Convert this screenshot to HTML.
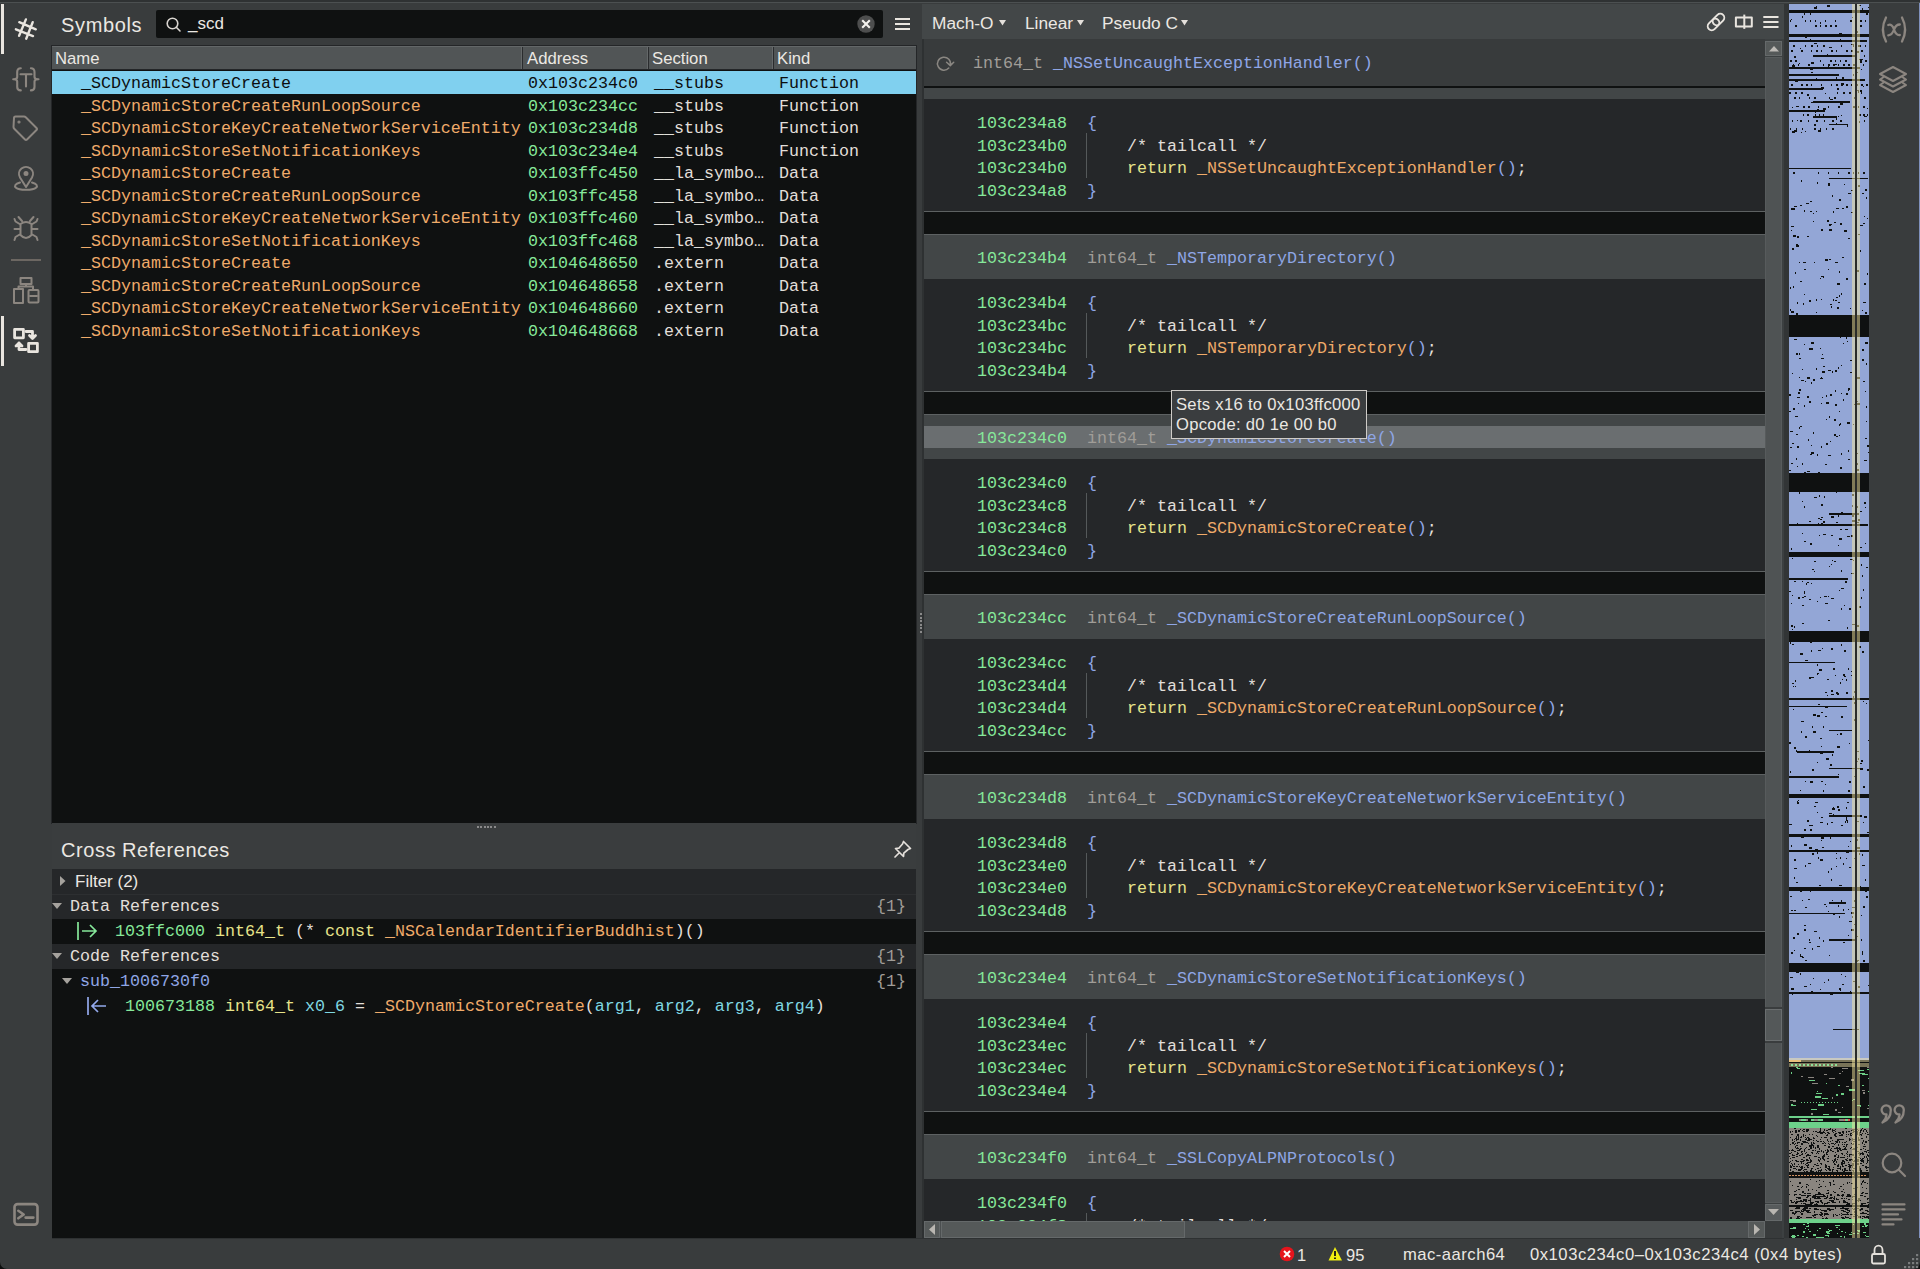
<!DOCTYPE html><html><head><meta charset="utf-8"><style>
*{margin:0;padding:0;box-sizing:border-box}
html,body{width:1920px;height:1269px;overflow:hidden;background:#393c3d;font-family:"Liberation Sans",sans-serif;color:#e4e1dc}
.a{position:absolute}
.m{font-family:"Liberation Mono",monospace;font-size:16.67px;white-space:pre;line-height:22.5px}
.s{font-family:"Liberation Sans",sans-serif;white-space:pre}
.ic{position:absolute;fill:none;stroke:#8c8680;stroke-width:2;stroke-linecap:round;stroke-linejoin:round}
.or{color:#f0ab6a}.gr{color:#86e89a}.wh{color:#e2dfda}.bl{color:#8fa6e6}.gy{color:#a09d98}.ye{color:#e7e38a}.cy{color:#7fd7e2}
</style></head><body>
<div class="a" style="left:0;top:0;width:1920px;height:2px;background:#2f3233"></div>
<div class="a" style="left:0;top:2px;width:1920px;height:1px;background:#4c5051"></div>
<div class="a" style="left:1px;top:4px;width:3px;height:50px;background:#e9e5df"></div>
<div class="a" style="left:1px;top:316px;width:3px;height:50px;background:#e9e5df"></div>
<div class="a" style="left:11px;top:259px;width:30px;height:2px;background:#6c6762"></div>
<svg class="ic" style="left:8px;top:10px;stroke:#e9e5df;stroke-width:2.4" width="36" height="36" viewBox="0 0 36 36"><path d="M11.3 12.2 L27.8 19.3 M7.9 19.3 L25 26.1 M17.9 9.4 L11.1 25.8 M24.7 12.2 L18.2 28.7"/></svg>
<svg class="ic" style="left:12px;top:66px;stroke-width:2.1" width="28" height="28" viewBox="0 0 28 28"><path d="M8.8 2.2 C6 2.2 5.2 3.5 5.2 6 L5.2 11 C5.2 12.5 4 13.3 1.2 13.3 C4 13.3 5.2 14.2 5.2 15.5 L5.2 21 C5.2 23.5 6 24.4 8.8 24.4 M18.9 2.2 C21.7 2.2 22.5 3.5 22.5 6 L22.5 11 C22.5 12.5 23.7 13.3 26.5 13.3 C23.7 13.3 22.5 14.2 22.5 15.5 L22.5 21 C22.5 23.5 21.7 24.4 18.9 24.4 M8.5 8.3 L19.5 8.3 M14 8.3 L14 20.5"/></svg>
<svg class="ic" style="left:12px;top:115px" width="28" height="28" viewBox="0 0 28 28"><path d="M2 3 Q2 1.5 3.5 1.5 L12 1.5 Q13 1.5 14 2.5 L24.5 13 Q25.5 14 24.5 15 L15 24.5 Q14 25.5 13 24.5 L2.5 14 Q1.5 13 1.5 12 Z"/><circle cx="7" cy="7" r="0.6" fill="#8c8680"/></svg>
<svg class="ic" style="left:12px;top:165px" width="28" height="28" viewBox="0 0 28 28"><path d="M14 22 L8 12.5 A7 7 0 1 1 20 12.5 Z"/><circle cx="14" cy="8.5" r="1.5" fill="#8c8680"/><path d="M8 17.5 C3 19 2 21 4 22.8 C7 25.5 21 25.5 24 22.8 C26 21 25 19 20 17.5"/></svg>
<svg class="ic" style="left:12px;top:215px" width="28" height="28" viewBox="0 0 28 28"><path d="M8.5 9 Q14 5 19.5 9 L19.5 20 Q14 26 8.5 20 Z M10 6 L6.5 2 M18 6 L21.5 2 M8.5 14 L2.5 14 M19.5 14 L25.5 14 M8.5 9.5 L3.5 6.5 L2.5 4 M19.5 9.5 L24.5 6.5 L25.5 4 M8.5 19 L3.5 22 L2.5 25 M19.5 19 L24.5 22 L25.5 25"/></svg>
<svg class="ic" style="left:12px;top:276px" width="28" height="29" viewBox="0 0 28 29"><rect x="8.5" y="2" width="11" height="6"/><path d="M14 8 L14 10.5 L6.5 10.5 L6.5 13 M14 10.5 L21 10.5 L21 13"/><rect x="2" y="13" width="9" height="14"/><rect x="16.5" y="14" width="10" height="12.5" rx="1"/><path d="M18 20 L25 20"/></svg>
<svg class="ic" style="left:12px;top:327px;stroke:#e9e5df;stroke-width:2.8" width="28" height="28" viewBox="0 0 28 28"><rect x="2.6" y="2.4" width="8.8" height="8.4"/><rect x="16.6" y="16.3" width="8.8" height="8.4"/><path d="M14 4.5 L20.5 4.5 L20.5 11 M17.5 8.5 L20.5 11.5 L23.5 8.5 M14 22.5 L7 22.5 L7 16 M4 19 L7 16 L10 19"/></svg>
<svg class="ic" style="left:12px;top:1202px;stroke-width:2.6" width="28" height="25" viewBox="0 0 28 25"><rect x="2.5" y="2.1" width="23" height="20.5" rx="3"/><path d="M6.3 8.8 L11.7 12.5 L6.3 16.3 M13.6 15.6 L21.4 15.6"/></svg>
<div class="a s" style="left:61px;top:12px;font-size:20px;line-height:26px;letter-spacing:0.65px;color:#ebe8e3">Symbols</div>
<div class="a" style="left:156px;top:10px;width:727px;height:27.5px;background:#0f1111;border-radius:2px"></div>
<svg class="ic" style="left:165px;top:16px;stroke:#d9d5d0;stroke-width:1.6" width="18" height="18" viewBox="0 0 18 18"><circle cx="7.5" cy="7.5" r="5.3"/><path d="M11.3 11.3 L15 15"/></svg>
<div class="a s" style="left:188px;top:13px;font-size:17px;line-height:22px;color:#ebe8e3">_scd</div>
<svg class="a" style="left:857px;top:15px" width="18" height="18" viewBox="0 0 18 18"><circle cx="9" cy="9" r="8.7" fill="#4d4e4e"/><path d="M5.2 5.2 L12.8 12.8 M12.8 5.2 L5.2 12.8" stroke="#f4f2ee" stroke-width="2.1"/></svg>
<svg class="ic" style="left:894px;top:14px;stroke:#e9e5df;stroke-width:2;stroke-linecap:butt" width="18" height="20" viewBox="0 0 18 20"><path d="M1 5 L16 5 M1 10 L16 10 M1 15 L16 15"/></svg>
<div class="a" style="left:51px;top:45px;width:866px;height:779px;background:#242628"></div>
<div class="a" style="left:52px;top:70px;width:864px;height:753px;background:#0f1111"></div>
<div class="a" style="left:52px;top:46px;width:864px;height:23px;background:#515556;border-top:1px solid #636768"></div>
<div class="a" style="left:521px;top:47px;width:1px;height:22px;background:#646869"></div>
<div class="a" style="left:522px;top:47px;width:1px;height:22px;background:#2a2c2e"></div>
<div class="a" style="left:647px;top:47px;width:1px;height:22px;background:#646869"></div>
<div class="a" style="left:648px;top:47px;width:1px;height:22px;background:#2a2c2e"></div>
<div class="a" style="left:772px;top:47px;width:1px;height:22px;background:#646869"></div>
<div class="a" style="left:773px;top:47px;width:1px;height:22px;background:#2a2c2e"></div>
<div class="a s" style="left:55px;top:48px;font-size:16.7px;line-height:22px;color:#ebe8e3">Name</div>
<div class="a s" style="left:527px;top:48px;font-size:16.7px;line-height:22px;color:#ebe8e3">Address</div>
<div class="a s" style="left:652px;top:48px;font-size:16.7px;line-height:22px;color:#ebe8e3">Section</div>
<div class="a s" style="left:777px;top:48px;font-size:16.7px;line-height:22px;color:#ebe8e3">Kind</div>
<div class="a" style="left:52px;top:71.0px;width:864px;height:22.5px;background:#80d0ef"></div>
<div class="a m" style="left:81px;top:73.0px;color:#0c0d0d">_SCDynamicStoreCreate</div>
<div class="a m" style="left:528px;top:73.0px;color:#0c0d0d">0x103c234c0</div>
<div class="a m" style="left:654px;top:73.0px;color:#0c0d0d">__stubs</div>
<div class="a m" style="left:779px;top:73.0px;color:#0c0d0d">Function</div>
<div class="a m" style="left:81px;top:95.5px;color:#f0ab6a">_SCDynamicStoreCreateRunLoopSource</div>
<div class="a m" style="left:528px;top:95.5px;color:#86e89a">0x103c234cc</div>
<div class="a m" style="left:654px;top:95.5px;color:#e2dfda">__stubs</div>
<div class="a m" style="left:779px;top:95.5px;color:#e2dfda">Function</div>
<div class="a m" style="left:81px;top:118.0px;color:#f0ab6a">_SCDynamicStoreKeyCreateNetworkServiceEntity</div>
<div class="a m" style="left:528px;top:118.0px;color:#86e89a">0x103c234d8</div>
<div class="a m" style="left:654px;top:118.0px;color:#e2dfda">__stubs</div>
<div class="a m" style="left:779px;top:118.0px;color:#e2dfda">Function</div>
<div class="a m" style="left:81px;top:140.5px;color:#f0ab6a">_SCDynamicStoreSetNotificationKeys</div>
<div class="a m" style="left:528px;top:140.5px;color:#86e89a">0x103c234e4</div>
<div class="a m" style="left:654px;top:140.5px;color:#e2dfda">__stubs</div>
<div class="a m" style="left:779px;top:140.5px;color:#e2dfda">Function</div>
<div class="a m" style="left:81px;top:163.0px;color:#f0ab6a">_SCDynamicStoreCreate</div>
<div class="a m" style="left:528px;top:163.0px;color:#86e89a">0x103ffc450</div>
<div class="a m" style="left:654px;top:163.0px;color:#e2dfda">__la_symbo…</div>
<div class="a m" style="left:779px;top:163.0px;color:#e2dfda">Data</div>
<div class="a m" style="left:81px;top:185.5px;color:#f0ab6a">_SCDynamicStoreCreateRunLoopSource</div>
<div class="a m" style="left:528px;top:185.5px;color:#86e89a">0x103ffc458</div>
<div class="a m" style="left:654px;top:185.5px;color:#e2dfda">__la_symbo…</div>
<div class="a m" style="left:779px;top:185.5px;color:#e2dfda">Data</div>
<div class="a m" style="left:81px;top:208.0px;color:#f0ab6a">_SCDynamicStoreKeyCreateNetworkServiceEntity</div>
<div class="a m" style="left:528px;top:208.0px;color:#86e89a">0x103ffc460</div>
<div class="a m" style="left:654px;top:208.0px;color:#e2dfda">__la_symbo…</div>
<div class="a m" style="left:779px;top:208.0px;color:#e2dfda">Data</div>
<div class="a m" style="left:81px;top:230.5px;color:#f0ab6a">_SCDynamicStoreSetNotificationKeys</div>
<div class="a m" style="left:528px;top:230.5px;color:#86e89a">0x103ffc468</div>
<div class="a m" style="left:654px;top:230.5px;color:#e2dfda">__la_symbo…</div>
<div class="a m" style="left:779px;top:230.5px;color:#e2dfda">Data</div>
<div class="a m" style="left:81px;top:253.0px;color:#f0ab6a">_SCDynamicStoreCreate</div>
<div class="a m" style="left:528px;top:253.0px;color:#86e89a">0x104648650</div>
<div class="a m" style="left:654px;top:253.0px;color:#e2dfda">.extern</div>
<div class="a m" style="left:779px;top:253.0px;color:#e2dfda">Data</div>
<div class="a m" style="left:81px;top:275.5px;color:#f0ab6a">_SCDynamicStoreCreateRunLoopSource</div>
<div class="a m" style="left:528px;top:275.5px;color:#86e89a">0x104648658</div>
<div class="a m" style="left:654px;top:275.5px;color:#e2dfda">.extern</div>
<div class="a m" style="left:779px;top:275.5px;color:#e2dfda">Data</div>
<div class="a m" style="left:81px;top:298.0px;color:#f0ab6a">_SCDynamicStoreKeyCreateNetworkServiceEntity</div>
<div class="a m" style="left:528px;top:298.0px;color:#86e89a">0x104648660</div>
<div class="a m" style="left:654px;top:298.0px;color:#e2dfda">.extern</div>
<div class="a m" style="left:779px;top:298.0px;color:#e2dfda">Data</div>
<div class="a m" style="left:81px;top:320.5px;color:#f0ab6a">_SCDynamicStoreSetNotificationKeys</div>
<div class="a m" style="left:528px;top:320.5px;color:#86e89a">0x104648668</div>
<div class="a m" style="left:654px;top:320.5px;color:#e2dfda">.extern</div>
<div class="a m" style="left:779px;top:320.5px;color:#e2dfda">Data</div>
<div class="a" style="left:52px;top:823px;width:864px;height:46px;background:#3a3d3e"></div>
<div class="a" style="left:477px;top:826px;width:20px;height:2px;background:repeating-linear-gradient(90deg,#8a8a8a 0 2px,transparent 2px 3.3px)"></div>
<div class="a s" style="left:61px;top:837px;font-size:20px;line-height:26px;letter-spacing:0.55px;color:#ebe8e3">Cross References</div>
<svg class="ic" style="left:891px;top:839px;stroke:#e4e0db;stroke-width:1.7" width="22" height="22" viewBox="0 0 22 22"><path d="M12.5 2.5 L19.5 9.5 L17 10.5 L12.8 14.2 L12.5 17.5 L4.5 9.5 L7.8 9.2 L11.5 5 Z M8.5 13.5 L4 18"/></svg>
<div class="a" style="left:52px;top:869px;width:864px;height:369px;background:#0f1111"></div>
<div class="a" style="left:52px;top:869px;width:864px;height:25px;background:#252729"></div>
<div class="a" style="left:52px;top:894px;width:864px;height:1px;background:#2d2f31"></div>
<div class="a" style="left:52px;top:895px;width:864px;height:24px;background:#252729"></div>
<div class="a" style="left:52px;top:944px;width:864px;height:25px;background:#252729"></div>
<svg class="a" style="left:59px;top:875px" width="8" height="12"><path d="M1 1 L6.5 6 L1 11 Z" fill="#a5a29d"/></svg>
<div class="a s" style="left:75px;top:871px;font-size:17px;line-height:22px;color:#ebe8e3">Filter (2)</div>
<svg class="a" style="left:51px;top:902px" width="12" height="8"><path d="M1 1 L11 1 L6 7 Z" fill="#a5a29d"/></svg>
<div class="a m" style="left:70px;top:896.2px;color:#e2dfda">Data References</div>
<div class="a m" style="left:876px;top:896.2px;color:#a09d98">{1}</div>
<svg class="a" style="left:76px;top:920px" width="24" height="22" viewBox="0 0 24 22"><path d="M2 2 L2 20 M6 11 L20 11 M14 5 L20 11 L14 17" stroke="#86e89a" stroke-width="1.7" fill="none"/></svg>
<div class="a m" style="left:115px;top:921.2px"><span class="gr">103ffc000</span> <span class="ye">int64_t</span> <span class="wh">(*</span> <span class="ye">const</span> <span class="or">_NSCalendarIdentifierBuddhist</span><span class="wh">)()</span></div>
<svg class="a" style="left:51px;top:952px" width="12" height="8"><path d="M1 1 L11 1 L6 7 Z" fill="#a5a29d"/></svg>
<div class="a m" style="left:70px;top:946.2px;color:#e2dfda">Code References</div>
<div class="a m" style="left:876px;top:946.2px;color:#a09d98">{1}</div>
<svg class="a" style="left:61px;top:977px" width="12" height="8"><path d="M1 1 L11 1 L6 7 Z" fill="#a5a29d"/></svg>
<div class="a m" style="left:80px;top:971.2px;color:#8fa6e6">sub_1006730f0</div>
<div class="a m" style="left:876px;top:971.2px;color:#a09d98">{1}</div>
<svg class="a" style="left:86px;top:995px" width="24" height="22" viewBox="0 0 24 22"><path d="M2 2 L2 20 M6 11 L20 11 M12 5 L6 11 L12 17" stroke="#93a9ec" stroke-width="1.7" fill="none"/></svg>
<div class="a m" style="left:125px;top:996.2px"><span class="gr">100673188</span> <span class="ye">int64_t</span> <span class="cy">x0_6</span> <span class="wh">=</span> <span class="or">_SCDynamicStoreCreate</span><span class="wh">(</span><span class="cy">arg1</span><span class="wh">, </span><span class="cy">arg2</span><span class="wh">, </span><span class="cy">arg3</span><span class="wh">, </span><span class="cy">arg4</span><span class="wh">)</span></div>
<div class="a" style="left:922px;top:39px;width:2px;height:1199px;background:#2e3132"></div>
<div class="a" style="left:920px;top:613px;width:2px;height:21px;background:repeating-linear-gradient(180deg,#8a8a8a 0 2px,transparent 2px 3.5px)"></div>
<div class="a" style="left:922px;top:4px;width:862px;height:35px;background:#434748"></div>
<div class="a" style="left:922px;top:38.5px;width:862px;height:1px;background:#2f3233"></div>
<div class="a s" style="left:932px;top:12px;font-size:17.3px;line-height:22px;color:#ebe8e3">Mach-O</div><svg class="a" style="left:999px;top:20px" width="8" height="6"><path d="M0 0 L7 0 L3.5 5.5 Z" fill="#e4e0db"/></svg>
<div class="a s" style="left:1025px;top:12px;font-size:17.3px;line-height:22px;color:#ebe8e3">Linear</div><svg class="a" style="left:1077px;top:20px" width="8" height="6"><path d="M0 0 L7 0 L3.5 5.5 Z" fill="#e4e0db"/></svg>
<div class="a s" style="left:1102px;top:12px;font-size:17.3px;line-height:22px;color:#ebe8e3">Pseudo C</div><svg class="a" style="left:1181px;top:20px" width="8" height="6"><path d="M0 0 L7 0 L3.5 5.5 Z" fill="#e4e0db"/></svg>
<svg class="ic" style="left:1704px;top:9px;stroke:#e9e5df;stroke-width:1.9" width="24" height="24" viewBox="0 0 24 24"><rect x="3" y="11.5" width="13" height="8" rx="4" transform="rotate(-45 9.5 15.5)"/><rect x="8" y="6.5" width="13" height="8" rx="4" transform="rotate(-45 14.5 10.5)"/></svg>
<svg class="ic" style="left:1734px;top:13px;stroke:#e9e5df;stroke-width:2;stroke-linecap:butt" width="20" height="18" viewBox="0 0 20 18"><rect x="1.9" y="4.4" width="15.9" height="9.2"/><path d="M10.3 1.6 L10.3 15.9"/></svg>
<svg class="ic" style="left:1762px;top:14px;stroke:#e9e5df;stroke-width:2;stroke-linecap:butt" width="18" height="16" viewBox="0 0 18 16"><path d="M1.3 3 L16.5 3 M1.3 8 L16.5 8 M1.3 13 L16.5 13"/></svg>
<div class="a" style="left:924px;top:39px;width:841px;height:1182px;background:#252729;overflow:hidden">
<div class="a" style="left:0px;top:16px;width:841px;height:44px;background:#424647;"></div>
<div class="a" style="left:0px;top:172px;width:841px;height:1px;background:#5d6162;"></div>
<div class="a" style="left:0px;top:173px;width:841px;height:22px;background:#0f1111;"></div>
<div class="a" style="left:0px;top:195px;width:841px;height:1px;background:#5d6162;"></div>
<div class="a m" style="left:53px;top:28.75px"><span class="gr">103c234a8</span>  <span class="gy">int64_t</span> <span class="bl">_NSSetUncaughtExceptionHandler()</span></div>
<div class="a m" style="left:53px;top:73.75px"><span class="gr">103c234a8</span>  <span class="bl">{</span></div>
<div class="a m" style="left:53px;top:96.75px"><span class="gr">103c234b0</span>      <span class="wh">/* tailcall */</span></div>
<div class="a m" style="left:53px;top:118.75px"><span class="gr">103c234b0</span>      <span class="ye">return</span> <span class="or">_NSSetUncaughtExceptionHandler</span><span class="bl">()</span><span class="wh">;</span></div>
<div class="a m" style="left:53px;top:141.75px"><span class="gr">103c234a8</span>  <span class="bl">}</span></div>
<div class="a" style="left:162px;top:94px;width:1px;height:45px;background:#55595a;"></div>
<div class="a" style="left:0px;top:196px;width:841px;height:44px;background:#424647;"></div>
<div class="a" style="left:0px;top:352px;width:841px;height:1px;background:#5d6162;"></div>
<div class="a" style="left:0px;top:353px;width:841px;height:22px;background:#0f1111;"></div>
<div class="a" style="left:0px;top:375px;width:841px;height:1px;background:#5d6162;"></div>
<div class="a m" style="left:53px;top:208.75px"><span class="gr">103c234b4</span>  <span class="gy">int64_t</span> <span class="bl">_NSTemporaryDirectory()</span></div>
<div class="a m" style="left:53px;top:253.75px"><span class="gr">103c234b4</span>  <span class="bl">{</span></div>
<div class="a m" style="left:53px;top:276.75px"><span class="gr">103c234bc</span>      <span class="wh">/* tailcall */</span></div>
<div class="a m" style="left:53px;top:298.75px"><span class="gr">103c234bc</span>      <span class="ye">return</span> <span class="or">_NSTemporaryDirectory</span><span class="bl">()</span><span class="wh">;</span></div>
<div class="a m" style="left:53px;top:321.75px"><span class="gr">103c234b4</span>  <span class="bl">}</span></div>
<div class="a" style="left:162px;top:274px;width:1px;height:45px;background:#55595a;"></div>
<div class="a" style="left:0px;top:376px;width:841px;height:44px;background:#424647;"></div>
<div class="a" style="left:0px;top:386.5px;width:841px;height:22px;background:#6a6e70;"></div>
<div class="a" style="left:0px;top:532px;width:841px;height:1px;background:#5d6162;"></div>
<div class="a" style="left:0px;top:533px;width:841px;height:22px;background:#0f1111;"></div>
<div class="a" style="left:0px;top:555px;width:841px;height:1px;background:#5d6162;"></div>
<div class="a m" style="left:53px;top:388.75px"><span class="gr">103c234c0</span>  <span class="gy">int64_t</span> <span class="bl">_SCDynamicStoreCreate()</span></div>
<div class="a m" style="left:53px;top:433.75px"><span class="gr">103c234c0</span>  <span class="bl">{</span></div>
<div class="a m" style="left:53px;top:456.75px"><span class="gr">103c234c8</span>      <span class="wh">/* tailcall */</span></div>
<div class="a m" style="left:53px;top:478.75px"><span class="gr">103c234c8</span>      <span class="ye">return</span> <span class="or">_SCDynamicStoreCreate</span><span class="bl">()</span><span class="wh">;</span></div>
<div class="a m" style="left:53px;top:501.75px"><span class="gr">103c234c0</span>  <span class="bl">}</span></div>
<div class="a" style="left:162px;top:454px;width:1px;height:45px;background:#55595a;"></div>
<div class="a" style="left:0px;top:556px;width:841px;height:44px;background:#424647;"></div>
<div class="a" style="left:0px;top:712px;width:841px;height:1px;background:#5d6162;"></div>
<div class="a" style="left:0px;top:713px;width:841px;height:22px;background:#0f1111;"></div>
<div class="a" style="left:0px;top:735px;width:841px;height:1px;background:#5d6162;"></div>
<div class="a m" style="left:53px;top:568.75px"><span class="gr">103c234cc</span>  <span class="gy">int64_t</span> <span class="bl">_SCDynamicStoreCreateRunLoopSource()</span></div>
<div class="a m" style="left:53px;top:613.75px"><span class="gr">103c234cc</span>  <span class="bl">{</span></div>
<div class="a m" style="left:53px;top:636.75px"><span class="gr">103c234d4</span>      <span class="wh">/* tailcall */</span></div>
<div class="a m" style="left:53px;top:658.75px"><span class="gr">103c234d4</span>      <span class="ye">return</span> <span class="or">_SCDynamicStoreCreateRunLoopSource</span><span class="bl">()</span><span class="wh">;</span></div>
<div class="a m" style="left:53px;top:681.75px"><span class="gr">103c234cc</span>  <span class="bl">}</span></div>
<div class="a" style="left:162px;top:634px;width:1px;height:45px;background:#55595a;"></div>
<div class="a" style="left:0px;top:736px;width:841px;height:44px;background:#424647;"></div>
<div class="a" style="left:0px;top:892px;width:841px;height:1px;background:#5d6162;"></div>
<div class="a" style="left:0px;top:893px;width:841px;height:22px;background:#0f1111;"></div>
<div class="a" style="left:0px;top:915px;width:841px;height:1px;background:#5d6162;"></div>
<div class="a m" style="left:53px;top:748.75px"><span class="gr">103c234d8</span>  <span class="gy">int64_t</span> <span class="bl">_SCDynamicStoreKeyCreateNetworkServiceEntity()</span></div>
<div class="a m" style="left:53px;top:793.75px"><span class="gr">103c234d8</span>  <span class="bl">{</span></div>
<div class="a m" style="left:53px;top:816.75px"><span class="gr">103c234e0</span>      <span class="wh">/* tailcall */</span></div>
<div class="a m" style="left:53px;top:838.75px"><span class="gr">103c234e0</span>      <span class="ye">return</span> <span class="or">_SCDynamicStoreKeyCreateNetworkServiceEntity</span><span class="bl">()</span><span class="wh">;</span></div>
<div class="a m" style="left:53px;top:861.75px"><span class="gr">103c234d8</span>  <span class="bl">}</span></div>
<div class="a" style="left:162px;top:814px;width:1px;height:45px;background:#55595a;"></div>
<div class="a" style="left:0px;top:916px;width:841px;height:44px;background:#424647;"></div>
<div class="a" style="left:0px;top:1072px;width:841px;height:1px;background:#5d6162;"></div>
<div class="a" style="left:0px;top:1073px;width:841px;height:22px;background:#0f1111;"></div>
<div class="a" style="left:0px;top:1095px;width:841px;height:1px;background:#5d6162;"></div>
<div class="a m" style="left:53px;top:928.75px"><span class="gr">103c234e4</span>  <span class="gy">int64_t</span> <span class="bl">_SCDynamicStoreSetNotificationKeys()</span></div>
<div class="a m" style="left:53px;top:973.75px"><span class="gr">103c234e4</span>  <span class="bl">{</span></div>
<div class="a m" style="left:53px;top:996.75px"><span class="gr">103c234ec</span>      <span class="wh">/* tailcall */</span></div>
<div class="a m" style="left:53px;top:1018.75px"><span class="gr">103c234ec</span>      <span class="ye">return</span> <span class="or">_SCDynamicStoreSetNotificationKeys</span><span class="bl">()</span><span class="wh">;</span></div>
<div class="a m" style="left:53px;top:1041.75px"><span class="gr">103c234e4</span>  <span class="bl">}</span></div>
<div class="a" style="left:162px;top:994px;width:1px;height:45px;background:#55595a;"></div>
<div class="a" style="left:0px;top:1096px;width:841px;height:44px;background:#424647;"></div>
<div class="a" style="left:0px;top:1252px;width:841px;height:1px;background:#5d6162;"></div>
<div class="a" style="left:0px;top:1253px;width:841px;height:22px;background:#0f1111;"></div>
<div class="a" style="left:0px;top:1275px;width:841px;height:1px;background:#5d6162;"></div>
<div class="a m" style="left:53px;top:1108.75px"><span class="gr">103c234f0</span>  <span class="gy">int64_t</span> <span class="bl">_SSLCopyALPNProtocols()</span></div>
<div class="a m" style="left:53px;top:1153.75px"><span class="gr">103c234f0</span>  <span class="bl">{</span></div>
<div class="a m" style="left:53px;top:1176.75px"><span class="gr">103c234f8</span>      <span class="wh">/* tailcall */</span></div>
<div class="a m" style="left:53px;top:1198.75px"><span class="gr">103c234f8</span>      <span class="ye">return</span> <span class="or">_SSLCopyALPNProtocols</span><span class="bl">()</span><span class="wh">;</span></div>
<div class="a m" style="left:53px;top:1221.75px"><span class="gr">103c234f0</span>  <span class="bl">}</span></div>
<div class="a" style="left:162px;top:1174px;width:1px;height:45px;background:#55595a;"></div>
<div class="a" style="left:0px;top:0px;width:841px;height:47px;background:#383b3c;"></div>
<div class="a" style="left:0px;top:47px;width:841px;height:1.5px;background:#0f1111;"></div>
<div class="a m" style="left:49px;top:13.75px"><span class="gy">int64_t</span> <span class="bl">_NSSetUncaughtExceptionHandler()</span></div>
<svg class="ic" style="left:11px;top:16px;stroke:#8a8782;stroke-width:1.5" width="22" height="18" viewBox="0 0 22 18"><path d="M13.78 13.08 A6.5 6.5 0 1 1 15.3 10.2 M11.6 7.3 L15.3 10.6 L18.7 7.3"/></svg>
</div>
<div class="a" style="left:924px;top:1221px;width:841px;height:17px;background:#4b4f50"></div>
<div class="a" style="left:924px;top:1221px;width:16px;height:17px;background:#555959;border:1px solid #65696a"></div>
<div class="a" style="left:941px;top:1221px;width:244px;height:17px;background:#555959;border:1px solid #65696a"></div>
<div class="a" style="left:1748px;top:1221px;width:17px;height:17px;background:#555959;border:1px solid #65696a"></div>
<div class="a" style="left:1765px;top:39px;width:17px;height:1182px;background:#3c4041"></div>
<div class="a" style="left:1765px;top:57px;width:17px;height:1146px;background:#4f5354;border:1px solid #575b5c"></div>
<div class="a" style="left:1765px;top:41px;width:17px;height:15px;background:#555959;border:1px solid #65696a"></div>
<svg class="a" style="left:1768.5px;top:46px" width="10" height="5.5"><path d="M0 5.5 L5 0 L10 5.5 Z" fill="#bdbab5"/></svg>
<div class="a" style="left:1765px;top:1204px;width:17px;height:17px;background:#575b5c;border:1px solid #65696a"></div>
<svg class="a" style="left:1768px;top:1209px" width="11" height="6"><path d="M0 0 L5.5 6 L11 0 Z" fill="#b9b6b1"/></svg>
<div class="a" style="left:1765px;top:1007px;width:17px;height:36px;background:#3a3d3e"></div>
<div class="a" style="left:1765px;top:1009px;width:17px;height:32px;background:#545859;border:1px solid #6a6e6f"></div>
<svg class="a" style="left:929px;top:1224px" width="6" height="11"><path d="M6 0 L0 5.5 L6 11 Z" fill="#b9b6b1"/></svg>
<svg class="a" style="left:1754px;top:1224px" width="6" height="11"><path d="M0 0 L6 5.5 L0 11 Z" fill="#b9b6b1"/></svg>
<div class="a" style="left:1765px;top:1221px;width:17px;height:17px;background:#383b3c"></div>
<div class="a" style="left:922px;top:1238px;width:862px;height:1px;background:#2e3132"></div>
<div class="a" style="left:1171px;top:389.5px;width:196px;height:49px;background:#3a3d3f;border:1px solid #cfccc8"></div>
<div class="a s" style="left:1176px;top:394.5px;font-size:16.6px;line-height:20px;letter-spacing:0.3px;color:#ebe8e3">Sets x16 to 0x103ffc000<br>Opcode: d0 1e 00 b0</div>
<div class="a" style="left:1782px;top:39px;width:2px;height:1199px;background:#3c4041"></div>
<div class="a" style="left:1784px;top:4px;width:5px;height:1234px;background:#323536"></div>
<svg class="a" style="left:1789px;top:4px" width="80" height="1234" viewBox="0 0 80 1234" shape-rendering="crispEdges"><rect x="0" y="0" width="80" height="1234" fill="#93a6d6"/><rect x="0.0" y="6.0" width="80.0" height="3.0" fill="#0f1111"/><rect x="0.0" y="30.0" width="80.0" height="2.6" fill="#0f1111"/><rect x="0.0" y="311.0" width="80.0" height="21.5" fill="#0f1111"/><rect x="0.0" y="468.6" width="80.0" height="18.9" fill="#0f1111"/><rect x="0.0" y="548.0" width="80.0" height="4.6" fill="#0f1111"/><rect x="0.0" y="627.3" width="80.0" height="10.9" fill="#0f1111"/><rect x="0.0" y="883.0" width="80.0" height="4.0" fill="#0f1111"/><rect x="0.0" y="958.8" width="80.0" height="8.8" fill="#0f1111"/><rect x="0.0" y="987.8" width="80.0" height="2.5" fill="#0f1111"/><rect x="0.0" y="790.0" width="80.0" height="3.8" fill="#0f1111"/><rect x="0.0" y="830.0" width="80.0" height="3.0" fill="#0f1111"/><rect x="0.0" y="694.0" width="80.0" height="2.0" fill="#0f1111"/><rect x="0.0" y="845.5" width="80.0" height="2.0" fill="#0f1111"/><rect x="0.0" y="36.0" width="77.5" height="1.5" fill="#0f1111"/><rect x="24.0" y="51.0" width="44.3" height="1.5" fill="#0f1111"/><rect x="0.0" y="63.0" width="71.4" height="1.5" fill="#0f1111"/><rect x="0.0" y="70.4" width="49.6" height="1.5" fill="#0f1111"/><rect x="0.0" y="75.4" width="75.7" height="1.5" fill="#0f1111"/><rect x="0.0" y="84.0" width="33.8" height="1.5" fill="#0f1111"/><rect x="24.0" y="97.0" width="36.5" height="1.5" fill="#0f1111"/><rect x="0.0" y="106.0" width="36.4" height="1.5" fill="#0f1111"/><rect x="24.0" y="112.0" width="24.4" height="1.5" fill="#0f1111"/><rect x="40.0" y="119.5" width="19.0" height="1.5" fill="#0f1111"/><rect x="0.0" y="163.7" width="62.3" height="1.5" fill="#0f1111"/><rect x="40.0" y="173.8" width="38.7" height="1.5" fill="#0f1111"/><rect x="40.0" y="509.0" width="30.1" height="1.5" fill="#0f1111"/><rect x="0.0" y="520.0" width="78.9" height="1.5" fill="#0f1111"/><rect x="0.0" y="574.0" width="58.7" height="1.5" fill="#0f1111"/><rect x="0.0" y="657.6" width="45.9" height="1.5" fill="#0f1111"/><rect x="0.0" y="701.7" width="58.0" height="1.5" fill="#0f1111"/><rect x="40.0" y="725.7" width="23.4" height="1.5" fill="#0f1111"/><rect x="8.0" y="747.0" width="36.6" height="1.5" fill="#0f1111"/><rect x="40.0" y="763.5" width="29.7" height="1.5" fill="#0f1111"/><rect x="0.0" y="772.0" width="49.9" height="1.5" fill="#0f1111"/><rect x="40.0" y="811.0" width="33.1" height="1.5" fill="#0f1111"/><rect x="40.0" y="898.0" width="17.4" height="1.5" fill="#0f1111"/><rect x="0.0" y="908.5" width="55.8" height="1.5" fill="#0f1111"/><rect x="40.0" y="935.0" width="26.3" height="1.5" fill="#0f1111"/><rect x="46.8" y="431.7" width="2.0" height="1.5" fill="#0f1111"/><rect x="63.6" y="420.0" width="1.0" height="1.0" fill="#0f1111"/><rect x="42.0" y="643.6" width="2.0" height="2.0" fill="#0f1111"/><rect x="48.7" y="541.4" width="1.0" height="1.0" fill="#0f1111"/><rect x="13.2" y="592.7" width="2.0" height="1.0" fill="#0f1111"/><rect x="33.7" y="935.7" width="1.0" height="2.0" fill="#0f1111"/><rect x="70.0" y="642.4" width="2.0" height="1.5" fill="#0f1111"/><rect x="47.5" y="742.0" width="3.0" height="1.5" fill="#0f1111"/><rect x="7.5" y="232.0" width="2.0" height="1.5" fill="#0f1111"/><rect x="5.2" y="743.4" width="2.0" height="2.0" fill="#0f1111"/><rect x="54.5" y="646.4" width="2.0" height="1.5" fill="#0f1111"/><rect x="71.0" y="759.3" width="2.0" height="1.0" fill="#0f1111"/><rect x="28.4" y="941.7" width="3.0" height="1.0" fill="#0f1111"/><rect x="17.5" y="577.9" width="2.0" height="1.0" fill="#0f1111"/><rect x="31.8" y="777.0" width="2.0" height="1.0" fill="#0f1111"/><rect x="32.1" y="311.4" width="2.0" height="1.0" fill="#0f1111"/><rect x="69.1" y="842.9" width="2.0" height="2.0" fill="#0f1111"/><rect x="28.7" y="514.1" width="2.0" height="1.0" fill="#0f1111"/><rect x="14.1" y="298.8" width="1.0" height="2.0" fill="#0f1111"/><rect x="38.8" y="365.9" width="3.0" height="1.0" fill="#0f1111"/><rect x="0.3" y="389.9" width="2.0" height="2.0" fill="#0f1111"/><rect x="45.3" y="476.6" width="1.0" height="2.0" fill="#0f1111"/><rect x="76.0" y="875.4" width="1.0" height="1.5" fill="#0f1111"/><rect x="62.4" y="908.2" width="3.0" height="1.5" fill="#0f1111"/><rect x="31.5" y="500.0" width="2.0" height="2.0" fill="#0f1111"/><rect x="15.2" y="502.0" width="1.0" height="1.5" fill="#0f1111"/><rect x="27.2" y="308.1" width="1.0" height="1.0" fill="#0f1111"/><rect x="12.1" y="176.2" width="1.0" height="1.5" fill="#0f1111"/><rect x="5.6" y="675.6" width="1.0" height="2.0" fill="#0f1111"/><rect x="50.8" y="482.3" width="2.0" height="2.0" fill="#0f1111"/><rect x="9.8" y="472.4" width="2.0" height="1.5" fill="#0f1111"/><rect x="24.9" y="567.0" width="1.0" height="1.0" fill="#0f1111"/><rect x="59.2" y="786.2" width="2.0" height="2.0" fill="#0f1111"/><rect x="1.8" y="307.4" width="3.0" height="1.5" fill="#0f1111"/><rect x="43.5" y="295.3" width="1.0" height="2.0" fill="#0f1111"/><rect x="51.4" y="418.6" width="1.0" height="2.0" fill="#0f1111"/><rect x="41.5" y="864.2" width="1.0" height="1.5" fill="#0f1111"/><rect x="42.6" y="804.4" width="3.0" height="1.5" fill="#0f1111"/><rect x="49.1" y="694.1" width="1.0" height="1.0" fill="#0f1111"/><rect x="59.2" y="842.1" width="1.0" height="1.0" fill="#0f1111"/><rect x="28.4" y="597.4" width="1.0" height="1.0" fill="#0f1111"/><rect x="37.8" y="819.2" width="1.0" height="2.0" fill="#0f1111"/><rect x="27.5" y="668.6" width="2.0" height="1.5" fill="#0f1111"/><rect x="8.2" y="241.6" width="2.0" height="1.0" fill="#0f1111"/><rect x="38.6" y="450.9" width="3.0" height="1.0" fill="#0f1111"/><rect x="52.2" y="566.3" width="1.0" height="2.0" fill="#0f1111"/><rect x="31.1" y="273.6" width="1.0" height="1.5" fill="#0f1111"/><rect x="34.7" y="899.7" width="2.0" height="1.0" fill="#0f1111"/><rect x="77.7" y="827.9" width="2.0" height="1.5" fill="#0f1111"/><rect x="75.7" y="502.7" width="1.0" height="1.0" fill="#0f1111"/><rect x="2.2" y="984.4" width="3.0" height="1.5" fill="#0f1111"/><rect x="11.7" y="832.5" width="3.0" height="1.5" fill="#0f1111"/><rect x="28.0" y="711.0" width="3.0" height="2.0" fill="#0f1111"/><rect x="1.1" y="282.6" width="1.0" height="2.0" fill="#0f1111"/><rect x="11.1" y="786.1" width="1.0" height="1.0" fill="#0f1111"/><rect x="17.0" y="198.8" width="3.0" height="1.0" fill="#0f1111"/><rect x="26.1" y="797.6" width="3.0" height="1.5" fill="#0f1111"/><rect x="4.9" y="855.0" width="2.0" height="1.5" fill="#0f1111"/><rect x="65.2" y="715.3" width="3.0" height="1.5" fill="#0f1111"/><rect x="70.3" y="849.3" width="1.0" height="2.0" fill="#0f1111"/><rect x="40.8" y="299.6" width="2.0" height="1.0" fill="#0f1111"/><rect x="62.1" y="671.4" width="1.0" height="1.0" fill="#0f1111"/><rect x="49.5" y="291.2" width="1.0" height="2.0" fill="#0f1111"/><rect x="54.6" y="226.3" width="3.0" height="2.0" fill="#0f1111"/><rect x="62.1" y="568.7" width="3.0" height="1.0" fill="#0f1111"/><rect x="22.2" y="378.3" width="1.0" height="2.0" fill="#0f1111"/><rect x="2.2" y="544.1" width="1.0" height="1.5" fill="#0f1111"/><rect x="77.9" y="441.0" width="3.0" height="2.0" fill="#0f1111"/><rect x="22.2" y="338.3" width="3.0" height="2.0" fill="#0f1111"/><rect x="40.6" y="833.2" width="1.0" height="2.0" fill="#0f1111"/><rect x="70.1" y="601.9" width="2.0" height="2.0" fill="#0f1111"/><rect x="16.2" y="902.7" width="2.0" height="1.0" fill="#0f1111"/><rect x="31.4" y="515.1" width="2.0" height="1.0" fill="#0f1111"/><rect x="34.3" y="722.3" width="1.0" height="2.0" fill="#0f1111"/><rect x="9.8" y="422.5" width="1.0" height="2.0" fill="#0f1111"/><rect x="29.3" y="699.8" width="2.0" height="1.0" fill="#0f1111"/><rect x="17.6" y="963.6" width="1.0" height="1.5" fill="#0f1111"/><rect x="13.0" y="896.3" width="1.0" height="1.0" fill="#0f1111"/><rect x="79.5" y="750.9" width="2.0" height="1.5" fill="#0f1111"/><rect x="28.5" y="518.9" width="1.0" height="2.0" fill="#0f1111"/><rect x="27.0" y="473.9" width="2.0" height="1.5" fill="#0f1111"/><rect x="30.7" y="748.4" width="3.0" height="2.0" fill="#0f1111"/><rect x="76.9" y="416.5" width="1.0" height="1.0" fill="#0f1111"/><rect x="8.4" y="967.0" width="2.0" height="1.5" fill="#0f1111"/><rect x="62.3" y="208.2" width="2.0" height="1.0" fill="#0f1111"/><rect x="68.0" y="843.3" width="2.0" height="1.5" fill="#0f1111"/><rect x="73.5" y="297.6" width="3.0" height="1.5" fill="#0f1111"/><rect x="7.2" y="746.1" width="1.0" height="2.0" fill="#0f1111"/><rect x="71.6" y="325.2" width="2.0" height="1.0" fill="#0f1111"/><rect x="64.1" y="692.4" width="1.0" height="2.0" fill="#0f1111"/><rect x="5.3" y="873.0" width="1.0" height="1.5" fill="#0f1111"/><rect x="79.5" y="185.4" width="2.0" height="1.5" fill="#0f1111"/><rect x="3.5" y="682.1" width="1.0" height="1.0" fill="#0f1111"/><rect x="21.0" y="964.9" width="1.0" height="1.0" fill="#0f1111"/><rect x="50.3" y="934.8" width="3.0" height="1.0" fill="#0f1111"/><rect x="40.0" y="412.0" width="1.0" height="1.5" fill="#0f1111"/><rect x="1.5" y="458.5" width="2.0" height="1.0" fill="#0f1111"/><rect x="58.6" y="188.5" width="3.0" height="1.0" fill="#0f1111"/><rect x="19.7" y="594.6" width="2.0" height="1.0" fill="#0f1111"/><rect x="52.0" y="711.9" width="2.0" height="2.0" fill="#0f1111"/><rect x="31.4" y="855.4" width="3.0" height="1.5" fill="#0f1111"/><rect x="78.6" y="735.8" width="2.0" height="1.0" fill="#0f1111"/><rect x="56.5" y="853.5" width="1.0" height="1.5" fill="#0f1111"/><rect x="78.6" y="981.4" width="1.0" height="1.0" fill="#0f1111"/><rect x="59.3" y="233.6" width="2.0" height="1.5" fill="#0f1111"/><rect x="6.8" y="308.9" width="2.0" height="2.0" fill="#0f1111"/><rect x="22.6" y="721.8" width="1.0" height="2.0" fill="#0f1111"/><rect x="36.8" y="414.5" width="1.0" height="1.5" fill="#0f1111"/><rect x="21.1" y="538.9" width="2.0" height="2.0" fill="#0f1111"/><rect x="2.8" y="439.4" width="2.0" height="1.0" fill="#0f1111"/><rect x="0.1" y="466.3" width="2.0" height="1.0" fill="#0f1111"/><rect x="40.2" y="562.4" width="1.0" height="1.0" fill="#0f1111"/><rect x="0.4" y="586.9" width="2.0" height="1.0" fill="#0f1111"/><rect x="46.9" y="293.1" width="2.0" height="1.0" fill="#0f1111"/><rect x="50.4" y="419.9" width="1.0" height="2.0" fill="#0f1111"/><rect x="68.3" y="955.5" width="1.0" height="2.0" fill="#0f1111"/><rect x="62.7" y="902.7" width="3.0" height="1.5" fill="#0f1111"/><rect x="57.7" y="798.1" width="2.0" height="1.0" fill="#0f1111"/><rect x="49.5" y="407.3" width="1.0" height="1.0" fill="#0f1111"/><rect x="57.2" y="847.4" width="3.0" height="2.0" fill="#0f1111"/><rect x="56.1" y="525.4" width="3.0" height="1.0" fill="#0f1111"/><rect x="60.2" y="916.6" width="3.0" height="1.0" fill="#0f1111"/><rect x="46.7" y="848.7" width="1.0" height="1.0" fill="#0f1111"/><rect x="10.6" y="201.4" width="2.0" height="1.0" fill="#0f1111"/><rect x="36.1" y="482.6" width="1.0" height="2.0" fill="#0f1111"/><rect x="42.5" y="191.3" width="1.0" height="1.5" fill="#0f1111"/><rect x="36.6" y="390.7" width="1.0" height="2.0" fill="#0f1111"/><rect x="71.8" y="935.1" width="1.0" height="2.0" fill="#0f1111"/><rect x="59.7" y="604.2" width="2.0" height="1.5" fill="#0f1111"/><rect x="67.7" y="834.7" width="1.0" height="2.0" fill="#0f1111"/><rect x="18.5" y="791.7" width="2.0" height="1.5" fill="#0f1111"/><rect x="6.1" y="864.3" width="2.0" height="1.0" fill="#0f1111"/><rect x="51.4" y="678.2" width="1.0" height="2.0" fill="#0f1111"/><rect x="20.3" y="296.0" width="2.0" height="2.0" fill="#0f1111"/><rect x="1.0" y="638.2" width="1.0" height="1.5" fill="#0f1111"/><rect x="53.8" y="394.8" width="1.0" height="2.0" fill="#0f1111"/><rect x="56.7" y="574.5" width="2.0" height="1.5" fill="#0f1111"/><rect x="61.4" y="555.2" width="3.0" height="1.0" fill="#0f1111"/><rect x="6.9" y="429.7" width="2.0" height="1.0" fill="#0f1111"/><rect x="6.1" y="411.7" width="3.0" height="1.5" fill="#0f1111"/><rect x="30.9" y="985.1" width="1.0" height="1.0" fill="#0f1111"/><rect x="11.3" y="649.3" width="3.0" height="1.5" fill="#0f1111"/><rect x="10.6" y="951.5" width="3.0" height="1.5" fill="#0f1111"/><rect x="56.3" y="897.9" width="1.0" height="1.5" fill="#0f1111"/><rect x="38.9" y="906.7" width="1.0" height="1.0" fill="#0f1111"/><rect x="39.3" y="178.9" width="2.0" height="1.5" fill="#0f1111"/><rect x="11.3" y="421.8" width="2.0" height="1.5" fill="#0f1111"/><rect x="67.2" y="433.3" width="1.0" height="1.5" fill="#0f1111"/><rect x="67.1" y="787.1" width="1.0" height="1.0" fill="#0f1111"/><rect x="72.1" y="756.4" width="2.0" height="1.5" fill="#0f1111"/><rect x="31.4" y="479.0" width="3.0" height="1.0" fill="#0f1111"/><rect x="34.2" y="469.6" width="2.0" height="1.0" fill="#0f1111"/><rect x="4.1" y="404.4" width="2.0" height="2.0" fill="#0f1111"/><rect x="19.9" y="937.6" width="2.0" height="1.5" fill="#0f1111"/><rect x="15.2" y="591.9" width="2.0" height="1.5" fill="#0f1111"/><rect x="65.0" y="895.8" width="2.0" height="2.0" fill="#0f1111"/><rect x="57.6" y="623.1" width="1.0" height="2.0" fill="#0f1111"/><rect x="49.2" y="510.5" width="1.0" height="2.0" fill="#0f1111"/><rect x="38.8" y="883.8" width="3.0" height="1.0" fill="#0f1111"/><rect x="33.2" y="315.0" width="2.0" height="1.5" fill="#0f1111"/><rect x="59.1" y="384.2" width="2.0" height="1.5" fill="#0f1111"/><rect x="24.1" y="710.0" width="3.0" height="2.0" fill="#0f1111"/><rect x="13.4" y="497.0" width="1.0" height="1.0" fill="#0f1111"/><rect x="72.5" y="345.2" width="2.0" height="2.0" fill="#0f1111"/><rect x="72.5" y="355.1" width="2.0" height="1.5" fill="#0f1111"/><rect x="15.4" y="289.6" width="1.0" height="1.0" fill="#0f1111"/><rect x="7.3" y="454.4" width="1.0" height="1.5" fill="#0f1111"/><rect x="45.6" y="386.3" width="1.0" height="2.0" fill="#0f1111"/><rect x="30.6" y="884.7" width="3.0" height="1.0" fill="#0f1111"/><rect x="27.1" y="482.8" width="1.0" height="1.5" fill="#0f1111"/><rect x="77.4" y="401.9" width="1.0" height="2.0" fill="#0f1111"/><rect x="50.4" y="585.8" width="1.0" height="1.0" fill="#0f1111"/><rect x="19.9" y="396.6" width="2.0" height="2.0" fill="#0f1111"/><rect x="76.3" y="538.9" width="1.0" height="1.0" fill="#0f1111"/><rect x="56.8" y="202.2" width="2.0" height="2.0" fill="#0f1111"/><rect x="5.9" y="574.7" width="3.0" height="1.5" fill="#0f1111"/><rect x="19.9" y="967.4" width="1.0" height="1.0" fill="#0f1111"/><rect x="41.8" y="301.7" width="1.0" height="2.0" fill="#0f1111"/><rect x="67.7" y="746.6" width="2.0" height="1.0" fill="#0f1111"/><rect x="3.2" y="624.9" width="1.0" height="1.0" fill="#0f1111"/><rect x="3.0" y="639.5" width="2.0" height="1.0" fill="#0f1111"/><rect x="42.3" y="685.9" width="2.0" height="2.0" fill="#0f1111"/><rect x="8.0" y="797.8" width="2.0" height="2.0" fill="#0f1111"/><rect x="15.3" y="944.0" width="2.0" height="1.0" fill="#0f1111"/><rect x="0.1" y="819.5" width="3.0" height="1.5" fill="#0f1111"/><rect x="22.3" y="987.0" width="2.0" height="2.0" fill="#0f1111"/><rect x="19.4" y="859.3" width="3.0" height="1.0" fill="#0f1111"/><rect x="2.3" y="621.3" width="2.0" height="2.0" fill="#0f1111"/><rect x="4.4" y="704.8" width="1.0" height="1.5" fill="#0f1111"/><rect x="51.8" y="896.3" width="1.0" height="1.5" fill="#0f1111"/><rect x="33.9" y="361.5" width="2.0" height="1.0" fill="#0f1111"/><rect x="55.7" y="577.3" width="2.0" height="1.5" fill="#0f1111"/><rect x="15.8" y="731.6" width="2.0" height="2.0" fill="#0f1111"/><rect x="5.4" y="864.0" width="2.0" height="1.0" fill="#0f1111"/><rect x="65.6" y="429.7" width="1.0" height="1.5" fill="#0f1111"/><rect x="60.8" y="356.3" width="2.0" height="1.0" fill="#0f1111"/><rect x="39.7" y="950.9" width="1.0" height="1.0" fill="#0f1111"/><rect x="72.8" y="570.8" width="1.0" height="2.0" fill="#0f1111"/><rect x="31.5" y="295.2" width="1.0" height="1.0" fill="#0f1111"/><rect x="11.4" y="968.9" width="1.0" height="2.0" fill="#0f1111"/><rect x="31.5" y="225.0" width="2.0" height="2.0" fill="#0f1111"/><rect x="6.3" y="268.1" width="1.0" height="1.5" fill="#0f1111"/><rect x="52.2" y="331.2" width="3.0" height="2.0" fill="#0f1111"/><rect x="24.9" y="556.6" width="2.0" height="1.5" fill="#0f1111"/><rect x="35.4" y="977.8" width="1.0" height="1.0" fill="#0f1111"/><rect x="6.5" y="239.7" width="2.0" height="1.0" fill="#0f1111"/><rect x="60.7" y="632.8" width="2.0" height="1.5" fill="#0f1111"/><rect x="24.7" y="801.7" width="2.0" height="1.0" fill="#0f1111"/><rect x="37.9" y="216.1" width="2.0" height="2.0" fill="#0f1111"/><rect x="15.4" y="924.5" width="2.0" height="2.0" fill="#0f1111"/><rect x="2.4" y="906.2" width="2.0" height="1.0" fill="#0f1111"/><rect x="61.3" y="836.8" width="1.0" height="1.5" fill="#0f1111"/><rect x="5.0" y="204.4" width="1.0" height="1.5" fill="#0f1111"/><rect x="5.0" y="334.7" width="3.0" height="1.5" fill="#0f1111"/><rect x="26.8" y="471.5" width="3.0" height="1.0" fill="#0f1111"/><rect x="57.3" y="389.4" width="2.0" height="1.5" fill="#0f1111"/><rect x="57.7" y="418.1" width="3.0" height="2.0" fill="#0f1111"/><rect x="5.2" y="946.4" width="1.0" height="1.0" fill="#0f1111"/><rect x="76.5" y="562.8" width="2.0" height="1.5" fill="#0f1111"/><rect x="65.2" y="919.6" width="1.0" height="1.5" fill="#0f1111"/><rect x="64.2" y="324.9" width="2.0" height="2.0" fill="#0f1111"/><rect x="48.6" y="805.1" width="2.0" height="1.5" fill="#0f1111"/><rect x="62.7" y="551.1" width="3.0" height="1.0" fill="#0f1111"/><rect x="31.3" y="592.7" width="1.0" height="1.0" fill="#0f1111"/><rect x="52.0" y="507.9" width="2.0" height="2.0" fill="#0f1111"/><rect x="12.9" y="619.3" width="2.0" height="1.0" fill="#0f1111"/><rect x="21.2" y="980.1" width="1.0" height="1.0" fill="#0f1111"/><rect x="39.9" y="254.5" width="2.0" height="1.0" fill="#0f1111"/><rect x="33.3" y="366.6" width="3.0" height="2.0" fill="#0f1111"/><rect x="43.1" y="367.2" width="1.0" height="1.5" fill="#0f1111"/><rect x="45.4" y="415.1" width="2.0" height="1.5" fill="#0f1111"/><rect x="15.9" y="776.8" width="1.0" height="1.0" fill="#0f1111"/><rect x="12.3" y="375.7" width="3.0" height="1.0" fill="#0f1111"/><rect x="31.7" y="441.6" width="1.0" height="2.0" fill="#0f1111"/><rect x="52.0" y="604.4" width="1.0" height="2.0" fill="#0f1111"/><rect x="3.0" y="553.6" width="1.0" height="1.5" fill="#0f1111"/><rect x="18.5" y="894.6" width="2.0" height="1.5" fill="#0f1111"/><rect x="23.5" y="208.9" width="1.0" height="1.0" fill="#0f1111"/><rect x="77.8" y="330.3" width="3.0" height="1.0" fill="#0f1111"/><rect x="29.8" y="933.2" width="1.0" height="1.5" fill="#0f1111"/><rect x="62.0" y="666.9" width="1.0" height="1.0" fill="#0f1111"/><rect x="56.8" y="694.9" width="2.0" height="1.0" fill="#0f1111"/><rect x="27.2" y="206.5" width="1.0" height="1.0" fill="#0f1111"/><rect x="3.1" y="989.9" width="1.0" height="1.0" fill="#0f1111"/><rect x="32.7" y="842.5" width="2.0" height="1.0" fill="#0f1111"/><rect x="6.2" y="681.5" width="1.0" height="1.5" fill="#0f1111"/><rect x="5.1" y="622.1" width="1.0" height="1.5" fill="#0f1111"/><rect x="12.4" y="716.5" width="3.0" height="1.0" fill="#0f1111"/><rect x="31.8" y="707.6" width="2.0" height="1.5" fill="#0f1111"/><rect x="53.4" y="980.4" width="2.0" height="1.0" fill="#0f1111"/><rect x="45.3" y="430.3" width="2.0" height="1.5" fill="#0f1111"/><rect x="69.1" y="515.0" width="2.0" height="2.0" fill="#0f1111"/><rect x="58.2" y="336.5" width="1.0" height="1.0" fill="#0f1111"/><rect x="12.5" y="529.4" width="1.0" height="1.0" fill="#0f1111"/><rect x="70.6" y="506.7" width="2.0" height="1.0" fill="#0f1111"/><rect x="4.1" y="281.8" width="1.0" height="2.0" fill="#0f1111"/><rect x="31.7" y="832.5" width="3.0" height="2.0" fill="#0f1111"/><rect x="59.0" y="930.8" width="1.0" height="1.0" fill="#0f1111"/><rect x="12.9" y="459.2" width="1.0" height="1.0" fill="#0f1111"/><rect x="39.2" y="264.6" width="1.0" height="1.5" fill="#0f1111"/><rect x="75.4" y="279.1" width="2.0" height="1.5" fill="#0f1111"/><rect x="74.1" y="219.4" width="2.0" height="1.0" fill="#0f1111"/><rect x="49.6" y="912.0" width="1.0" height="2.0" fill="#0f1111"/><rect x="17.8" y="815.7" width="2.0" height="2.0" fill="#0f1111"/><rect x="66.3" y="864.9" width="1.0" height="2.0" fill="#0f1111"/><rect x="32.0" y="353.6" width="3.0" height="1.0" fill="#0f1111"/><rect x="9.8" y="488.2" width="1.0" height="2.0" fill="#0f1111"/><rect x="15.4" y="839.9" width="3.0" height="2.0" fill="#0f1111"/><rect x="67.1" y="207.0" width="1.0" height="1.5" fill="#0f1111"/><rect x="44.0" y="664.0" width="2.0" height="2.0" fill="#0f1111"/><rect x="46.6" y="517.9" width="2.0" height="1.5" fill="#0f1111"/><rect x="35.7" y="712.3" width="2.0" height="1.0" fill="#0f1111"/><rect x="49.5" y="195.0" width="2.0" height="1.5" fill="#0f1111"/><rect x="61.1" y="367.5" width="2.0" height="1.0" fill="#0f1111"/><rect x="32.0" y="835.8" width="1.0" height="1.0" fill="#0f1111"/><rect x="29.2" y="467.9" width="2.0" height="2.0" fill="#0f1111"/><rect x="3.3" y="591.3" width="1.0" height="1.0" fill="#0f1111"/><rect x="25.1" y="926.6" width="3.0" height="1.0" fill="#0f1111"/><rect x="40.3" y="220.2" width="2.0" height="2.0" fill="#0f1111"/><rect x="10.9" y="950.0" width="1.0" height="2.0" fill="#0f1111"/><rect x="65.2" y="771.9" width="1.0" height="1.0" fill="#0f1111"/><rect x="39.3" y="975.1" width="1.0" height="2.0" fill="#0f1111"/><rect x="74.4" y="817.7" width="1.0" height="1.5" fill="#0f1111"/><rect x="20.2" y="672.9" width="2.0" height="2.0" fill="#0f1111"/><rect x="65.3" y="399.8" width="1.0" height="1.5" fill="#0f1111"/><rect x="73.6" y="584.8" width="1.0" height="2.0" fill="#0f1111"/><rect x="40.5" y="390.0" width="2.0" height="1.5" fill="#0f1111"/><rect x="14.6" y="206.0" width="1.0" height="2.0" fill="#0f1111"/><rect x="54.4" y="938.2" width="2.0" height="1.0" fill="#0f1111"/><rect x="21.1" y="820.8" width="3.0" height="1.0" fill="#0f1111"/><rect x="28.8" y="694.0" width="2.0" height="2.0" fill="#0f1111"/><rect x="55.1" y="600.5" width="1.0" height="1.5" fill="#0f1111"/><rect x="50.4" y="984.3" width="2.0" height="2.0" fill="#0f1111"/><rect x="21.2" y="825.3" width="2.0" height="2.0" fill="#0f1111"/><rect x="26.5" y="295.0" width="1.0" height="1.5" fill="#0f1111"/><rect x="49.2" y="363.3" width="1.0" height="1.5" fill="#0f1111"/><rect x="20.3" y="843.3" width="3.0" height="2.0" fill="#0f1111"/><rect x="58.6" y="905.1" width="1.0" height="1.0" fill="#0f1111"/><rect x="49.3" y="297.6" width="2.0" height="1.5" fill="#0f1111"/><rect x="71.6" y="593.3" width="1.0" height="1.5" fill="#0f1111"/><rect x="52.2" y="361.0" width="1.0" height="1.0" fill="#0f1111"/><rect x="28.4" y="178.1" width="1.0" height="2.0" fill="#0f1111"/><rect x="17.9" y="466.7" width="3.0" height="1.5" fill="#0f1111"/><rect x="16.3" y="655.5" width="3.0" height="1.5" fill="#0f1111"/><rect x="1.1" y="305.1" width="1.0" height="2.0" fill="#0f1111"/><rect x="7.7" y="297.5" width="1.0" height="2.0" fill="#0f1111"/><rect x="32.2" y="812.7" width="2.0" height="1.0" fill="#0f1111"/><rect x="65.7" y="221.7" width="2.0" height="2.0" fill="#0f1111"/><rect x="35.5" y="701.5" width="3.0" height="2.0" fill="#0f1111"/><rect x="13.2" y="577.2" width="1.0" height="1.0" fill="#0f1111"/><rect x="2.0" y="226.1" width="1.0" height="1.0" fill="#0f1111"/><rect x="72.9" y="305.6" width="1.0" height="1.0" fill="#0f1111"/><rect x="52.5" y="674.7" width="1.0" height="1.0" fill="#0f1111"/><rect x="41.5" y="512.3" width="3.0" height="2.0" fill="#0f1111"/><rect x="65.1" y="698.2" width="1.0" height="2.0" fill="#0f1111"/><rect x="24.0" y="427.8" width="1.0" height="2.0" fill="#0f1111"/><rect x="57.2" y="813.3" width="1.0" height="1.5" fill="#0f1111"/><rect x="59.6" y="863.4" width="2.0" height="1.0" fill="#0f1111"/><rect x="36.2" y="779.8" width="1.0" height="1.0" fill="#0f1111"/><rect x="51.5" y="388.8" width="1.0" height="1.5" fill="#0f1111"/><rect x="74.0" y="901.5" width="2.0" height="2.0" fill="#0f1111"/><rect x="50.9" y="218.8" width="2.0" height="2.0" fill="#0f1111"/><rect x="41.9" y="817.8" width="2.0" height="1.5" fill="#0f1111"/><rect x="77.2" y="698.6" width="1.0" height="1.0" fill="#0f1111"/><rect x="1.2" y="892.4" width="2.0" height="1.0" fill="#0f1111"/><rect x="16.2" y="861.2" width="1.0" height="2.0" fill="#0f1111"/><rect x="15.4" y="920.8" width="2.0" height="1.5" fill="#0f1111"/><rect x="30.4" y="665.4" width="3.0" height="1.5" fill="#0f1111"/><rect x="42.4" y="560.3" width="1.0" height="1.0" fill="#0f1111"/><rect x="58.0" y="531.9" width="3.0" height="1.5" fill="#0f1111"/><rect x="31.3" y="818.4" width="3.0" height="1.0" fill="#0f1111"/><rect x="13.7" y="636.1" width="1.0" height="1.0" fill="#0f1111"/><rect x="49.8" y="267.1" width="1.0" height="1.5" fill="#0f1111"/><rect x="56.1" y="971.6" width="1.0" height="1.0" fill="#0f1111"/><rect x="51.5" y="288.7" width="1.0" height="2.0" fill="#0f1111"/><rect x="3.7" y="231.2" width="3.0" height="1.5" fill="#0f1111"/><rect x="76.4" y="338.2" width="3.0" height="2.0" fill="#0f1111"/><rect x="69.4" y="229.7" width="2.0" height="1.0" fill="#0f1111"/><rect x="16.3" y="376.7" width="1.0" height="1.0" fill="#0f1111"/><rect x="72.9" y="948.7" width="1.0" height="2.0" fill="#0f1111"/><rect x="38.2" y="690.7" width="1.0" height="1.0" fill="#0f1111"/><rect x="51.7" y="820.7" width="2.0" height="1.5" fill="#0f1111"/><rect x="20.9" y="449.9" width="2.0" height="1.5" fill="#0f1111"/><rect x="3.9" y="933.1" width="2.0" height="1.5" fill="#0f1111"/><rect x="48.2" y="802.2" width="2.0" height="1.5" fill="#0f1111"/><rect x="2.5" y="679.3" width="2.0" height="1.0" fill="#0f1111"/><rect x="61.8" y="531.3" width="2.0" height="1.5" fill="#0f1111"/><rect x="43.0" y="749.6" width="1.0" height="2.0" fill="#0f1111"/><rect x="7.3" y="877.9" width="2.0" height="1.0" fill="#0f1111"/><rect x="41.9" y="531.0" width="2.0" height="1.0" fill="#0f1111"/><rect x="39.3" y="179.6" width="2.0" height="2.0" fill="#0f1111"/><rect x="14.8" y="824.6" width="2.0" height="2.0" fill="#0f1111"/><rect x="66.5" y="458.6" width="2.0" height="2.0" fill="#0f1111"/><rect x="22.7" y="944.3" width="1.0" height="2.0" fill="#0f1111"/><rect x="13.3" y="364.5" width="1.0" height="1.5" fill="#0f1111"/><rect x="55.8" y="817.4" width="1.0" height="2.0" fill="#0f1111"/><rect x="7.6" y="441.9" width="2.0" height="2.0" fill="#0f1111"/><rect x="71.1" y="246.1" width="1.0" height="1.5" fill="#0f1111"/><rect x="21.1" y="343.8" width="3.0" height="2.0" fill="#0f1111"/><rect x="78.6" y="315.3" width="1.0" height="1.5" fill="#0f1111"/><rect x="47.5" y="279.3" width="3.0" height="2.0" fill="#0f1111"/><rect x="46.5" y="203.6" width="3.0" height="1.0" fill="#0f1111"/><rect x="36.0" y="882.6" width="3.0" height="2.0" fill="#0f1111"/><rect x="37.1" y="439.2" width="2.0" height="2.0" fill="#0f1111"/><rect x="26.7" y="364.1" width="1.0" height="2.0" fill="#0f1111"/><rect x="24.1" y="331.9" width="3.0" height="1.0" fill="#0f1111"/><rect x="78.0" y="764.8" width="2.0" height="2.0" fill="#0f1111"/><rect x="12.9" y="601.1" width="2.0" height="1.0" fill="#0f1111"/><rect x="76.4" y="386.6" width="1.0" height="1.0" fill="#0f1111"/><rect x="8.1" y="959.4" width="2.0" height="1.0" fill="#0f1111"/><rect x="63.6" y="976.8" width="2.0" height="1.5" fill="#0f1111"/><rect x="8.7" y="398.9" width="1.0" height="1.5" fill="#0f1111"/><rect x="31.1" y="344.0" width="1.0" height="1.0" fill="#0f1111"/><rect x="63.3" y="500.8" width="1.0" height="2.0" fill="#0f1111"/><rect x="23.7" y="974.4" width="1.0" height="1.0" fill="#0f1111"/><rect x="59.1" y="385.4" width="1.0" height="2.0" fill="#0f1111"/><rect x="68.2" y="373.2" width="3.0" height="2.0" fill="#0f1111"/><rect x="33.7" y="785.8" width="1.0" height="2.0" fill="#0f1111"/><rect x="70.4" y="763.9" width="3.0" height="1.0" fill="#0f1111"/><rect x="51.3" y="729.2" width="2.0" height="1.5" fill="#0f1111"/><rect x="50.3" y="430.8" width="1.0" height="1.5" fill="#0f1111"/><rect x="32.0" y="373.3" width="1.0" height="1.5" fill="#0f1111"/><rect x="38.6" y="867.4" width="1.0" height="2.0" fill="#0f1111"/><rect x="41.5" y="874.8" width="1.0" height="2.0" fill="#0f1111"/><rect x="0.9" y="443.0" width="2.0" height="1.0" fill="#0f1111"/><rect x="43.5" y="207.1" width="1.0" height="2.0" fill="#0f1111"/><rect x="75.2" y="812.4" width="3.0" height="1.5" fill="#0f1111"/><rect x="46.0" y="258.3" width="3.0" height="1.0" fill="#0f1111"/><rect x="41.0" y="759.9" width="2.0" height="2.0" fill="#0f1111"/><rect x="59.4" y="455.1" width="2.0" height="1.0" fill="#0f1111"/><rect x="14.7" y="982.1" width="3.0" height="1.0" fill="#0f1111"/><rect x="49.1" y="769.5" width="1.0" height="1.5" fill="#0f1111"/><rect x="32.0" y="399.3" width="1.0" height="1.0" fill="#0f1111"/><rect x="33.6" y="516.7" width="2.0" height="2.0" fill="#0f1111"/><rect x="18.0" y="391.8" width="2.0" height="2.0" fill="#0f1111"/><rect x="79.5" y="966.8" width="2.0" height="1.5" fill="#0f1111"/><rect x="10.3" y="348.6" width="1.0" height="2.0" fill="#0f1111"/><rect x="51.4" y="333.2" width="1.0" height="1.0" fill="#0f1111"/><rect x="51.1" y="463.4" width="2.0" height="1.5" fill="#0f1111"/><rect x="60.8" y="986.9" width="1.0" height="1.5" fill="#0f1111"/><rect x="68.1" y="464.8" width="2.0" height="2.0" fill="#0f1111"/><rect x="20.3" y="482.2" width="2.0" height="2.0" fill="#0f1111"/><rect x="0.2" y="327.3" width="2.0" height="1.5" fill="#0f1111"/><rect x="24.1" y="375.4" width="2.0" height="1.5" fill="#0f1111"/><rect x="51.0" y="524.8" width="2.0" height="1.0" fill="#0f1111"/><rect x="68.4" y="932.0" width="1.0" height="1.0" fill="#0f1111"/><rect x="72.5" y="849.9" width="1.0" height="2.0" fill="#0f1111"/><rect x="50.7" y="852.7" width="1.0" height="2.0" fill="#0f1111"/><rect x="76.1" y="185.3" width="2.0" height="1.5" fill="#0f1111"/><rect x="46.3" y="671.1" width="1.0" height="1.0" fill="#0f1111"/><rect x="27.7" y="807.9" width="1.0" height="1.0" fill="#0f1111"/><rect x="63.3" y="911.9" width="1.0" height="2.0" fill="#0f1111"/><rect x="48.7" y="901.4" width="1.0" height="2.0" fill="#0f1111"/><rect x="43.9" y="909.9" width="2.0" height="1.0" fill="#0f1111"/><rect x="17.0" y="578.5" width="1.0" height="2.0" fill="#0f1111"/><rect x="53.7" y="859.2" width="1.0" height="2.0" fill="#0f1111"/><rect x="33.5" y="272.4" width="1.0" height="1.5" fill="#0f1111"/><rect x="4.7" y="577.4" width="2.0" height="1.0" fill="#0f1111"/><rect x="19.7" y="746.1" width="1.0" height="2.0" fill="#0f1111"/><rect x="58.8" y="664.1" width="1.0" height="1.5" fill="#0f1111"/><rect x="45.0" y="556.9" width="2.0" height="1.5" fill="#0f1111"/><rect x="33.5" y="481.2" width="1.0" height="1.0" fill="#0f1111"/><rect x="50.9" y="694.6" width="1.0" height="1.0" fill="#0f1111"/><rect x="54.6" y="672.3" width="2.0" height="1.0" fill="#0f1111"/><rect x="38.8" y="591.6" width="1.0" height="1.0" fill="#0f1111"/><rect x="33.2" y="349.7" width="1.0" height="1.5" fill="#0f1111"/><rect x="52.7" y="252.9" width="2.0" height="1.5" fill="#0f1111"/><rect x="44.3" y="809.7" width="1.0" height="1.5" fill="#0f1111"/><rect x="33.8" y="530.2" width="3.0" height="1.0" fill="#0f1111"/><rect x="23.4" y="849.0" width="2.0" height="1.5" fill="#0f1111"/><rect x="78.7" y="447.6" width="3.0" height="1.5" fill="#0f1111"/><rect x="52.4" y="969.6" width="1.0" height="1.5" fill="#0f1111"/><rect x="57.1" y="332.5" width="1.0" height="2.0" fill="#0f1111"/><rect x="7.0" y="967.8" width="1.0" height="1.5" fill="#0f1111"/><rect x="70.8" y="764.3" width="3.0" height="2.0" fill="#0f1111"/><rect x="24.0" y="216.5" width="1.0" height="1.0" fill="#0f1111"/><rect x="73.7" y="330.6" width="3.0" height="2.0" fill="#0f1111"/><rect x="40.1" y="225.0" width="3.0" height="2.0" fill="#0f1111"/><rect x="11.8" y="482.1" width="3.0" height="2.0" fill="#0f1111"/><rect x="3.2" y="243.6" width="2.0" height="2.0" fill="#0f1111"/><rect x="8.1" y="796.8" width="1.0" height="1.0" fill="#0f1111"/><rect x="8.0" y="519.2" width="1.0" height="1.5" fill="#0f1111"/><rect x="11.1" y="885.7" width="2.0" height="2.0" fill="#0f1111"/><rect x="69.0" y="754.0" width="1.0" height="1.5" fill="#0f1111"/><rect x="1.6" y="203.9" width="3.0" height="2.0" fill="#0f1111"/><rect x="73.1" y="646.7" width="2.0" height="2.0" fill="#0f1111"/><rect x="66.0" y="601.0" width="2.0" height="2.0" fill="#0f1111"/><rect x="32.4" y="742.3" width="1.0" height="1.0" fill="#0f1111"/><rect x="47.5" y="729.5" width="1.0" height="1.5" fill="#0f1111"/><rect x="43.9" y="802.7" width="1.0" height="2.0" fill="#0f1111"/><rect x="71.7" y="560.4" width="1.0" height="1.5" fill="#0f1111"/><rect x="54.7" y="179.9" width="1.0" height="1.0" fill="#0f1111"/><rect x="9.7" y="353.7" width="2.0" height="1.0" fill="#0f1111"/><rect x="45.5" y="400.2" width="2.0" height="2.0" fill="#0f1111"/><rect x="73.8" y="781.8" width="2.0" height="2.0" fill="#0f1111"/><rect x="68.4" y="756.8" width="1.0" height="1.5" fill="#0f1111"/><rect x="56.7" y="687.7" width="2.0" height="2.0" fill="#0f1111"/><rect x="20.3" y="934.9" width="1.0" height="2.0" fill="#0f1111"/><rect x="4.8" y="202.0" width="3.0" height="1.0" fill="#0f1111"/><rect x="25.0" y="492.6" width="3.0" height="1.0" fill="#0f1111"/><rect x="66.8" y="955.6" width="3.0" height="1.0" fill="#0f1111"/><rect x="75.9" y="433.5" width="2.0" height="1.5" fill="#0f1111"/><rect x="11.6" y="727.0" width="1.0" height="1.5" fill="#0f1111"/><rect x="13.1" y="952.5" width="2.0" height="1.5" fill="#0f1111"/><rect x="62.9" y="490.0" width="2.0" height="2.0" fill="#0f1111"/><rect x="22.4" y="447.8" width="3.0" height="2.0" fill="#0f1111"/><rect x="66.2" y="748.5" width="2.0" height="2.0" fill="#0f1111"/><rect x="1.2" y="766.7" width="1.0" height="2.0" fill="#0f1111"/><rect x="46.8" y="853.8" width="1.0" height="1.5" fill="#0f1111"/><rect x="30.1" y="491.3" width="1.0" height="1.5" fill="#0f1111"/><rect x="0.1" y="406.6" width="2.0" height="1.5" fill="#0f1111"/><rect x="46.9" y="519.9" width="1.0" height="1.5" fill="#0f1111"/><rect x="64.9" y="854.3" width="3.0" height="1.0" fill="#0f1111"/><rect x="68.1" y="398.9" width="3.0" height="2.0" fill="#0f1111"/><rect x="40.0" y="808.5" width="3.0" height="1.0" fill="#0f1111"/><rect x="38.8" y="615.5" width="2.0" height="1.0" fill="#0f1111"/><rect x="57.8" y="817.2" width="1.0" height="1.5" fill="#0f1111"/><rect x="54.2" y="670.0" width="2.0" height="2.0" fill="#0f1111"/><rect x="20.4" y="344.2" width="1.0" height="1.5" fill="#0f1111"/><rect x="7.0" y="550.2" width="2.0" height="1.0" fill="#0f1111"/><rect x="46.4" y="365.6" width="2.0" height="2.0" fill="#0f1111"/><rect x="40.5" y="437.3" width="1.0" height="1.0" fill="#0f1111"/><rect x="7.4" y="349.1" width="2.0" height="1.5" fill="#0f1111"/><rect x="28.7" y="646.4" width="3.0" height="1.0" fill="#0f1111"/><rect x="73.8" y="376.5" width="2.0" height="1.5" fill="#0f1111"/><rect x="29.7" y="881.2" width="2.0" height="1.0" fill="#0f1111"/><rect x="47.8" y="303.1" width="2.0" height="1.5" fill="#0f1111"/><rect x="1.6" y="598.8" width="1.0" height="1.0" fill="#0f1111"/><rect x="69.3" y="982.2" width="2.0" height="2.0" fill="#0f1111"/><rect x="20.9" y="637.7" width="2.0" height="1.5" fill="#0f1111"/><rect x="35.7" y="255.0" width="3.0" height="2.0" fill="#0f1111"/><rect x="20.3" y="960.3" width="1.0" height="1.5" fill="#0f1111"/><rect x="14.5" y="339.6" width="1.0" height="1.0" fill="#0f1111"/><rect x="44.6" y="217.5" width="2.0" height="1.5" fill="#0f1111"/><rect x="72.8" y="947.0" width="1.0" height="2.0" fill="#0f1111"/><rect x="73.8" y="696.8" width="1.0" height="1.5" fill="#0f1111"/><rect x="18.7" y="435.4" width="1.0" height="2.0" fill="#0f1111"/><rect x="14.6" y="588.3" width="1.0" height="1.5" fill="#0f1111"/><rect x="79.3" y="962.1" width="1.0" height="1.0" fill="#0f1111"/><rect x="20.5" y="207.4" width="2.0" height="1.0" fill="#0f1111"/><rect x="72.4" y="910.8" width="1.0" height="1.5" fill="#0f1111"/><rect x="56.8" y="816.1" width="2.0" height="1.0" fill="#0f1111"/><rect x="25.4" y="258.3" width="1.0" height="1.0" fill="#0f1111"/><rect x="23.9" y="727.0" width="3.0" height="1.5" fill="#0f1111"/><rect x="8.4" y="792.9" width="2.0" height="1.5" fill="#0f1111"/><rect x="9.9" y="385.2" width="2.0" height="1.5" fill="#0f1111"/><rect x="19.1" y="313.2" width="1.0" height="2.0" fill="#0f1111"/><rect x="37.4" y="902.2" width="1.0" height="1.0" fill="#0f1111"/><rect x="66.6" y="303.8" width="1.0" height="2.0" fill="#0f1111"/><rect x="71.1" y="881.5" width="1.0" height="1.5" fill="#0f1111"/><rect x="74.1" y="955.8" width="2.0" height="1.0" fill="#0f1111"/><rect x="36.2" y="687.5" width="2.0" height="1.5" fill="#0f1111"/><rect x="38.2" y="846.0" width="2.0" height="1.0" fill="#0f1111"/><rect x="58.9" y="446.2" width="1.0" height="2.0" fill="#0f1111"/><rect x="71.1" y="543.4" width="2.0" height="1.0" fill="#0f1111"/><rect x="32.9" y="392.8" width="1.0" height="1.0" fill="#0f1111"/><rect x="67.2" y="396.7" width="2.0" height="1.0" fill="#0f1111"/><rect x="8.7" y="388.2" width="2.0" height="1.5" fill="#0f1111"/><rect x="78.3" y="268.9" width="1.0" height="2.0" fill="#0f1111"/><rect x="53.5" y="904.6" width="1.0" height="2.0" fill="#0f1111"/><rect x="22.9" y="564.6" width="2.0" height="1.0" fill="#0f1111"/><rect x="34.6" y="966.1" width="2.0" height="1.0" fill="#0f1111"/><rect x="7.8" y="929.0" width="2.0" height="1.5" fill="#0f1111"/><rect x="4.6" y="905.5" width="2.0" height="1.0" fill="#0f1111"/><rect x="1.3" y="972.6" width="3.0" height="1.5" fill="#0f1111"/><rect x="35.4" y="591.8" width="3.0" height="1.5" fill="#0f1111"/><rect x="34.8" y="327.3" width="2.0" height="1.0" fill="#0f1111"/><rect x="14.5" y="401.4" width="1.0" height="2.0" fill="#0f1111"/><rect x="56.9" y="803.1" width="1.0" height="2.0" fill="#0f1111"/><rect x="7.0" y="240.5" width="3.0" height="2.0" fill="#0f1111"/><rect x="21.9" y="579.3" width="1.0" height="1.0" fill="#0f1111"/><rect x="56.6" y="674.5" width="1.0" height="2.0" fill="#0f1111"/><rect x="0.8" y="426.7" width="3.0" height="1.5" fill="#0f1111"/><rect x="73.3" y="860.6" width="3.0" height="1.5" fill="#0f1111"/><rect x="67.4" y="448.9" width="2.0" height="1.0" fill="#0f1111"/><rect x="72.8" y="188.6" width="2.0" height="1.0" fill="#0f1111"/><rect x="21.3" y="885.8" width="1.0" height="2.0" fill="#0f1111"/><rect x="29.4" y="852.9" width="1.0" height="2.0" fill="#0f1111"/><rect x="47.6" y="478.1" width="1.0" height="1.5" fill="#0f1111"/><rect x="35.7" y="599.1" width="3.0" height="1.0" fill="#0f1111"/><rect x="57.2" y="274.3" width="2.0" height="2.0" fill="#0f1111"/><rect x="46.1" y="882.6" width="1.0" height="1.5" fill="#0f1111"/><rect x="76.3" y="886.5" width="2.0" height="1.5" fill="#0f1111"/><rect x="42.4" y="593.8" width="3.0" height="1.0" fill="#0f1111"/><rect x="77.4" y="192.8" width="1.0" height="2.0" fill="#0f1111"/><rect x="8.2" y="324.5" width="2.0" height="2.0" fill="#0f1111"/><rect x="2.4" y="841.2" width="1.0" height="2.0" fill="#0f1111"/><rect x="20.9" y="777.3" width="3.0" height="2.0" fill="#0f1111"/><rect x="41.8" y="645.3" width="2.0" height="1.0" fill="#0f1111"/><rect x="7.5" y="461.5" width="1.0" height="1.0" fill="#0f1111"/><rect x="37.2" y="398.2" width="3.0" height="2.0" fill="#0f1111"/><rect x="8.8" y="795.9" width="1.0" height="1.5" fill="#0f1111"/><rect x="43.3" y="895.9" width="1.0" height="1.0" fill="#0f1111"/><rect x="45.8" y="295.8" width="2.0" height="1.0" fill="#0f1111"/><rect x="1.5" y="947.8" width="2.0" height="2.0" fill="#0f1111"/><rect x="67.2" y="518.3" width="3.0" height="1.0" fill="#0f1111"/><rect x="75.3" y="498.0" width="2.0" height="1.5" fill="#0f1111"/><rect x="67.1" y="502.2" width="2.0" height="2.0" fill="#0f1111"/><rect x="73.0" y="830.8" width="2.0" height="2.0" fill="#0f1111"/><rect x="41.4" y="219.6" width="2.0" height="1.0" fill="#0f1111"/><rect x="53.0" y="884.6" width="1.0" height="1.5" fill="#0f1111"/><rect x="15.0" y="264.7" width="2.0" height="1.5" fill="#0f1111"/><rect x="53.5" y="339.4" width="1.0" height="1.0" fill="#0f1111"/><rect x="31.8" y="518.5" width="2.0" height="2.0" fill="#0f1111"/><rect x="78.4" y="214.1" width="1.0" height="1.0" fill="#0f1111"/><rect x="49.7" y="880.6" width="3.0" height="1.5" fill="#0f1111"/><rect x="64.5" y="687.4" width="1.0" height="2.0" fill="#0f1111"/><rect x="9.7" y="257.8" width="1.0" height="1.5" fill="#0f1111"/><rect x="3.2" y="368.6" width="1.0" height="1.5" fill="#0f1111"/><rect x="13.4" y="458.9" width="1.0" height="2.0" fill="#0f1111"/><rect x="73.7" y="956.7" width="2.0" height="1.0" fill="#0f1111"/><rect x="42.7" y="555.7" width="1.0" height="1.5" fill="#0f1111"/><rect x="10.5" y="276.9" width="2.0" height="1.5" fill="#0f1111"/><rect x="21.9" y="646.0" width="1.0" height="2.0" fill="#0f1111"/><rect x="67.2" y="620.7" width="3.0" height="2.0" fill="#0f1111"/><rect x="52.0" y="640.1" width="1.0" height="2.0" fill="#0f1111"/><rect x="36.9" y="754.2" width="3.0" height="1.5" fill="#0f1111"/><rect x="37.5" y="674.8" width="2.0" height="1.0" fill="#0f1111"/><rect x="17.7" y="373.2" width="3.0" height="2.0" fill="#0f1111"/><rect x="46.9" y="487.9" width="1.0" height="1.5" fill="#0f1111"/><rect x="76.2" y="308.1" width="2.0" height="2.0" fill="#0f1111"/><rect x="21.6" y="440.9" width="1.0" height="1.5" fill="#0f1111"/><rect x="1.7" y="222.3" width="3.0" height="1.0" fill="#0f1111"/><rect x="27.8" y="669.2" width="1.0" height="2.0" fill="#0f1111"/><rect x="35.2" y="491.7" width="1.0" height="2.0" fill="#0f1111"/><rect x="76.7" y="359.3" width="1.0" height="1.5" fill="#0f1111"/><rect x="28.2" y="450.3" width="1.0" height="2.0" fill="#0f1111"/><rect x="22.1" y="673.2" width="3.0" height="1.0" fill="#0f1111"/><rect x="59.5" y="777.4" width="2.0" height="1.5" fill="#0f1111"/><rect x="56.7" y="814.9" width="1.0" height="1.5" fill="#0f1111"/><rect x="0.3" y="884.9" width="3.0" height="2.0" fill="#0f1111"/><rect x="31.8" y="271.6" width="3.0" height="1.0" fill="#0f1111"/><rect x="62.7" y="516.2" width="3.0" height="2.0" fill="#0f1111"/><rect x="68.1" y="266.4" width="2.0" height="1.5" fill="#0f1111"/><rect x="23.4" y="764.6" width="2.0" height="2.0" fill="#0f1111"/><rect x="30.8" y="628.1" width="2.0" height="1.0" fill="#0f1111"/><rect x="68.0" y="816.7" width="2.0" height="1.5" fill="#0f1111"/><rect x="14.7" y="537.4" width="2.0" height="1.0" fill="#0f1111"/><rect x="30.2" y="530.6" width="1.0" height="1.0" fill="#0f1111"/><rect x="26.4" y="844.8" width="3.0" height="1.0" fill="#0f1111"/><rect x="16.3" y="956.4" width="2.0" height="1.0" fill="#0f1111"/><rect x="20.5" y="196.8" width="2.0" height="1.5" fill="#0f1111"/><rect x="61.9" y="925.1" width="3.0" height="2.0" fill="#0f1111"/><rect x="41.4" y="988.6" width="3.0" height="2.0" fill="#0f1111"/><rect x="31.2" y="733.8" width="2.0" height="1.0" fill="#0f1111"/><rect x="28.1" y="660.1" width="1.0" height="2.0" fill="#0f1111"/><rect x="18.3" y="231.6" width="2.0" height="1.5" fill="#0f1111"/><rect x="51.9" y="583.7" width="3.0" height="1.0" fill="#0f1111"/><rect x="77.2" y="892.2" width="2.0" height="1.5" fill="#0f1111"/><rect x="50.0" y="534.3" width="3.0" height="1.5" fill="#0f1111"/><rect x="59.7" y="738.9" width="1.0" height="1.0" fill="#0f1111"/><rect x="29.3" y="471.3" width="1.0" height="1.5" fill="#0f1111"/><rect x="8.8" y="593.3" width="2.0" height="2.0" fill="#0f1111"/><rect x="74.8" y="455.5" width="3.0" height="1.5" fill="#0f1111"/><rect x="41.9" y="689.7" width="3.0" height="1.0" fill="#0f1111"/><rect x="15.0" y="587.0" width="1.0" height="1.0" fill="#0f1111"/><rect x="48.3" y="688.9" width="2.0" height="2.0" fill="#0f1111"/><rect x="50.9" y="984.9" width="1.0" height="2.0" fill="#0f1111"/><rect x="63.0" y="510.9" width="2.0" height="2.0" fill="#0f1111"/><rect x="0.3" y="738.2" width="2.0" height="1.5" fill="#0f1111"/><rect x="46.9" y="861.5" width="1.0" height="1.0" fill="#0f1111"/><rect x="61.5" y="318.6" width="3.0" height="1.5" fill="#0f1111"/><rect x="71.6" y="885.1" width="3.0" height="1.0" fill="#0f1111"/><rect x="32.9" y="643.6" width="1.0" height="1.0" fill="#0f1111"/><rect x="60.8" y="303.6" width="1.0" height="1.0" fill="#0f1111"/><rect x="13.6" y="257.5" width="3.0" height="1.5" fill="#0f1111"/><rect x="49.0" y="846.0" width="1.0" height="2.0" fill="#0f1111"/><rect x="61.6" y="186.2" width="2.0" height="1.0" fill="#0f1111"/><rect x="28.3" y="758.4" width="1.0" height="1.0" fill="#0f1111"/><rect x="8.0" y="393.0" width="3.0" height="1.0" fill="#0f1111"/><rect x="36.0" y="460.0" width="2.0" height="1.0" fill="#0f1111"/><rect x="71.2" y="220.5" width="3.0" height="1.0" fill="#0f1111"/><rect x="49.6" y="533.9" width="1.0" height="1.0" fill="#0f1111"/><rect x="74.5" y="211.8" width="1.0" height="1.5" fill="#0f1111"/><rect x="69.4" y="181.0" width="2.0" height="1.5" fill="#0f1111"/><rect x="20.2" y="516.6" width="2.0" height="1.0" fill="#0f1111"/><rect x="31.2" y="373.7" width="3.0" height="1.0" fill="#0f1111"/><rect x="31.9" y="512.6" width="2.0" height="1.0" fill="#0f1111"/><rect x="19.5" y="821.3" width="1.0" height="1.0" fill="#0f1111"/><rect x="14.9" y="467.7" width="2.0" height="1.5" fill="#0f1111"/><rect x="9.2" y="633.1" width="3.0" height="1.5" fill="#0f1111"/><rect x="52.1" y="449.4" width="1.0" height="1.5" fill="#0f1111"/><rect x="28.1" y="848.2" width="1.0" height="1.5" fill="#0f1111"/><rect x="22.7" y="331.6" width="1.0" height="1.5" fill="#0f1111"/><rect x="53.1" y="204.4" width="2.0" height="1.0" fill="#0f1111"/><rect x="10.4" y="372.8" width="1.0" height="1.5" fill="#0f1111"/><rect x="63.0" y="619.5" width="3.0" height="1.5" fill="#0f1111"/><rect x="63.6" y="556.2" width="1.0" height="1.0" fill="#0f1111"/><rect x="17.3" y="475.5" width="2.0" height="1.5" fill="#0f1111"/><rect x="46.5" y="688.3" width="2.0" height="1.5" fill="#0f1111"/><rect x="44.0" y="1025.0" width="26.0" height="1.2" fill="#0f1111"/><rect x="0.9" y="16.0" width="1.0" height="1.5" fill="#0f1111"/><rect x="15.9" y="16.0" width="1.5" height="1.5" fill="#0f1111"/><rect x="20.9" y="16.0" width="1.5" height="1.5" fill="#0f1111"/><rect x="25.9" y="16.0" width="1.5" height="1.5" fill="#0f1111"/><rect x="35.9" y="16.0" width="1.0" height="1.5" fill="#0f1111"/><rect x="45.9" y="16.0" width="1.5" height="1.5" fill="#0f1111"/><rect x="60.9" y="16.0" width="2.0" height="1.5" fill="#0f1111"/><rect x="65.9" y="16.0" width="1.5" height="1.5" fill="#0f1111"/><rect x="70.9" y="16.0" width="2.0" height="1.5" fill="#0f1111"/><rect x="75.9" y="16.0" width="1.0" height="1.5" fill="#0f1111"/><rect x="6.3" y="21.0" width="2.0" height="1.5" fill="#0f1111"/><rect x="26.3" y="21.0" width="2.0" height="1.5" fill="#0f1111"/><rect x="31.3" y="21.0" width="1.0" height="1.5" fill="#0f1111"/><rect x="36.3" y="21.0" width="2.0" height="1.5" fill="#0f1111"/><rect x="41.3" y="21.0" width="1.5" height="1.5" fill="#0f1111"/><rect x="46.3" y="21.0" width="1.5" height="1.5" fill="#0f1111"/><rect x="66.3" y="21.0" width="1.5" height="1.5" fill="#0f1111"/><rect x="71.3" y="21.0" width="1.5" height="1.5" fill="#0f1111"/><rect x="3.6" y="41.0" width="2.0" height="1.5" fill="#0f1111"/><rect x="15.6" y="41.0" width="1.5" height="1.5" fill="#0f1111"/><rect x="21.6" y="41.0" width="2.0" height="1.5" fill="#0f1111"/><rect x="27.6" y="41.0" width="1.5" height="1.5" fill="#0f1111"/><rect x="33.6" y="41.0" width="2.0" height="1.5" fill="#0f1111"/><rect x="51.6" y="41.0" width="1.0" height="1.5" fill="#0f1111"/><rect x="63.6" y="41.0" width="1.5" height="1.5" fill="#0f1111"/><rect x="69.6" y="41.0" width="2.0" height="1.5" fill="#0f1111"/><rect x="75.6" y="41.0" width="1.5" height="1.5" fill="#0f1111"/><rect x="2.3" y="46.0" width="1.5" height="1.5" fill="#0f1111"/><rect x="12.3" y="46.0" width="1.5" height="1.5" fill="#0f1111"/><rect x="22.3" y="46.0" width="1.0" height="1.5" fill="#0f1111"/><rect x="27.3" y="46.0" width="2.0" height="1.5" fill="#0f1111"/><rect x="32.3" y="46.0" width="1.0" height="1.5" fill="#0f1111"/><rect x="42.3" y="46.0" width="2.0" height="1.5" fill="#0f1111"/><rect x="47.3" y="46.0" width="1.0" height="1.5" fill="#0f1111"/><rect x="57.3" y="46.0" width="1.5" height="1.5" fill="#0f1111"/><rect x="62.3" y="46.0" width="1.5" height="1.5" fill="#0f1111"/><rect x="72.3" y="46.0" width="2.0" height="1.5" fill="#0f1111"/><rect x="1.1" y="56.0" width="1.5" height="1.5" fill="#0f1111"/><rect x="6.1" y="56.0" width="1.5" height="1.5" fill="#0f1111"/><rect x="31.1" y="56.0" width="1.0" height="1.5" fill="#0f1111"/><rect x="41.1" y="56.0" width="2.0" height="1.5" fill="#0f1111"/><rect x="46.1" y="56.0" width="1.0" height="1.5" fill="#0f1111"/><rect x="51.1" y="56.0" width="1.0" height="1.5" fill="#0f1111"/><rect x="56.1" y="56.0" width="2.0" height="1.5" fill="#0f1111"/><rect x="66.1" y="56.0" width="1.0" height="1.5" fill="#0f1111"/><rect x="71.1" y="56.0" width="2.0" height="1.5" fill="#0f1111"/><rect x="76.1" y="56.0" width="1.5" height="1.5" fill="#0f1111"/><rect x="3.9" y="60.0" width="1.5" height="1.5" fill="#0f1111"/><rect x="8.9" y="60.0" width="1.0" height="1.5" fill="#0f1111"/><rect x="18.9" y="60.0" width="2.0" height="1.5" fill="#0f1111"/><rect x="33.9" y="60.0" width="1.0" height="1.5" fill="#0f1111"/><rect x="38.9" y="60.0" width="2.0" height="1.5" fill="#0f1111"/><rect x="43.9" y="60.0" width="2.0" height="1.5" fill="#0f1111"/><rect x="48.9" y="60.0" width="1.5" height="1.5" fill="#0f1111"/><rect x="53.9" y="60.0" width="2.0" height="1.5" fill="#0f1111"/><rect x="58.9" y="60.0" width="2.0" height="1.5" fill="#0f1111"/><rect x="63.9" y="60.0" width="2.0" height="1.5" fill="#0f1111"/><rect x="73.9" y="60.0" width="1.0" height="1.5" fill="#0f1111"/><rect x="2.4" y="80.0" width="1.5" height="1.5" fill="#0f1111"/><rect x="12.4" y="80.0" width="1.5" height="1.5" fill="#0f1111"/><rect x="17.4" y="80.0" width="1.5" height="1.5" fill="#0f1111"/><rect x="22.4" y="80.0" width="1.0" height="1.5" fill="#0f1111"/><rect x="32.4" y="80.0" width="1.0" height="1.5" fill="#0f1111"/><rect x="42.4" y="80.0" width="1.0" height="1.5" fill="#0f1111"/><rect x="47.4" y="80.0" width="1.5" height="1.5" fill="#0f1111"/><rect x="52.4" y="80.0" width="1.5" height="1.5" fill="#0f1111"/><rect x="57.4" y="80.0" width="2.0" height="1.5" fill="#0f1111"/><rect x="62.4" y="80.0" width="1.0" height="1.5" fill="#0f1111"/><rect x="67.4" y="80.0" width="1.5" height="1.5" fill="#0f1111"/><rect x="72.4" y="80.0" width="2.0" height="1.5" fill="#0f1111"/><rect x="77.4" y="80.0" width="2.0" height="1.5" fill="#0f1111"/><rect x="0.4" y="88.0" width="1.5" height="1.5" fill="#0f1111"/><rect x="6.4" y="88.0" width="2.0" height="1.5" fill="#0f1111"/><rect x="12.4" y="88.0" width="1.5" height="1.5" fill="#0f1111"/><rect x="48.4" y="88.0" width="1.0" height="1.5" fill="#0f1111"/><rect x="54.4" y="88.0" width="2.0" height="1.5" fill="#0f1111"/><rect x="60.4" y="88.0" width="1.5" height="1.5" fill="#0f1111"/><rect x="72.4" y="88.0" width="1.0" height="1.5" fill="#0f1111"/><rect x="5.4" y="93.0" width="2.0" height="1.5" fill="#0f1111"/><rect x="10.4" y="93.0" width="1.0" height="1.5" fill="#0f1111"/><rect x="20.4" y="93.0" width="1.0" height="1.5" fill="#0f1111"/><rect x="25.4" y="93.0" width="2.0" height="1.5" fill="#0f1111"/><rect x="40.4" y="93.0" width="1.0" height="1.5" fill="#0f1111"/><rect x="45.4" y="93.0" width="2.0" height="1.5" fill="#0f1111"/><rect x="65.4" y="93.0" width="1.0" height="1.5" fill="#0f1111"/><rect x="75.4" y="93.0" width="1.5" height="1.5" fill="#0f1111"/><rect x="14.0" y="102.0" width="1.0" height="1.5" fill="#0f1111"/><rect x="19.0" y="102.0" width="1.5" height="1.5" fill="#0f1111"/><rect x="29.0" y="102.0" width="1.0" height="1.5" fill="#0f1111"/><rect x="39.0" y="102.0" width="1.0" height="1.5" fill="#0f1111"/><rect x="49.0" y="102.0" width="2.0" height="1.5" fill="#0f1111"/><rect x="64.0" y="102.0" width="1.5" height="1.5" fill="#0f1111"/><rect x="69.0" y="102.0" width="1.0" height="1.5" fill="#0f1111"/><rect x="74.0" y="102.0" width="1.5" height="1.5" fill="#0f1111"/><rect x="13.8" y="110.0" width="1.5" height="1.5" fill="#0f1111"/><rect x="17.8" y="110.0" width="2.0" height="1.5" fill="#0f1111"/><rect x="25.8" y="110.0" width="1.5" height="1.5" fill="#0f1111"/><rect x="29.8" y="110.0" width="1.5" height="1.5" fill="#0f1111"/><rect x="33.8" y="110.0" width="1.5" height="1.5" fill="#0f1111"/><rect x="65.8" y="110.0" width="2.0" height="1.5" fill="#0f1111"/><rect x="69.8" y="110.0" width="2.0" height="1.5" fill="#0f1111"/><rect x="73.8" y="110.0" width="2.0" height="1.5" fill="#0f1111"/><rect x="77.8" y="110.0" width="1.5" height="1.5" fill="#0f1111"/><rect x="2.6" y="116.0" width="1.5" height="1.5" fill="#0f1111"/><rect x="10.6" y="116.0" width="2.0" height="1.5" fill="#0f1111"/><rect x="18.6" y="116.0" width="1.0" height="1.5" fill="#0f1111"/><rect x="26.6" y="116.0" width="2.0" height="1.5" fill="#0f1111"/><rect x="34.6" y="116.0" width="1.0" height="1.5" fill="#0f1111"/><rect x="42.6" y="116.0" width="2.0" height="1.5" fill="#0f1111"/><rect x="50.6" y="116.0" width="2.0" height="1.5" fill="#0f1111"/><rect x="66.6" y="116.0" width="1.0" height="1.5" fill="#0f1111"/><rect x="74.6" y="116.0" width="1.5" height="1.5" fill="#0f1111"/><rect x="0.5" y="124.0" width="1.0" height="1.5" fill="#0f1111"/><rect x="6.5" y="124.0" width="1.0" height="1.5" fill="#0f1111"/><rect x="12.5" y="124.0" width="1.5" height="1.5" fill="#0f1111"/><rect x="24.5" y="124.0" width="2.0" height="1.5" fill="#0f1111"/><rect x="30.5" y="124.0" width="1.5" height="1.5" fill="#0f1111"/><rect x="36.5" y="124.0" width="1.5" height="1.5" fill="#0f1111"/><rect x="42.5" y="124.0" width="2.0" height="1.5" fill="#0f1111"/><rect x="66.5" y="124.0" width="1.5" height="1.5" fill="#0f1111"/><rect x="3.5" y="168.0" width="2.0" height="1.5" fill="#0f1111"/><rect x="28.5" y="168.0" width="1.5" height="1.5" fill="#0f1111"/><rect x="38.5" y="168.0" width="1.0" height="1.5" fill="#0f1111"/><rect x="48.5" y="168.0" width="1.5" height="1.5" fill="#0f1111"/><rect x="58.5" y="168.0" width="2.0" height="1.5" fill="#0f1111"/><rect x="63.5" y="168.0" width="1.0" height="1.5" fill="#0f1111"/><rect x="68.5" y="168.0" width="1.0" height="1.5" fill="#0f1111"/><rect x="73.5" y="168.0" width="2.0" height="1.5" fill="#0f1111"/><rect x="9.6" y="58.8" width="1.0" height="1.5" fill="#0f1111"/><rect x="71.1" y="54.5" width="3.0" height="1.5" fill="#0f1111"/><rect x="16.1" y="126.5" width="1.0" height="1.5" fill="#0f1111"/><rect x="69.7" y="117.4" width="1.0" height="1.5" fill="#0f1111"/><rect x="67.3" y="47.0" width="3.0" height="1.5" fill="#0f1111"/><rect x="66.1" y="87.1" width="1.0" height="1.5" fill="#0f1111"/><rect x="41.1" y="30.6" width="3.0" height="1.5" fill="#0f1111"/><rect x="57.7" y="121.3" width="1.0" height="1.5" fill="#0f1111"/><rect x="28.3" y="104.5" width="2.0" height="1.5" fill="#0f1111"/><rect x="64.2" y="70.3" width="1.0" height="1.5" fill="#0f1111"/><rect x="72.8" y="4.4" width="1.0" height="1.5" fill="#0f1111"/><rect x="15.5" y="32.6" width="2.0" height="1.5" fill="#0f1111"/><rect x="79.1" y="2.7" width="2.0" height="1.5" fill="#0f1111"/><rect x="1.7" y="14.5" width="1.0" height="1.5" fill="#0f1111"/><rect x="20.7" y="9.4" width="1.0" height="1.5" fill="#0f1111"/><rect x="23.2" y="70.9" width="3.0" height="1.5" fill="#0f1111"/><rect x="66.9" y="85.7" width="3.0" height="1.5" fill="#0f1111"/><rect x="43.1" y="112.1" width="3.0" height="1.5" fill="#0f1111"/><rect x="21.5" y="97.5" width="2.0" height="1.5" fill="#0f1111"/><rect x="27.4" y="1.8" width="1.0" height="1.5" fill="#0f1111"/><rect x="38.7" y="62.4" width="1.0" height="1.5" fill="#0f1111"/><rect x="2.8" y="102.5" width="1.0" height="1.5" fill="#0f1111"/><rect x="51.6" y="79.4" width="3.0" height="1.5" fill="#0f1111"/><rect x="38.1" y="50.2" width="1.0" height="1.5" fill="#0f1111"/><rect x="35.9" y="88.7" width="1.0" height="1.5" fill="#0f1111"/><rect x="48.9" y="111.7" width="1.0" height="1.5" fill="#0f1111"/><rect x="42.3" y="46.2" width="2.0" height="1.5" fill="#0f1111"/><rect x="47.1" y="114.4" width="1.0" height="1.5" fill="#0f1111"/><rect x="65.5" y="27.1" width="3.0" height="1.5" fill="#0f1111"/><rect x="46.2" y="59.9" width="2.0" height="1.5" fill="#0f1111"/><rect x="25.1" y="120.0" width="2.0" height="1.5" fill="#0f1111"/><rect x="26.7" y="74.1" width="1.0" height="1.5" fill="#0f1111"/><rect x="70.1" y="31.8" width="3.0" height="1.5" fill="#0f1111"/><rect x="11.7" y="5.8" width="3.0" height="1.5" fill="#0f1111"/><rect x="30.8" y="18.4" width="1.0" height="1.5" fill="#0f1111"/><rect x="21.0" y="64.0" width="3.0" height="1.5" fill="#0f1111"/><rect x="46.8" y="73.4" width="1.0" height="1.5" fill="#0f1111"/><rect x="2.7" y="127.0" width="3.0" height="1.5" fill="#0f1111"/><rect x="7.6" y="115.5" width="1.0" height="1.5" fill="#0f1111"/><rect x="50.6" y="99.1" width="3.0" height="1.5" fill="#0f1111"/><rect x="63.4" y="12.7" width="1.0" height="1.5" fill="#0f1111"/><rect x="75.1" y="111.7" width="3.0" height="1.5" fill="#0f1111"/><rect x="77.0" y="9.2" width="2.0" height="1.5" fill="#0f1111"/><rect x="40.7" y="94.7" width="3.0" height="1.5" fill="#0f1111"/><rect x="69.8" y="31.4" width="3.0" height="1.5" fill="#0f1111"/><rect x="4.8" y="52.0" width="2.0" height="1.5" fill="#0f1111"/><rect x="70.7" y="86.0" width="2.0" height="1.5" fill="#0f1111"/><rect x="71.5" y="64.5" width="1.0" height="1.5" fill="#0f1111"/><rect x="12.1" y="127.6" width="1.0" height="1.5" fill="#0f1111"/><rect x="69.7" y="0.9" width="2.0" height="1.5" fill="#0f1111"/><rect x="31.7" y="51.8" width="2.0" height="1.5" fill="#0f1111"/><rect x="46.9" y="119.0" width="1.0" height="1.5" fill="#0f1111"/><rect x="24.7" y="38.6" width="3.0" height="1.5" fill="#0f1111"/><rect x="52.7" y="73.2" width="2.0" height="1.5" fill="#0f1111"/><rect x="15.2" y="9.4" width="1.0" height="1.5" fill="#0f1111"/><rect x="24.3" y="74.9" width="2.0" height="1.5" fill="#0f1111"/><rect x="28.6" y="126.4" width="3.0" height="1.5" fill="#0f1111"/><rect x="69.5" y="54.8" width="1.0" height="1.5" fill="#0f1111"/><rect x="25.5" y="107.3" width="1.0" height="1.5" fill="#0f1111"/><rect x="20.6" y="35.3" width="1.0" height="1.5" fill="#0f1111"/><rect x="50.1" y="97.1" width="1.0" height="1.5" fill="#0f1111"/><rect x="17.5" y="90.2" width="2.0" height="1.5" fill="#0f1111"/><rect x="71.4" y="57.3" width="2.0" height="1.5" fill="#0f1111"/><rect x="51.8" y="110.6" width="1.0" height="1.5" fill="#0f1111"/><rect x="4.5" y="30.9" width="1.0" height="1.5" fill="#0f1111"/><rect x="6.3" y="76.9" width="3.0" height="1.5" fill="#0f1111"/><rect x="10.9" y="43.7" width="1.0" height="1.5" fill="#0f1111"/><rect x="51.4" y="34.6" width="1.0" height="1.5" fill="#0f1111"/><rect x="73.8" y="81.9" width="1.0" height="1.5" fill="#0f1111"/><rect x="69.4" y="41.2" width="1.0" height="1.5" fill="#0f1111"/><rect x="32.4" y="83.1" width="3.0" height="1.5" fill="#0f1111"/><rect x="14.0" y="102.4" width="2.0" height="1.5" fill="#0f1111"/><rect x="7.0" y="101.9" width="3.0" height="1.5" fill="#0f1111"/><rect x="39.5" y="42.8" width="3.0" height="1.5" fill="#0f1111"/><rect x="75.2" y="51.1" width="1.0" height="1.5" fill="#0f1111"/><rect x="25.4" y="3.3" width="3.0" height="1.5" fill="#0f1111"/><rect x="4.5" y="126.4" width="3.0" height="1.5" fill="#0f1111"/><rect x="66.8" y="90.9" width="1.0" height="1.5" fill="#0f1111"/><rect x="12.5" y="12.0" width="1.0" height="1.5" fill="#0f1111"/><rect x="67.2" y="67.8" width="2.0" height="1.5" fill="#0f1111"/><rect x="33.9" y="104.2" width="3.0" height="1.5" fill="#0f1111"/><rect x="69.3" y="87.1" width="1.0" height="1.5" fill="#0f1111"/><rect x="48.1" y="84.1" width="2.0" height="1.5" fill="#0f1111"/><rect x="49.5" y="29.4" width="3.0" height="1.5" fill="#0f1111"/><rect x="2.5" y="61.1" width="3.0" height="1.5" fill="#0f1111"/><rect x="61.8" y="39.6" width="3.0" height="1.5" fill="#0f1111"/><rect x="22.3" y="58.0" width="3.0" height="1.5" fill="#0f1111"/><rect x="21.9" y="67.8" width="2.0" height="1.5" fill="#0f1111"/><rect x="38.1" y="1.2" width="3.0" height="1.5" fill="#0f1111"/><rect x="78.1" y="103.6" width="1.0" height="1.5" fill="#0f1111"/><rect x="0.0" y="1053.7" width="80.0" height="2.3" fill="#c9c9c1"/><rect x="0.0" y="1056.0" width="80.0" height="2.0" fill="#7a7458"/><rect x="0.0" y="1056.0" width="12.0" height="2.0" fill="#e8c07c"/><rect x="0.0" y="1058.0" width="80.0" height="1.0" fill="#0f1111"/><rect x="0.0" y="1059.0" width="80.0" height="4.0" fill="#7a7458"/><rect x="2.0" y="1060.0" width="2.0" height="2.0" fill="#8fe29a"/><rect x="6.0" y="1060.0" width="2.0" height="2.0" fill="#8fe29a"/><rect x="10.0" y="1060.0" width="2.0" height="2.0" fill="#8fe29a"/><rect x="14.0" y="1060.0" width="2.0" height="2.0" fill="#8fe29a"/><rect x="18.0" y="1060.0" width="2.0" height="2.0" fill="#8fe29a"/><rect x="22.0" y="1060.0" width="2.0" height="2.0" fill="#8fe29a"/><rect x="26.0" y="1060.0" width="2.0" height="2.0" fill="#8fe29a"/><rect x="30.0" y="1060.0" width="2.0" height="2.0" fill="#8fe29a"/><rect x="34.0" y="1060.0" width="2.0" height="2.0" fill="#8fe29a"/><rect x="38.0" y="1060.0" width="2.0" height="2.0" fill="#8fe29a"/><rect x="42.0" y="1060.0" width="2.0" height="2.0" fill="#8fe29a"/><rect x="46.0" y="1060.0" width="2.0" height="2.0" fill="#8fe29a"/><rect x="0.0" y="1063.0" width="80.0" height="49.0" fill="#0f1111"/><rect x="79.2" y="1074.0" width="1.0" height="1.2" fill="#6ccf86"/><rect x="50.0" y="1068.9" width="2.0" height="1.2" fill="#8a857f"/><rect x="62.2" y="1075.4" width="3.0" height="1.2" fill="#8a857f"/><rect x="11.9" y="1071.5" width="2.0" height="1.2" fill="#8a857f"/><rect x="2.3" y="1100.3" width="2.0" height="1.2" fill="#6ccf86"/><rect x="78.6" y="1086.9" width="3.0" height="1.2" fill="#6ccf86"/><rect x="36.8" y="1078.5" width="1.0" height="1.2" fill="#6ccf86"/><rect x="52.8" y="1063.7" width="6.0" height="1.2" fill="#8a857f"/><rect x="69.1" y="1065.9" width="6.0" height="1.2" fill="#6ccf86"/><rect x="72.6" y="1081.0" width="2.0" height="1.2" fill="#6ccf86"/><rect x="20.2" y="1075.6" width="6.0" height="1.2" fill="#6ccf86"/><rect x="18.5" y="1072.8" width="6.0" height="1.2" fill="#8a857f"/><rect x="22.3" y="1105.2" width="6.0" height="1.2" fill="#6ccf86"/><rect x="78.5" y="1101.0" width="6.0" height="1.2" fill="#6ccf86"/><rect x="76.3" y="1069.6" width="3.0" height="1.2" fill="#6ccf86"/><rect x="7.1" y="1063.2" width="2.0" height="1.2" fill="#6ccf86"/><rect x="25.6" y="1092.3" width="6.0" height="1.2" fill="#6ccf86"/><rect x="46.3" y="1105.4" width="2.0" height="1.2" fill="#8a857f"/><rect x="28.8" y="1100.4" width="6.0" height="1.2" fill="#6ccf86"/><rect x="34.8" y="1069.7" width="3.0" height="1.2" fill="#8a857f"/><rect x="2.0" y="1068.4" width="1.0" height="1.2" fill="#6ccf86"/><rect x="72.9" y="1070.2" width="3.0" height="1.2" fill="#6ccf86"/><rect x="60.1" y="1085.3" width="6.0" height="1.2" fill="#6ccf86"/><rect x="33.1" y="1093.8" width="6.0" height="1.2" fill="#6ccf86"/><rect x="78.4" y="1064.6" width="2.0" height="1.2" fill="#6ccf86"/><rect x="63.4" y="1096.1" width="1.0" height="1.2" fill="#6ccf86"/><rect x="40.4" y="1074.1" width="6.0" height="1.2" fill="#8a857f"/><rect x="8.4" y="1064.0" width="3.0" height="1.2" fill="#6ccf86"/><rect x="70.3" y="1068.8" width="6.0" height="1.2" fill="#6ccf86"/><rect x="42.0" y="1063.1" width="2.0" height="1.2" fill="#8a857f"/><rect x="43.2" y="1093.4" width="1.0" height="1.2" fill="#8a857f"/><rect x="28.3" y="1086.8" width="1.0" height="1.2" fill="#6ccf86"/><rect x="77.6" y="1104.0" width="2.0" height="1.2" fill="#8a857f"/><rect x="5.8" y="1096.8" width="1.0" height="1.2" fill="#6ccf86"/><rect x="21.5" y="1109.4" width="2.0" height="1.2" fill="#8a857f"/><rect x="3.8" y="1100.9" width="3.0" height="1.2" fill="#6ccf86"/><rect x="0.8" y="1096.0" width="6.0" height="1.2" fill="#8a857f"/><rect x="22.6" y="1078.9" width="6.0" height="1.2" fill="#8a857f"/><rect x="57.4" y="1082.2" width="3.0" height="1.2" fill="#8a857f"/><rect x="33.5" y="1109.7" width="6.0" height="1.2" fill="#6ccf86"/><rect x="70.5" y="1101.6" width="1.0" height="1.2" fill="#6ccf86"/><rect x="48.6" y="1107.5" width="3.0" height="1.2" fill="#8a857f"/><rect x="48.9" y="1081.1" width="2.0" height="1.2" fill="#6ccf86"/><rect x="53.1" y="1067.2" width="1.0" height="1.2" fill="#8a857f"/><rect x="4.0" y="1096.3" width="3.0" height="1.2" fill="#8a857f"/><rect x="51.7" y="1089.3" width="3.0" height="1.2" fill="#6ccf86"/><rect x="77.7" y="1063.0" width="6.0" height="1.2" fill="#8a857f"/><rect x="27.4" y="1089.2" width="6.0" height="1.2" fill="#6ccf86"/><rect x="66.0" y="1101.0" width="6.0" height="1.2" fill="#6ccf86"/><rect x="57.0" y="1081.9" width="3.0" height="1.2" fill="#8a857f"/><rect x="52.8" y="1102.7" width="1.0" height="1.2" fill="#8a857f"/><rect x="63.8" y="1094.9" width="3.0" height="1.2" fill="#6ccf86"/><rect x="72.7" y="1085.7" width="3.0" height="1.2" fill="#8a857f"/><rect x="47.2" y="1090.4" width="2.0" height="1.2" fill="#6ccf86"/><rect x="74.2" y="1088.4" width="2.0" height="1.2" fill="#8a857f"/><rect x="12.0" y="1098.0" width="1.2" height="1.2" fill="#6ccf86"/><rect x="15.0" y="1098.0" width="1.2" height="1.2" fill="#6ccf86"/><rect x="18.0" y="1098.0" width="1.2" height="1.2" fill="#6ccf86"/><rect x="21.0" y="1098.0" width="1.2" height="1.2" fill="#6ccf86"/><rect x="24.0" y="1098.0" width="1.2" height="1.2" fill="#6ccf86"/><rect x="27.0" y="1098.0" width="1.2" height="1.2" fill="#6ccf86"/><rect x="30.0" y="1098.0" width="1.2" height="1.2" fill="#6ccf86"/><rect x="33.0" y="1098.0" width="1.2" height="1.2" fill="#6ccf86"/><rect x="36.0" y="1098.0" width="1.2" height="1.2" fill="#6ccf86"/><rect x="39.0" y="1098.0" width="1.2" height="1.2" fill="#6ccf86"/><rect x="42.0" y="1098.0" width="1.2" height="1.2" fill="#6ccf86"/><rect x="45.0" y="1098.0" width="1.2" height="1.2" fill="#6ccf86"/><rect x="48.0" y="1098.0" width="1.2" height="1.2" fill="#6ccf86"/><rect x="0.0" y="1111.5" width="80.0" height="2.5" fill="#6dd08a"/><rect x="0.0" y="1114.0" width="80.0" height="3.5" fill="#0f1111"/><rect x="13.5" y="1114.5" width="3.0" height="2.0" fill="#6dd08a"/><rect x="53.9" y="1114.5" width="2.0" height="2.0" fill="#6dd08a"/><rect x="14.2" y="1114.5" width="5.0" height="2.0" fill="#8a857f"/><rect x="25.8" y="1114.5" width="3.0" height="2.0" fill="#6dd08a"/><rect x="9.8" y="1114.5" width="2.0" height="2.0" fill="#8a857f"/><rect x="30.0" y="1114.5" width="3.0" height="2.0" fill="#8a857f"/><rect x="53.0" y="1114.5" width="5.0" height="2.0" fill="#e05050"/><rect x="24.2" y="1114.5" width="5.0" height="2.0" fill="#8a857f"/><rect x="22.0" y="1114.5" width="3.0" height="2.0" fill="#6dd08a"/><rect x="55.6" y="1114.5" width="3.0" height="2.0" fill="#6dd08a"/><rect x="58.5" y="1114.5" width="2.0" height="2.0" fill="#e05050"/><rect x="12.0" y="1114.5" width="5.0" height="2.0" fill="#6dd08a"/><rect x="29.4" y="1114.5" width="5.0" height="2.0" fill="#6dd08a"/><rect x="49.8" y="1114.5" width="5.0" height="2.0" fill="#8a857f"/><rect x="0.0" y="1117.5" width="80.0" height="6.5" fill="#6dd08a"/><rect x="0.0" y="1123.5" width="25.0" height="1.0" fill="#e8a060"/><rect x="0.0" y="1124.0" width="80.0" height="44.0" fill="#8a857f"/><rect x="64.1" y="1135.1" width="2.0" height="1.2" fill="#0f1111"/><rect x="16.1" y="1149.1" width="1.0" height="1.2" fill="#0f1111"/><rect x="47.2" y="1137.5" width="2.0" height="1.2" fill="#0f1111"/><rect x="22.0" y="1138.3" width="1.0" height="1.2" fill="#0f1111"/><rect x="21.2" y="1143.3" width="2.0" height="1.2" fill="#0f1111"/><rect x="50.9" y="1161.8" width="1.0" height="1.2" fill="#0f1111"/><rect x="10.3" y="1166.2" width="1.0" height="1.2" fill="#0f1111"/><rect x="49.4" y="1140.4" width="1.0" height="1.2" fill="#0f1111"/><rect x="57.4" y="1140.5" width="1.0" height="1.2" fill="#0f1111"/><rect x="57.0" y="1137.0" width="1.0" height="1.2" fill="#0f1111"/><rect x="34.5" y="1150.7" width="1.0" height="1.2" fill="#0f1111"/><rect x="28.2" y="1141.0" width="2.0" height="1.2" fill="#0f1111"/><rect x="10.4" y="1151.2" width="2.0" height="1.2" fill="#0f1111"/><rect x="46.4" y="1126.8" width="1.0" height="1.2" fill="#0f1111"/><rect x="26.4" y="1127.1" width="1.0" height="1.2" fill="#0f1111"/><rect x="30.4" y="1147.1" width="1.0" height="1.2" fill="#0f1111"/><rect x="74.9" y="1152.3" width="1.0" height="1.2" fill="#0f1111"/><rect x="8.6" y="1148.8" width="1.0" height="1.2" fill="#0f1111"/><rect x="56.1" y="1143.2" width="1.0" height="1.2" fill="#0f1111"/><rect x="14.1" y="1126.9" width="1.0" height="1.2" fill="#0f1111"/><rect x="39.3" y="1146.5" width="1.0" height="1.2" fill="#0f1111"/><rect x="53.6" y="1156.6" width="1.0" height="1.2" fill="#0f1111"/><rect x="43.3" y="1164.7" width="1.0" height="1.2" fill="#0f1111"/><rect x="44.3" y="1157.8" width="1.0" height="1.2" fill="#0f1111"/><rect x="9.4" y="1133.7" width="1.0" height="1.2" fill="#0f1111"/><rect x="45.7" y="1124.7" width="1.0" height="1.2" fill="#0f1111"/><rect x="7.1" y="1157.1" width="2.0" height="1.2" fill="#0f1111"/><rect x="36.3" y="1160.3" width="1.0" height="1.2" fill="#0f1111"/><rect x="56.9" y="1145.2" width="1.0" height="1.2" fill="#0f1111"/><rect x="44.0" y="1156.9" width="2.0" height="1.2" fill="#0f1111"/><rect x="11.2" y="1141.9" width="1.0" height="1.2" fill="#0f1111"/><rect x="69.8" y="1130.4" width="1.0" height="1.2" fill="#0f1111"/><rect x="15.2" y="1167.2" width="1.0" height="1.2" fill="#0f1111"/><rect x="79.1" y="1136.1" width="1.0" height="1.2" fill="#0f1111"/><rect x="6.9" y="1140.9" width="2.0" height="1.2" fill="#0f1111"/><rect x="68.7" y="1148.5" width="2.0" height="1.2" fill="#0f1111"/><rect x="70.9" y="1154.0" width="1.0" height="1.2" fill="#0f1111"/><rect x="24.4" y="1162.1" width="1.0" height="1.2" fill="#0f1111"/><rect x="68.5" y="1135.3" width="1.0" height="1.2" fill="#0f1111"/><rect x="10.5" y="1133.1" width="2.0" height="1.2" fill="#0f1111"/><rect x="29.9" y="1144.4" width="1.0" height="1.2" fill="#0f1111"/><rect x="56.8" y="1130.2" width="1.0" height="1.2" fill="#0f1111"/><rect x="16.0" y="1164.5" width="2.0" height="1.2" fill="#0f1111"/><rect x="53.1" y="1156.1" width="1.0" height="1.2" fill="#0f1111"/><rect x="42.6" y="1142.0" width="2.0" height="1.2" fill="#0f1111"/><rect x="65.9" y="1125.6" width="1.0" height="1.2" fill="#0f1111"/><rect x="63.7" y="1136.8" width="2.0" height="1.2" fill="#0f1111"/><rect x="16.7" y="1166.8" width="2.0" height="1.2" fill="#0f1111"/><rect x="36.4" y="1165.1" width="1.0" height="1.2" fill="#0f1111"/><rect x="16.3" y="1132.9" width="1.0" height="1.2" fill="#0f1111"/><rect x="34.7" y="1152.1" width="1.0" height="1.2" fill="#0f1111"/><rect x="11.0" y="1162.7" width="2.0" height="1.2" fill="#0f1111"/><rect x="39.8" y="1124.6" width="2.0" height="1.2" fill="#0f1111"/><rect x="44.9" y="1159.2" width="1.0" height="1.2" fill="#0f1111"/><rect x="17.7" y="1155.7" width="2.0" height="1.2" fill="#0f1111"/><rect x="23.6" y="1133.3" width="1.0" height="1.2" fill="#0f1111"/><rect x="11.7" y="1164.4" width="1.0" height="1.2" fill="#0f1111"/><rect x="41.3" y="1144.5" width="1.0" height="1.2" fill="#0f1111"/><rect x="62.7" y="1165.8" width="1.0" height="1.2" fill="#0f1111"/><rect x="17.9" y="1160.7" width="2.0" height="1.2" fill="#0f1111"/><rect x="72.5" y="1154.2" width="1.0" height="1.2" fill="#0f1111"/><rect x="69.5" y="1164.6" width="1.0" height="1.2" fill="#0f1111"/><rect x="3.3" y="1160.8" width="1.0" height="1.2" fill="#0f1111"/><rect x="60.7" y="1162.5" width="1.0" height="1.2" fill="#0f1111"/><rect x="56.6" y="1155.7" width="1.0" height="1.2" fill="#0f1111"/><rect x="73.0" y="1138.3" width="1.0" height="1.2" fill="#0f1111"/><rect x="12.2" y="1159.2" width="1.0" height="1.2" fill="#0f1111"/><rect x="31.3" y="1125.4" width="1.0" height="1.2" fill="#0f1111"/><rect x="12.5" y="1136.8" width="2.0" height="1.2" fill="#0f1111"/><rect x="43.7" y="1128.1" width="1.0" height="1.2" fill="#0f1111"/><rect x="11.9" y="1132.1" width="1.0" height="1.2" fill="#0f1111"/><rect x="54.3" y="1129.0" width="1.0" height="1.2" fill="#0f1111"/><rect x="9.8" y="1164.6" width="2.0" height="1.2" fill="#0f1111"/><rect x="75.2" y="1147.2" width="1.0" height="1.2" fill="#0f1111"/><rect x="39.2" y="1124.8" width="1.0" height="1.2" fill="#0f1111"/><rect x="71.2" y="1164.2" width="1.0" height="1.2" fill="#0f1111"/><rect x="38.8" y="1162.0" width="2.0" height="1.2" fill="#0f1111"/><rect x="46.7" y="1157.3" width="1.0" height="1.2" fill="#0f1111"/><rect x="11.2" y="1135.9" width="1.0" height="1.2" fill="#0f1111"/><rect x="46.3" y="1137.2" width="2.0" height="1.2" fill="#0f1111"/><rect x="47.9" y="1166.6" width="1.0" height="1.2" fill="#0f1111"/><rect x="15.5" y="1130.7" width="1.0" height="1.2" fill="#0f1111"/><rect x="4.0" y="1138.7" width="1.0" height="1.2" fill="#0f1111"/><rect x="38.5" y="1138.5" width="1.0" height="1.2" fill="#0f1111"/><rect x="14.3" y="1158.7" width="1.0" height="1.2" fill="#0f1111"/><rect x="64.7" y="1155.8" width="1.0" height="1.2" fill="#0f1111"/><rect x="7.7" y="1148.3" width="1.0" height="1.2" fill="#0f1111"/><rect x="47.6" y="1144.3" width="1.0" height="1.2" fill="#0f1111"/><rect x="3.2" y="1149.5" width="1.0" height="1.2" fill="#0f1111"/><rect x="51.7" y="1129.8" width="2.0" height="1.2" fill="#0f1111"/><rect x="67.0" y="1127.4" width="2.0" height="1.2" fill="#0f1111"/><rect x="53.1" y="1131.2" width="1.0" height="1.2" fill="#0f1111"/><rect x="53.0" y="1128.0" width="1.0" height="1.2" fill="#0f1111"/><rect x="67.4" y="1162.4" width="1.0" height="1.2" fill="#0f1111"/><rect x="24.3" y="1135.5" width="1.0" height="1.2" fill="#0f1111"/><rect x="70.3" y="1129.2" width="1.0" height="1.2" fill="#0f1111"/><rect x="21.6" y="1147.8" width="1.0" height="1.2" fill="#0f1111"/><rect x="37.4" y="1131.2" width="2.0" height="1.2" fill="#0f1111"/><rect x="3.4" y="1135.3" width="1.0" height="1.2" fill="#0f1111"/><rect x="22.7" y="1148.4" width="1.0" height="1.2" fill="#0f1111"/><rect x="72.7" y="1156.0" width="2.0" height="1.2" fill="#0f1111"/><rect x="40.1" y="1163.2" width="1.0" height="1.2" fill="#0f1111"/><rect x="8.5" y="1126.4" width="2.0" height="1.2" fill="#0f1111"/><rect x="45.6" y="1154.3" width="1.0" height="1.2" fill="#0f1111"/><rect x="7.0" y="1131.5" width="1.0" height="1.2" fill="#0f1111"/><rect x="79.9" y="1142.7" width="2.0" height="1.2" fill="#0f1111"/><rect x="41.4" y="1136.8" width="1.0" height="1.2" fill="#0f1111"/><rect x="6.7" y="1149.5" width="1.0" height="1.2" fill="#0f1111"/><rect x="19.5" y="1158.1" width="2.0" height="1.2" fill="#0f1111"/><rect x="56.9" y="1126.7" width="1.0" height="1.2" fill="#0f1111"/><rect x="5.8" y="1138.8" width="1.0" height="1.2" fill="#0f1111"/><rect x="3.3" y="1151.2" width="2.0" height="1.2" fill="#0f1111"/><rect x="14.0" y="1137.4" width="1.0" height="1.2" fill="#0f1111"/><rect x="64.8" y="1144.3" width="1.0" height="1.2" fill="#0f1111"/><rect x="0.9" y="1165.4" width="1.0" height="1.2" fill="#0f1111"/><rect x="62.9" y="1125.4" width="1.0" height="1.2" fill="#0f1111"/><rect x="11.8" y="1146.5" width="1.0" height="1.2" fill="#0f1111"/><rect x="12.1" y="1139.2" width="1.0" height="1.2" fill="#0f1111"/><rect x="16.3" y="1164.7" width="2.0" height="1.2" fill="#0f1111"/><rect x="26.5" y="1166.9" width="1.0" height="1.2" fill="#0f1111"/><rect x="63.3" y="1145.1" width="1.0" height="1.2" fill="#0f1111"/><rect x="42.0" y="1138.5" width="1.0" height="1.2" fill="#0f1111"/><rect x="60.1" y="1152.0" width="1.0" height="1.2" fill="#0f1111"/><rect x="69.3" y="1126.2" width="1.0" height="1.2" fill="#0f1111"/><rect x="62.9" y="1128.1" width="2.0" height="1.2" fill="#0f1111"/><rect x="77.7" y="1149.6" width="1.0" height="1.2" fill="#0f1111"/><rect x="53.8" y="1156.8" width="1.0" height="1.2" fill="#0f1111"/><rect x="20.7" y="1154.5" width="1.0" height="1.2" fill="#0f1111"/><rect x="72.4" y="1156.8" width="2.0" height="1.2" fill="#0f1111"/><rect x="47.2" y="1143.2" width="2.0" height="1.2" fill="#0f1111"/><rect x="62.8" y="1162.3" width="1.0" height="1.2" fill="#0f1111"/><rect x="59.8" y="1150.1" width="2.0" height="1.2" fill="#0f1111"/><rect x="75.7" y="1129.1" width="1.0" height="1.2" fill="#0f1111"/><rect x="60.1" y="1161.3" width="1.0" height="1.2" fill="#0f1111"/><rect x="15.8" y="1144.1" width="1.0" height="1.2" fill="#0f1111"/><rect x="70.2" y="1149.3" width="2.0" height="1.2" fill="#0f1111"/><rect x="71.2" y="1126.2" width="2.0" height="1.2" fill="#0f1111"/><rect x="62.7" y="1158.9" width="2.0" height="1.2" fill="#0f1111"/><rect x="61.9" y="1139.1" width="1.0" height="1.2" fill="#0f1111"/><rect x="32.5" y="1127.8" width="2.0" height="1.2" fill="#0f1111"/><rect x="53.8" y="1158.8" width="2.0" height="1.2" fill="#0f1111"/><rect x="47.6" y="1160.8" width="1.0" height="1.2" fill="#0f1111"/><rect x="0.4" y="1145.5" width="1.0" height="1.2" fill="#0f1111"/><rect x="76.1" y="1162.6" width="1.0" height="1.2" fill="#0f1111"/><rect x="33.5" y="1150.6" width="1.0" height="1.2" fill="#0f1111"/><rect x="11.7" y="1148.0" width="1.0" height="1.2" fill="#0f1111"/><rect x="28.3" y="1161.2" width="2.0" height="1.2" fill="#0f1111"/><rect x="2.6" y="1138.8" width="1.0" height="1.2" fill="#0f1111"/><rect x="15.0" y="1163.1" width="1.0" height="1.2" fill="#0f1111"/><rect x="52.9" y="1159.5" width="1.0" height="1.2" fill="#0f1111"/><rect x="17.3" y="1151.6" width="1.0" height="1.2" fill="#0f1111"/><rect x="65.8" y="1132.1" width="1.0" height="1.2" fill="#0f1111"/><rect x="26.6" y="1130.6" width="1.0" height="1.2" fill="#0f1111"/><rect x="17.9" y="1163.2" width="2.0" height="1.2" fill="#0f1111"/><rect x="70.6" y="1166.3" width="1.0" height="1.2" fill="#0f1111"/><rect x="40.0" y="1166.1" width="2.0" height="1.2" fill="#0f1111"/><rect x="63.3" y="1150.7" width="1.0" height="1.2" fill="#0f1111"/><rect x="31.3" y="1124.4" width="1.0" height="1.2" fill="#0f1111"/><rect x="8.3" y="1134.8" width="2.0" height="1.2" fill="#0f1111"/><rect x="64.8" y="1135.0" width="1.0" height="1.2" fill="#0f1111"/><rect x="54.1" y="1167.3" width="2.0" height="1.2" fill="#0f1111"/><rect x="69.0" y="1146.6" width="1.0" height="1.2" fill="#0f1111"/><rect x="10.8" y="1157.1" width="1.0" height="1.2" fill="#0f1111"/><rect x="53.3" y="1127.3" width="2.0" height="1.2" fill="#0f1111"/><rect x="26.5" y="1135.7" width="1.0" height="1.2" fill="#0f1111"/><rect x="28.9" y="1153.1" width="2.0" height="1.2" fill="#0f1111"/><rect x="54.9" y="1165.3" width="2.0" height="1.2" fill="#0f1111"/><rect x="4.8" y="1152.8" width="1.0" height="1.2" fill="#0f1111"/><rect x="29.1" y="1167.0" width="1.0" height="1.2" fill="#0f1111"/><rect x="70.0" y="1163.1" width="1.0" height="1.2" fill="#0f1111"/><rect x="44.6" y="1143.7" width="2.0" height="1.2" fill="#0f1111"/><rect x="71.3" y="1156.1" width="2.0" height="1.2" fill="#0f1111"/><rect x="36.7" y="1165.7" width="1.0" height="1.2" fill="#0f1111"/><rect x="11.0" y="1165.9" width="1.0" height="1.2" fill="#0f1111"/><rect x="11.6" y="1149.9" width="2.0" height="1.2" fill="#0f1111"/><rect x="40.6" y="1167.9" width="1.0" height="1.2" fill="#0f1111"/><rect x="59.8" y="1152.2" width="1.0" height="1.2" fill="#0f1111"/><rect x="50.2" y="1134.6" width="2.0" height="1.2" fill="#0f1111"/><rect x="2.1" y="1148.1" width="1.0" height="1.2" fill="#0f1111"/><rect x="51.9" y="1159.4" width="2.0" height="1.2" fill="#0f1111"/><rect x="51.2" y="1145.7" width="2.0" height="1.2" fill="#0f1111"/><rect x="28.8" y="1163.7" width="1.0" height="1.2" fill="#0f1111"/><rect x="12.9" y="1149.3" width="1.0" height="1.2" fill="#0f1111"/><rect x="63.5" y="1139.3" width="1.0" height="1.2" fill="#0f1111"/><rect x="16.1" y="1159.5" width="1.0" height="1.2" fill="#0f1111"/><rect x="13.0" y="1156.5" width="1.0" height="1.2" fill="#0f1111"/><rect x="54.5" y="1163.9" width="2.0" height="1.2" fill="#0f1111"/><rect x="23.8" y="1140.9" width="1.0" height="1.2" fill="#0f1111"/><rect x="77.0" y="1132.2" width="1.0" height="1.2" fill="#0f1111"/><rect x="71.3" y="1144.9" width="2.0" height="1.2" fill="#0f1111"/><rect x="25.7" y="1143.3" width="1.0" height="1.2" fill="#0f1111"/><rect x="54.5" y="1139.9" width="1.0" height="1.2" fill="#0f1111"/><rect x="30.8" y="1166.4" width="1.0" height="1.2" fill="#0f1111"/><rect x="9.0" y="1164.7" width="2.0" height="1.2" fill="#0f1111"/><rect x="36.0" y="1160.8" width="2.0" height="1.2" fill="#0f1111"/><rect x="12.8" y="1163.3" width="1.0" height="1.2" fill="#0f1111"/><rect x="12.2" y="1157.3" width="1.0" height="1.2" fill="#0f1111"/><rect x="52.9" y="1161.3" width="1.0" height="1.2" fill="#0f1111"/><rect x="60.2" y="1136.1" width="1.0" height="1.2" fill="#0f1111"/><rect x="57.4" y="1141.4" width="1.0" height="1.2" fill="#0f1111"/><rect x="68.1" y="1129.3" width="1.0" height="1.2" fill="#0f1111"/><rect x="61.7" y="1125.8" width="2.0" height="1.2" fill="#0f1111"/><rect x="45.3" y="1139.6" width="1.0" height="1.2" fill="#0f1111"/><rect x="21.2" y="1134.7" width="1.0" height="1.2" fill="#0f1111"/><rect x="70.0" y="1128.2" width="2.0" height="1.2" fill="#0f1111"/><rect x="54.2" y="1142.2" width="2.0" height="1.2" fill="#0f1111"/><rect x="8.9" y="1137.5" width="2.0" height="1.2" fill="#0f1111"/><rect x="14.1" y="1155.8" width="2.0" height="1.2" fill="#0f1111"/><rect x="55.4" y="1158.1" width="1.0" height="1.2" fill="#0f1111"/><rect x="67.3" y="1158.7" width="1.0" height="1.2" fill="#0f1111"/><rect x="32.0" y="1146.0" width="1.0" height="1.2" fill="#0f1111"/><rect x="28.0" y="1132.2" width="1.0" height="1.2" fill="#0f1111"/><rect x="42.5" y="1146.9" width="2.0" height="1.2" fill="#0f1111"/><rect x="74.2" y="1136.7" width="1.0" height="1.2" fill="#0f1111"/><rect x="27.1" y="1126.9" width="1.0" height="1.2" fill="#0f1111"/><rect x="5.3" y="1124.1" width="2.0" height="1.2" fill="#0f1111"/><rect x="53.4" y="1149.4" width="1.0" height="1.2" fill="#0f1111"/><rect x="17.1" y="1156.1" width="2.0" height="1.2" fill="#0f1111"/><rect x="63.1" y="1160.9" width="1.0" height="1.2" fill="#0f1111"/><rect x="17.8" y="1161.4" width="1.0" height="1.2" fill="#0f1111"/><rect x="40.0" y="1163.5" width="1.0" height="1.2" fill="#0f1111"/><rect x="59.4" y="1160.1" width="2.0" height="1.2" fill="#0f1111"/><rect x="30.5" y="1136.6" width="2.0" height="1.2" fill="#0f1111"/><rect x="56.3" y="1155.0" width="2.0" height="1.2" fill="#0f1111"/><rect x="71.7" y="1155.3" width="2.0" height="1.2" fill="#0f1111"/><rect x="48.4" y="1146.4" width="2.0" height="1.2" fill="#0f1111"/><rect x="17.0" y="1133.9" width="1.0" height="1.2" fill="#0f1111"/><rect x="28.8" y="1149.0" width="1.0" height="1.2" fill="#0f1111"/><rect x="28.8" y="1154.8" width="1.0" height="1.2" fill="#0f1111"/><rect x="9.7" y="1166.0" width="1.0" height="1.2" fill="#0f1111"/><rect x="0.3" y="1151.7" width="1.0" height="1.2" fill="#0f1111"/><rect x="35.7" y="1146.1" width="1.0" height="1.2" fill="#0f1111"/><rect x="47.2" y="1150.2" width="1.0" height="1.2" fill="#0f1111"/><rect x="3.2" y="1160.4" width="1.0" height="1.2" fill="#0f1111"/><rect x="38.7" y="1136.9" width="1.0" height="1.2" fill="#0f1111"/><rect x="77.2" y="1147.4" width="1.0" height="1.2" fill="#0f1111"/><rect x="17.4" y="1158.9" width="1.0" height="1.2" fill="#0f1111"/><rect x="22.5" y="1166.9" width="2.0" height="1.2" fill="#0f1111"/><rect x="43.0" y="1125.3" width="1.0" height="1.2" fill="#0f1111"/><rect x="2.3" y="1146.2" width="1.0" height="1.2" fill="#0f1111"/><rect x="30.0" y="1166.0" width="1.0" height="1.2" fill="#0f1111"/><rect x="58.0" y="1149.7" width="1.0" height="1.2" fill="#0f1111"/><rect x="31.2" y="1166.0" width="1.0" height="1.2" fill="#0f1111"/><rect x="18.1" y="1162.2" width="1.0" height="1.2" fill="#0f1111"/><rect x="64.3" y="1166.3" width="1.0" height="1.2" fill="#0f1111"/><rect x="52.6" y="1135.1" width="2.0" height="1.2" fill="#0f1111"/><rect x="38.2" y="1129.9" width="1.0" height="1.2" fill="#0f1111"/><rect x="77.5" y="1162.7" width="2.0" height="1.2" fill="#0f1111"/><rect x="36.4" y="1139.0" width="1.0" height="1.2" fill="#0f1111"/><rect x="9.0" y="1131.3" width="1.0" height="1.2" fill="#0f1111"/><rect x="6.1" y="1163.5" width="1.0" height="1.2" fill="#0f1111"/><rect x="35.1" y="1132.7" width="2.0" height="1.2" fill="#0f1111"/><rect x="59.4" y="1158.0" width="1.0" height="1.2" fill="#0f1111"/><rect x="44.8" y="1154.9" width="1.0" height="1.2" fill="#0f1111"/><rect x="59.8" y="1165.7" width="2.0" height="1.2" fill="#0f1111"/><rect x="57.8" y="1155.7" width="1.0" height="1.2" fill="#0f1111"/><rect x="28.3" y="1142.4" width="2.0" height="1.2" fill="#0f1111"/><rect x="57.8" y="1151.7" width="1.0" height="1.2" fill="#0f1111"/><rect x="44.6" y="1151.6" width="2.0" height="1.2" fill="#0f1111"/><rect x="50.6" y="1167.6" width="1.0" height="1.2" fill="#0f1111"/><rect x="8.4" y="1156.5" width="2.0" height="1.2" fill="#0f1111"/><rect x="28.4" y="1163.6" width="2.0" height="1.2" fill="#0f1111"/><rect x="36.4" y="1128.5" width="1.0" height="1.2" fill="#0f1111"/><rect x="68.7" y="1140.0" width="1.0" height="1.2" fill="#0f1111"/><rect x="38.9" y="1127.6" width="1.0" height="1.2" fill="#0f1111"/><rect x="63.6" y="1145.0" width="1.0" height="1.2" fill="#0f1111"/><rect x="68.0" y="1147.2" width="1.0" height="1.2" fill="#0f1111"/><rect x="40.6" y="1133.2" width="1.0" height="1.2" fill="#0f1111"/><rect x="52.5" y="1165.3" width="1.0" height="1.2" fill="#0f1111"/><rect x="56.8" y="1165.6" width="2.0" height="1.2" fill="#0f1111"/><rect x="34.9" y="1156.2" width="1.0" height="1.2" fill="#0f1111"/><rect x="12.9" y="1163.4" width="1.0" height="1.2" fill="#0f1111"/><rect x="10.7" y="1124.6" width="1.0" height="1.2" fill="#0f1111"/><rect x="58.2" y="1147.4" width="1.0" height="1.2" fill="#0f1111"/><rect x="0.7" y="1160.5" width="1.0" height="1.2" fill="#0f1111"/><rect x="37.1" y="1125.9" width="2.0" height="1.2" fill="#0f1111"/><rect x="42.7" y="1127.1" width="1.0" height="1.2" fill="#0f1111"/><rect x="27.1" y="1148.6" width="1.0" height="1.2" fill="#0f1111"/><rect x="38.8" y="1152.1" width="1.0" height="1.2" fill="#0f1111"/><rect x="0.6" y="1133.0" width="1.0" height="1.2" fill="#0f1111"/><rect x="30.6" y="1128.6" width="2.0" height="1.2" fill="#0f1111"/><rect x="70.2" y="1165.6" width="1.0" height="1.2" fill="#0f1111"/><rect x="36.5" y="1149.8" width="2.0" height="1.2" fill="#0f1111"/><rect x="54.8" y="1164.2" width="1.0" height="1.2" fill="#0f1111"/><rect x="45.6" y="1155.6" width="1.0" height="1.2" fill="#0f1111"/><rect x="13.5" y="1152.7" width="2.0" height="1.2" fill="#0f1111"/><rect x="79.2" y="1155.5" width="1.0" height="1.2" fill="#0f1111"/><rect x="55.4" y="1144.8" width="1.0" height="1.2" fill="#0f1111"/><rect x="9.5" y="1145.9" width="1.0" height="1.2" fill="#0f1111"/><rect x="5.0" y="1134.5" width="1.0" height="1.2" fill="#0f1111"/><rect x="0.4" y="1148.9" width="2.0" height="1.2" fill="#0f1111"/><rect x="65.9" y="1151.9" width="2.0" height="1.2" fill="#0f1111"/><rect x="51.8" y="1134.7" width="1.0" height="1.2" fill="#0f1111"/><rect x="64.2" y="1125.7" width="1.0" height="1.2" fill="#0f1111"/><rect x="32.2" y="1165.4" width="1.0" height="1.2" fill="#0f1111"/><rect x="62.0" y="1125.9" width="2.0" height="1.2" fill="#0f1111"/><rect x="51.1" y="1164.4" width="1.0" height="1.2" fill="#0f1111"/><rect x="3.3" y="1144.6" width="1.0" height="1.2" fill="#0f1111"/><rect x="60.6" y="1128.6" width="2.0" height="1.2" fill="#0f1111"/><rect x="7.7" y="1130.3" width="2.0" height="1.2" fill="#0f1111"/><rect x="13.0" y="1146.5" width="1.0" height="1.2" fill="#0f1111"/><rect x="40.8" y="1166.1" width="1.0" height="1.2" fill="#0f1111"/><rect x="73.3" y="1124.1" width="1.0" height="1.2" fill="#0f1111"/><rect x="44.5" y="1160.1" width="2.0" height="1.2" fill="#0f1111"/><rect x="44.9" y="1151.0" width="2.0" height="1.2" fill="#0f1111"/><rect x="6.2" y="1126.4" width="2.0" height="1.2" fill="#0f1111"/><rect x="49.2" y="1144.1" width="2.0" height="1.2" fill="#0f1111"/><rect x="0.6" y="1156.8" width="1.0" height="1.2" fill="#0f1111"/><rect x="15.0" y="1146.3" width="1.0" height="1.2" fill="#0f1111"/><rect x="16.7" y="1155.2" width="2.0" height="1.2" fill="#0f1111"/><rect x="16.6" y="1142.9" width="1.0" height="1.2" fill="#0f1111"/><rect x="49.0" y="1127.8" width="2.0" height="1.2" fill="#0f1111"/><rect x="28.2" y="1128.1" width="2.0" height="1.2" fill="#0f1111"/><rect x="19.1" y="1162.8" width="1.0" height="1.2" fill="#0f1111"/><rect x="7.2" y="1136.1" width="1.0" height="1.2" fill="#0f1111"/><rect x="61.0" y="1130.5" width="2.0" height="1.2" fill="#0f1111"/><rect x="46.1" y="1138.7" width="1.0" height="1.2" fill="#0f1111"/><rect x="0.6" y="1127.3" width="1.0" height="1.2" fill="#0f1111"/><rect x="54.6" y="1157.8" width="1.0" height="1.2" fill="#0f1111"/><rect x="41.6" y="1144.0" width="1.0" height="1.2" fill="#0f1111"/><rect x="73.9" y="1149.3" width="1.0" height="1.2" fill="#0f1111"/><rect x="73.3" y="1156.2" width="1.0" height="1.2" fill="#0f1111"/><rect x="73.0" y="1160.8" width="2.0" height="1.2" fill="#0f1111"/><rect x="58.3" y="1153.5" width="1.0" height="1.2" fill="#0f1111"/><rect x="68.0" y="1143.0" width="1.0" height="1.2" fill="#0f1111"/><rect x="14.4" y="1165.5" width="1.0" height="1.2" fill="#0f1111"/><rect x="20.4" y="1129.9" width="1.0" height="1.2" fill="#0f1111"/><rect x="67.7" y="1125.2" width="1.0" height="1.2" fill="#0f1111"/><rect x="7.6" y="1143.5" width="2.0" height="1.2" fill="#0f1111"/><rect x="52.5" y="1144.8" width="2.0" height="1.2" fill="#0f1111"/><rect x="66.9" y="1167.7" width="1.0" height="1.2" fill="#0f1111"/><rect x="21.9" y="1135.0" width="1.0" height="1.2" fill="#0f1111"/><rect x="43.0" y="1139.0" width="2.0" height="1.2" fill="#0f1111"/><rect x="70.9" y="1164.5" width="1.0" height="1.2" fill="#0f1111"/><rect x="0.1" y="1157.9" width="1.0" height="1.2" fill="#0f1111"/><rect x="71.2" y="1159.0" width="2.0" height="1.2" fill="#0f1111"/><rect x="12.9" y="1125.6" width="1.0" height="1.2" fill="#0f1111"/><rect x="34.0" y="1138.8" width="1.0" height="1.2" fill="#0f1111"/><rect x="43.0" y="1166.5" width="1.0" height="1.2" fill="#0f1111"/><rect x="16.9" y="1126.3" width="2.0" height="1.2" fill="#0f1111"/><rect x="43.1" y="1165.3" width="1.0" height="1.2" fill="#0f1111"/><rect x="74.5" y="1146.8" width="2.0" height="1.2" fill="#0f1111"/><rect x="7.2" y="1133.3" width="1.0" height="1.2" fill="#0f1111"/><rect x="60.4" y="1163.0" width="2.0" height="1.2" fill="#0f1111"/><rect x="20.8" y="1155.5" width="1.0" height="1.2" fill="#0f1111"/><rect x="48.8" y="1151.0" width="1.0" height="1.2" fill="#0f1111"/><rect x="55.3" y="1156.8" width="1.0" height="1.2" fill="#0f1111"/><rect x="19.9" y="1135.3" width="1.0" height="1.2" fill="#0f1111"/><rect x="7.3" y="1162.1" width="2.0" height="1.2" fill="#0f1111"/><rect x="20.8" y="1166.4" width="2.0" height="1.2" fill="#0f1111"/><rect x="59.2" y="1130.2" width="1.0" height="1.2" fill="#0f1111"/><rect x="47.8" y="1154.6" width="1.0" height="1.2" fill="#0f1111"/><rect x="6.2" y="1156.1" width="2.0" height="1.2" fill="#0f1111"/><rect x="1.2" y="1139.9" width="1.0" height="1.2" fill="#0f1111"/><rect x="44.6" y="1155.8" width="2.0" height="1.2" fill="#0f1111"/><rect x="77.6" y="1154.3" width="1.0" height="1.2" fill="#0f1111"/><rect x="73.7" y="1143.8" width="1.0" height="1.2" fill="#0f1111"/><rect x="20.4" y="1141.4" width="2.0" height="1.2" fill="#0f1111"/><rect x="55.2" y="1143.6" width="2.0" height="1.2" fill="#0f1111"/><rect x="70.2" y="1161.9" width="1.0" height="1.2" fill="#0f1111"/><rect x="27.4" y="1160.6" width="1.0" height="1.2" fill="#0f1111"/><rect x="31.0" y="1158.5" width="1.0" height="1.2" fill="#0f1111"/><rect x="68.4" y="1159.3" width="2.0" height="1.2" fill="#0f1111"/><rect x="26.8" y="1151.5" width="1.0" height="1.2" fill="#0f1111"/><rect x="5.8" y="1127.9" width="2.0" height="1.2" fill="#0f1111"/><rect x="52.9" y="1137.7" width="1.0" height="1.2" fill="#0f1111"/><rect x="14.4" y="1130.3" width="1.0" height="1.2" fill="#0f1111"/><rect x="66.9" y="1126.5" width="1.0" height="1.2" fill="#0f1111"/><rect x="52.2" y="1149.1" width="1.0" height="1.2" fill="#0f1111"/><rect x="5.0" y="1137.0" width="1.0" height="1.2" fill="#0f1111"/><rect x="68.2" y="1129.7" width="1.0" height="1.2" fill="#0f1111"/><rect x="29.1" y="1155.8" width="1.0" height="1.2" fill="#0f1111"/><rect x="29.6" y="1156.4" width="1.0" height="1.2" fill="#0f1111"/><rect x="29.3" y="1147.0" width="1.0" height="1.2" fill="#0f1111"/><rect x="69.8" y="1164.0" width="1.0" height="1.2" fill="#0f1111"/><rect x="22.8" y="1140.8" width="1.0" height="1.2" fill="#0f1111"/><rect x="17.9" y="1132.5" width="1.0" height="1.2" fill="#0f1111"/><rect x="61.0" y="1161.5" width="1.0" height="1.2" fill="#0f1111"/><rect x="51.3" y="1144.8" width="1.0" height="1.2" fill="#0f1111"/><rect x="4.0" y="1153.2" width="1.0" height="1.2" fill="#0f1111"/><rect x="18.8" y="1125.3" width="1.0" height="1.2" fill="#0f1111"/><rect x="39.0" y="1128.8" width="2.0" height="1.2" fill="#0f1111"/><rect x="56.9" y="1128.1" width="1.0" height="1.2" fill="#0f1111"/><rect x="38.8" y="1164.6" width="1.0" height="1.2" fill="#0f1111"/><rect x="34.1" y="1126.7" width="1.0" height="1.2" fill="#0f1111"/><rect x="5.4" y="1139.9" width="1.0" height="1.2" fill="#0f1111"/><rect x="19.1" y="1138.9" width="1.0" height="1.2" fill="#0f1111"/><rect x="5.7" y="1133.8" width="2.0" height="1.2" fill="#0f1111"/><rect x="17.3" y="1150.9" width="1.0" height="1.2" fill="#0f1111"/><rect x="8.8" y="1165.5" width="2.0" height="1.2" fill="#0f1111"/><rect x="4.5" y="1146.9" width="2.0" height="1.2" fill="#0f1111"/><rect x="69.2" y="1133.3" width="1.0" height="1.2" fill="#0f1111"/><rect x="38.2" y="1144.6" width="1.0" height="1.2" fill="#0f1111"/><rect x="62.8" y="1129.8" width="1.0" height="1.2" fill="#0f1111"/><rect x="50.5" y="1128.3" width="1.0" height="1.2" fill="#0f1111"/><rect x="53.0" y="1139.9" width="1.0" height="1.2" fill="#0f1111"/><rect x="56.3" y="1144.9" width="1.0" height="1.2" fill="#0f1111"/><rect x="14.4" y="1124.5" width="2.0" height="1.2" fill="#0f1111"/><rect x="64.9" y="1163.7" width="2.0" height="1.2" fill="#0f1111"/><rect x="37.6" y="1156.6" width="2.0" height="1.2" fill="#0f1111"/><rect x="51.9" y="1158.0" width="2.0" height="1.2" fill="#0f1111"/><rect x="48.4" y="1152.6" width="1.0" height="1.2" fill="#0f1111"/><rect x="31.0" y="1163.0" width="1.0" height="1.2" fill="#0f1111"/><rect x="59.2" y="1161.7" width="1.0" height="1.2" fill="#0f1111"/><rect x="52.5" y="1152.6" width="2.0" height="1.2" fill="#0f1111"/><rect x="18.2" y="1150.3" width="2.0" height="1.2" fill="#0f1111"/><rect x="6.6" y="1133.5" width="1.0" height="1.2" fill="#0f1111"/><rect x="22.8" y="1166.9" width="1.0" height="1.2" fill="#0f1111"/><rect x="24.4" y="1137.8" width="1.0" height="1.2" fill="#0f1111"/><rect x="75.2" y="1141.7" width="2.0" height="1.2" fill="#0f1111"/><rect x="13.2" y="1139.8" width="1.0" height="1.2" fill="#0f1111"/><rect x="18.6" y="1145.0" width="2.0" height="1.2" fill="#0f1111"/><rect x="68.3" y="1156.7" width="2.0" height="1.2" fill="#0f1111"/><rect x="79.3" y="1151.3" width="1.0" height="1.2" fill="#0f1111"/><rect x="15.4" y="1144.7" width="1.0" height="1.2" fill="#0f1111"/><rect x="80.0" y="1144.1" width="1.0" height="1.2" fill="#0f1111"/><rect x="78.0" y="1157.3" width="1.0" height="1.2" fill="#0f1111"/><rect x="32.6" y="1139.1" width="2.0" height="1.2" fill="#0f1111"/><rect x="56.7" y="1149.0" width="1.0" height="1.2" fill="#0f1111"/><rect x="19.1" y="1160.8" width="1.0" height="1.2" fill="#0f1111"/><rect x="48.6" y="1135.3" width="1.0" height="1.2" fill="#0f1111"/><rect x="38.0" y="1148.1" width="1.0" height="1.2" fill="#0f1111"/><rect x="11.0" y="1134.6" width="1.0" height="1.2" fill="#0f1111"/><rect x="21.9" y="1142.3" width="1.0" height="1.2" fill="#0f1111"/><rect x="79.9" y="1130.0" width="1.0" height="1.2" fill="#0f1111"/><rect x="70.9" y="1126.5" width="1.0" height="1.2" fill="#0f1111"/><rect x="33.8" y="1127.5" width="1.0" height="1.2" fill="#0f1111"/><rect x="63.2" y="1135.1" width="2.0" height="1.2" fill="#0f1111"/><rect x="52.9" y="1161.8" width="2.0" height="1.2" fill="#0f1111"/><rect x="21.5" y="1165.4" width="1.0" height="1.2" fill="#0f1111"/><rect x="7.6" y="1143.2" width="1.0" height="1.2" fill="#0f1111"/><rect x="77.4" y="1163.8" width="1.0" height="1.2" fill="#0f1111"/><rect x="23.1" y="1166.5" width="1.0" height="1.2" fill="#0f1111"/><rect x="33.6" y="1147.3" width="1.0" height="1.2" fill="#0f1111"/><rect x="64.6" y="1152.8" width="2.0" height="1.2" fill="#0f1111"/><rect x="46.6" y="1143.6" width="1.0" height="1.2" fill="#0f1111"/><rect x="52.6" y="1149.8" width="1.0" height="1.2" fill="#0f1111"/><rect x="71.9" y="1166.3" width="1.0" height="1.2" fill="#0f1111"/><rect x="34.9" y="1150.1" width="1.0" height="1.2" fill="#0f1111"/><rect x="45.6" y="1132.0" width="2.0" height="1.2" fill="#0f1111"/><rect x="76.5" y="1152.3" width="1.0" height="1.2" fill="#0f1111"/><rect x="29.3" y="1147.1" width="2.0" height="1.2" fill="#0f1111"/><rect x="65.8" y="1154.8" width="1.0" height="1.2" fill="#0f1111"/><rect x="49.9" y="1144.8" width="2.0" height="1.2" fill="#0f1111"/><rect x="26.2" y="1164.5" width="1.0" height="1.2" fill="#0f1111"/><rect x="38.0" y="1153.8" width="2.0" height="1.2" fill="#0f1111"/><rect x="76.5" y="1163.1" width="1.0" height="1.2" fill="#0f1111"/><rect x="76.7" y="1158.6" width="1.0" height="1.2" fill="#0f1111"/><rect x="78.3" y="1127.9" width="1.0" height="1.2" fill="#0f1111"/><rect x="43.4" y="1141.6" width="1.0" height="1.2" fill="#0f1111"/><rect x="72.0" y="1134.2" width="2.0" height="1.2" fill="#0f1111"/><rect x="56.7" y="1140.7" width="1.0" height="1.2" fill="#0f1111"/><rect x="61.4" y="1129.6" width="1.0" height="1.2" fill="#0f1111"/><rect x="51.2" y="1162.7" width="1.0" height="1.2" fill="#0f1111"/><rect x="2.9" y="1130.0" width="1.0" height="1.2" fill="#0f1111"/><rect x="49.3" y="1152.4" width="1.0" height="1.2" fill="#0f1111"/><rect x="46.6" y="1165.5" width="2.0" height="1.2" fill="#0f1111"/><rect x="43.4" y="1139.2" width="1.0" height="1.2" fill="#0f1111"/><rect x="25.2" y="1159.7" width="2.0" height="1.2" fill="#0f1111"/><rect x="1.4" y="1153.7" width="1.0" height="1.2" fill="#0f1111"/><rect x="31.5" y="1129.2" width="2.0" height="1.2" fill="#0f1111"/><rect x="61.3" y="1160.8" width="2.0" height="1.2" fill="#0f1111"/><rect x="16.3" y="1134.9" width="2.0" height="1.2" fill="#0f1111"/><rect x="77.3" y="1132.6" width="1.0" height="1.2" fill="#0f1111"/><rect x="51.9" y="1131.2" width="1.0" height="1.2" fill="#0f1111"/><rect x="48.1" y="1161.4" width="2.0" height="1.2" fill="#0f1111"/><rect x="3.7" y="1163.5" width="2.0" height="1.2" fill="#0f1111"/><rect x="42.8" y="1155.9" width="1.0" height="1.2" fill="#0f1111"/><rect x="2.3" y="1159.1" width="1.0" height="1.2" fill="#0f1111"/><rect x="6.9" y="1135.0" width="1.0" height="1.2" fill="#0f1111"/><rect x="18.4" y="1135.7" width="2.0" height="1.2" fill="#0f1111"/><rect x="62.8" y="1134.4" width="1.0" height="1.2" fill="#0f1111"/><rect x="9.1" y="1165.1" width="1.0" height="1.2" fill="#0f1111"/><rect x="11.9" y="1138.8" width="2.0" height="1.2" fill="#0f1111"/><rect x="27.9" y="1136.8" width="2.0" height="1.2" fill="#0f1111"/><rect x="38.3" y="1135.4" width="1.0" height="1.2" fill="#0f1111"/><rect x="74.2" y="1135.6" width="1.0" height="1.2" fill="#0f1111"/><rect x="7.3" y="1151.5" width="2.0" height="1.2" fill="#0f1111"/><rect x="77.9" y="1129.8" width="2.0" height="1.2" fill="#0f1111"/><rect x="26.3" y="1146.1" width="1.0" height="1.2" fill="#0f1111"/><rect x="15.1" y="1164.9" width="2.0" height="1.2" fill="#0f1111"/><rect x="64.4" y="1157.1" width="2.0" height="1.2" fill="#0f1111"/><rect x="33.8" y="1137.0" width="1.0" height="1.2" fill="#0f1111"/><rect x="18.4" y="1159.1" width="1.0" height="1.2" fill="#0f1111"/><rect x="7.5" y="1149.8" width="1.0" height="1.2" fill="#0f1111"/><rect x="63.5" y="1143.9" width="1.0" height="1.2" fill="#0f1111"/><rect x="63.3" y="1134.2" width="1.0" height="1.2" fill="#0f1111"/><rect x="66.0" y="1144.8" width="1.0" height="1.2" fill="#0f1111"/><rect x="11.1" y="1132.5" width="2.0" height="1.2" fill="#0f1111"/><rect x="17.3" y="1161.0" width="1.0" height="1.2" fill="#0f1111"/><rect x="19.3" y="1135.4" width="1.0" height="1.2" fill="#0f1111"/><rect x="41.7" y="1138.6" width="1.0" height="1.2" fill="#0f1111"/><rect x="2.5" y="1155.9" width="1.0" height="1.2" fill="#0f1111"/><rect x="41.0" y="1133.3" width="2.0" height="1.2" fill="#0f1111"/><rect x="55.3" y="1151.0" width="1.0" height="1.2" fill="#0f1111"/><rect x="16.4" y="1137.7" width="2.0" height="1.2" fill="#0f1111"/><rect x="71.9" y="1129.8" width="1.0" height="1.2" fill="#0f1111"/><rect x="18.1" y="1157.9" width="2.0" height="1.2" fill="#0f1111"/><rect x="57.3" y="1166.2" width="1.0" height="1.2" fill="#0f1111"/><rect x="31.7" y="1147.0" width="1.0" height="1.2" fill="#0f1111"/><rect x="4.5" y="1150.8" width="1.0" height="1.2" fill="#0f1111"/><rect x="23.5" y="1138.3" width="1.0" height="1.2" fill="#0f1111"/><rect x="12.1" y="1165.0" width="1.0" height="1.2" fill="#0f1111"/><rect x="36.9" y="1132.7" width="1.0" height="1.2" fill="#0f1111"/><rect x="62.8" y="1155.6" width="1.0" height="1.2" fill="#0f1111"/><rect x="54.9" y="1145.0" width="1.0" height="1.2" fill="#0f1111"/><rect x="62.0" y="1128.7" width="1.0" height="1.2" fill="#0f1111"/><rect x="49.9" y="1143.2" width="1.0" height="1.2" fill="#0f1111"/><rect x="20.2" y="1153.4" width="1.0" height="1.2" fill="#0f1111"/><rect x="36.0" y="1161.5" width="2.0" height="1.2" fill="#0f1111"/><rect x="33.5" y="1155.0" width="2.0" height="1.2" fill="#0f1111"/><rect x="35.7" y="1164.8" width="1.0" height="1.2" fill="#0f1111"/><rect x="49.5" y="1128.6" width="1.0" height="1.2" fill="#0f1111"/><rect x="7.0" y="1164.6" width="1.0" height="1.2" fill="#0f1111"/><rect x="3.0" y="1167.2" width="2.0" height="1.2" fill="#0f1111"/><rect x="10.3" y="1144.5" width="2.0" height="1.2" fill="#0f1111"/><rect x="2.8" y="1152.9" width="2.0" height="1.2" fill="#0f1111"/><rect x="61.7" y="1143.2" width="1.0" height="1.2" fill="#0f1111"/><rect x="11.6" y="1154.7" width="2.0" height="1.2" fill="#0f1111"/><rect x="77.1" y="1126.3" width="1.0" height="1.2" fill="#0f1111"/><rect x="72.8" y="1153.5" width="2.0" height="1.2" fill="#0f1111"/><rect x="8.5" y="1127.1" width="1.0" height="1.2" fill="#0f1111"/><rect x="65.5" y="1150.6" width="1.0" height="1.2" fill="#0f1111"/><rect x="13.5" y="1131.6" width="1.0" height="1.2" fill="#0f1111"/><rect x="56.6" y="1139.9" width="1.0" height="1.2" fill="#0f1111"/><rect x="36.6" y="1148.3" width="1.0" height="1.2" fill="#0f1111"/><rect x="20.8" y="1156.6" width="2.0" height="1.2" fill="#0f1111"/><rect x="72.3" y="1144.8" width="1.0" height="1.2" fill="#0f1111"/><rect x="48.3" y="1136.7" width="1.0" height="1.2" fill="#0f1111"/><rect x="31.5" y="1132.9" width="1.0" height="1.2" fill="#0f1111"/><rect x="59.9" y="1164.3" width="1.0" height="1.2" fill="#0f1111"/><rect x="8.6" y="1159.8" width="1.0" height="1.2" fill="#0f1111"/><rect x="64.2" y="1125.2" width="2.0" height="1.2" fill="#0f1111"/><rect x="37.5" y="1167.6" width="1.0" height="1.2" fill="#0f1111"/><rect x="78.1" y="1151.1" width="1.0" height="1.2" fill="#0f1111"/><rect x="13.8" y="1156.8" width="1.0" height="1.2" fill="#0f1111"/><rect x="54.6" y="1153.0" width="1.0" height="1.2" fill="#0f1111"/><rect x="65.7" y="1162.0" width="2.0" height="1.2" fill="#0f1111"/><rect x="27.5" y="1158.6" width="1.0" height="1.2" fill="#0f1111"/><rect x="48.5" y="1163.6" width="1.0" height="1.2" fill="#0f1111"/><rect x="18.2" y="1138.0" width="1.0" height="1.2" fill="#0f1111"/><rect x="76.0" y="1137.3" width="2.0" height="1.2" fill="#0f1111"/><rect x="28.2" y="1140.6" width="1.0" height="1.2" fill="#0f1111"/><rect x="75.4" y="1124.6" width="2.0" height="1.2" fill="#0f1111"/><rect x="32.8" y="1152.0" width="2.0" height="1.2" fill="#0f1111"/><rect x="60.4" y="1134.8" width="2.0" height="1.2" fill="#0f1111"/><rect x="64.3" y="1167.6" width="2.0" height="1.2" fill="#0f1111"/><rect x="13.7" y="1130.6" width="1.0" height="1.2" fill="#0f1111"/><rect x="20.3" y="1152.9" width="1.0" height="1.2" fill="#0f1111"/><rect x="35.0" y="1137.5" width="1.0" height="1.2" fill="#0f1111"/><rect x="43.1" y="1138.8" width="1.0" height="1.2" fill="#0f1111"/><rect x="27.6" y="1161.1" width="1.0" height="1.2" fill="#0f1111"/><rect x="70.3" y="1130.1" width="2.0" height="1.2" fill="#0f1111"/><rect x="69.9" y="1147.9" width="1.0" height="1.2" fill="#0f1111"/><rect x="63.5" y="1161.1" width="1.0" height="1.2" fill="#0f1111"/><rect x="75.7" y="1144.7" width="1.0" height="1.2" fill="#0f1111"/><rect x="62.6" y="1162.3" width="1.0" height="1.2" fill="#0f1111"/><rect x="58.4" y="1139.9" width="1.0" height="1.2" fill="#0f1111"/><rect x="8.0" y="1138.4" width="1.0" height="1.2" fill="#0f1111"/><rect x="72.2" y="1125.1" width="1.0" height="1.2" fill="#0f1111"/><rect x="5.7" y="1127.0" width="2.0" height="1.2" fill="#0f1111"/><rect x="4.2" y="1161.8" width="2.0" height="1.2" fill="#0f1111"/><rect x="32.1" y="1159.3" width="1.0" height="1.2" fill="#0f1111"/><rect x="24.8" y="1151.8" width="2.0" height="1.2" fill="#0f1111"/><rect x="37.6" y="1163.6" width="2.0" height="1.2" fill="#0f1111"/><rect x="67.1" y="1156.5" width="1.0" height="1.2" fill="#0f1111"/><rect x="45.9" y="1128.7" width="2.0" height="1.2" fill="#0f1111"/><rect x="79.8" y="1163.4" width="1.0" height="1.2" fill="#0f1111"/><rect x="38.7" y="1142.3" width="2.0" height="1.2" fill="#0f1111"/><rect x="18.2" y="1133.2" width="2.0" height="1.2" fill="#0f1111"/><rect x="29.1" y="1166.2" width="2.0" height="1.2" fill="#0f1111"/><rect x="69.1" y="1152.8" width="2.0" height="1.2" fill="#0f1111"/><rect x="2.8" y="1150.0" width="1.0" height="1.2" fill="#0f1111"/><rect x="1.9" y="1129.8" width="1.0" height="1.2" fill="#0f1111"/><rect x="14.7" y="1136.8" width="2.0" height="1.2" fill="#0f1111"/><rect x="63.1" y="1139.7" width="1.0" height="1.2" fill="#0f1111"/><rect x="63.5" y="1150.6" width="1.0" height="1.2" fill="#0f1111"/><rect x="17.5" y="1162.9" width="2.0" height="1.2" fill="#0f1111"/><rect x="34.7" y="1140.7" width="2.0" height="1.2" fill="#0f1111"/><rect x="6.2" y="1142.3" width="1.0" height="1.2" fill="#0f1111"/><rect x="24.1" y="1138.5" width="2.0" height="1.2" fill="#0f1111"/><rect x="77.8" y="1145.6" width="2.0" height="1.2" fill="#0f1111"/><rect x="0.9" y="1162.3" width="2.0" height="1.2" fill="#0f1111"/><rect x="76.5" y="1168.0" width="2.0" height="1.2" fill="#0f1111"/><rect x="72.0" y="1131.2" width="1.0" height="1.2" fill="#0f1111"/><rect x="72.8" y="1148.3" width="1.0" height="1.2" fill="#0f1111"/><rect x="69.5" y="1139.9" width="1.0" height="1.2" fill="#0f1111"/><rect x="16.6" y="1125.0" width="2.0" height="1.2" fill="#0f1111"/><rect x="68.1" y="1155.4" width="2.0" height="1.2" fill="#0f1111"/><rect x="76.4" y="1146.5" width="1.0" height="1.2" fill="#0f1111"/><rect x="44.8" y="1130.3" width="2.0" height="1.2" fill="#0f1111"/><rect x="35.1" y="1125.3" width="1.0" height="1.2" fill="#0f1111"/><rect x="48.2" y="1135.4" width="1.0" height="1.2" fill="#0f1111"/><rect x="18.7" y="1133.5" width="2.0" height="1.2" fill="#0f1111"/><rect x="37.5" y="1128.1" width="1.0" height="1.2" fill="#0f1111"/><rect x="64.2" y="1163.7" width="1.0" height="1.2" fill="#0f1111"/><rect x="59.9" y="1134.4" width="1.0" height="1.2" fill="#0f1111"/><rect x="18.6" y="1160.2" width="1.0" height="1.2" fill="#0f1111"/><rect x="48.2" y="1163.8" width="1.0" height="1.2" fill="#0f1111"/><rect x="78.1" y="1155.7" width="1.0" height="1.2" fill="#0f1111"/><rect x="59.9" y="1155.3" width="2.0" height="1.2" fill="#0f1111"/><rect x="17.3" y="1160.8" width="1.0" height="1.2" fill="#0f1111"/><rect x="74.0" y="1126.3" width="1.0" height="1.2" fill="#0f1111"/><rect x="35.4" y="1127.8" width="1.0" height="1.2" fill="#0f1111"/><rect x="71.8" y="1148.6" width="1.0" height="1.2" fill="#0f1111"/><rect x="11.4" y="1144.2" width="2.0" height="1.2" fill="#0f1111"/><rect x="17.3" y="1147.9" width="1.0" height="1.2" fill="#0f1111"/><rect x="61.3" y="1134.8" width="1.0" height="1.2" fill="#0f1111"/><rect x="18.2" y="1162.2" width="1.0" height="1.2" fill="#0f1111"/><rect x="49.5" y="1137.3" width="1.0" height="1.2" fill="#0f1111"/><rect x="50.8" y="1143.6" width="1.0" height="1.2" fill="#0f1111"/><rect x="15.4" y="1137.9" width="2.0" height="1.2" fill="#0f1111"/><rect x="23.7" y="1142.4" width="1.0" height="1.2" fill="#0f1111"/><rect x="61.5" y="1150.1" width="1.0" height="1.2" fill="#0f1111"/><rect x="75.6" y="1144.7" width="1.0" height="1.2" fill="#0f1111"/><rect x="37.7" y="1146.4" width="2.0" height="1.2" fill="#0f1111"/><rect x="13.5" y="1127.2" width="2.0" height="1.2" fill="#0f1111"/><rect x="30.7" y="1127.1" width="1.0" height="1.2" fill="#0f1111"/><rect x="28.3" y="1142.7" width="1.0" height="1.2" fill="#0f1111"/><rect x="56.4" y="1161.0" width="2.0" height="1.2" fill="#0f1111"/><rect x="12.2" y="1162.0" width="2.0" height="1.2" fill="#0f1111"/><rect x="43.8" y="1125.8" width="2.0" height="1.2" fill="#0f1111"/><rect x="38.1" y="1146.4" width="2.0" height="1.2" fill="#0f1111"/><rect x="73.6" y="1141.7" width="1.0" height="1.2" fill="#0f1111"/><rect x="49.6" y="1130.9" width="2.0" height="1.2" fill="#0f1111"/><rect x="53.0" y="1156.3" width="2.0" height="1.2" fill="#0f1111"/><rect x="11.6" y="1140.1" width="1.0" height="1.2" fill="#0f1111"/><rect x="63.3" y="1150.0" width="2.0" height="1.2" fill="#0f1111"/><rect x="17.6" y="1159.2" width="1.0" height="1.2" fill="#0f1111"/><rect x="44.0" y="1141.7" width="1.0" height="1.2" fill="#0f1111"/><rect x="22.9" y="1130.0" width="1.0" height="1.2" fill="#0f1111"/><rect x="49.3" y="1159.5" width="1.0" height="1.2" fill="#0f1111"/><rect x="39.7" y="1140.0" width="1.0" height="1.2" fill="#0f1111"/><rect x="28.0" y="1147.4" width="1.0" height="1.2" fill="#0f1111"/><rect x="51.1" y="1145.0" width="1.0" height="1.2" fill="#0f1111"/><rect x="20.4" y="1150.8" width="2.0" height="1.2" fill="#0f1111"/><rect x="62.9" y="1135.5" width="1.0" height="1.2" fill="#0f1111"/><rect x="64.0" y="1127.0" width="2.0" height="1.2" fill="#0f1111"/><rect x="43.1" y="1136.1" width="1.0" height="1.2" fill="#0f1111"/><rect x="23.0" y="1145.8" width="2.0" height="1.2" fill="#0f1111"/><rect x="30.2" y="1127.3" width="1.0" height="1.2" fill="#0f1111"/><rect x="4.8" y="1159.4" width="1.0" height="1.2" fill="#0f1111"/><rect x="24.9" y="1133.6" width="1.0" height="1.2" fill="#0f1111"/><rect x="21.1" y="1156.3" width="2.0" height="1.2" fill="#0f1111"/><rect x="72.6" y="1128.7" width="1.0" height="1.2" fill="#0f1111"/><rect x="44.1" y="1164.6" width="1.0" height="1.2" fill="#0f1111"/><rect x="61.8" y="1130.5" width="1.0" height="1.2" fill="#0f1111"/><rect x="3.2" y="1145.9" width="2.0" height="1.2" fill="#0f1111"/><rect x="30.9" y="1128.1" width="2.0" height="1.2" fill="#0f1111"/><rect x="60.3" y="1150.3" width="1.0" height="1.2" fill="#0f1111"/><rect x="3.0" y="1126.5" width="1.0" height="1.2" fill="#0f1111"/><rect x="3.1" y="1138.4" width="2.0" height="1.2" fill="#0f1111"/><rect x="50.4" y="1128.9" width="1.0" height="1.2" fill="#0f1111"/><rect x="8.6" y="1132.7" width="1.0" height="1.2" fill="#0f1111"/><rect x="53.8" y="1166.7" width="1.0" height="1.2" fill="#0f1111"/><rect x="9.7" y="1161.7" width="1.0" height="1.2" fill="#0f1111"/><rect x="31.3" y="1135.1" width="1.0" height="1.2" fill="#0f1111"/><rect x="38.6" y="1125.1" width="2.0" height="1.2" fill="#0f1111"/><rect x="56.5" y="1131.7" width="1.0" height="1.2" fill="#0f1111"/><rect x="71.4" y="1158.9" width="2.0" height="1.2" fill="#0f1111"/><rect x="59.0" y="1126.6" width="2.0" height="1.2" fill="#0f1111"/><rect x="49.8" y="1163.8" width="1.0" height="1.2" fill="#0f1111"/><rect x="43.8" y="1162.9" width="1.0" height="1.2" fill="#0f1111"/><rect x="36.1" y="1162.8" width="2.0" height="1.2" fill="#0f1111"/><rect x="50.7" y="1153.0" width="2.0" height="1.2" fill="#0f1111"/><rect x="75.5" y="1161.8" width="2.0" height="1.2" fill="#0f1111"/><rect x="41.3" y="1145.9" width="2.0" height="1.2" fill="#0f1111"/><rect x="30.7" y="1154.4" width="1.0" height="1.2" fill="#0f1111"/><rect x="40.0" y="1164.6" width="2.0" height="1.2" fill="#0f1111"/><rect x="41.2" y="1124.2" width="1.0" height="1.2" fill="#0f1111"/><rect x="33.1" y="1153.4" width="2.0" height="1.2" fill="#0f1111"/><rect x="30.4" y="1153.2" width="1.0" height="1.2" fill="#0f1111"/><rect x="76.8" y="1166.0" width="2.0" height="1.2" fill="#0f1111"/><rect x="12.9" y="1163.4" width="1.0" height="1.2" fill="#0f1111"/><rect x="21.5" y="1163.8" width="2.0" height="1.2" fill="#0f1111"/><rect x="63.1" y="1160.1" width="2.0" height="1.2" fill="#0f1111"/><rect x="55.0" y="1138.0" width="2.0" height="1.2" fill="#0f1111"/><rect x="21.0" y="1150.9" width="1.0" height="1.2" fill="#0f1111"/><rect x="45.9" y="1148.0" width="1.0" height="1.2" fill="#0f1111"/><rect x="68.7" y="1167.5" width="1.0" height="1.2" fill="#0f1111"/><rect x="74.4" y="1157.3" width="1.0" height="1.2" fill="#0f1111"/><rect x="34.2" y="1127.6" width="1.0" height="1.2" fill="#0f1111"/><rect x="72.6" y="1149.8" width="1.0" height="1.2" fill="#0f1111"/><rect x="56.4" y="1124.2" width="2.0" height="1.2" fill="#0f1111"/><rect x="62.2" y="1128.5" width="1.0" height="1.2" fill="#0f1111"/><rect x="70.1" y="1150.7" width="1.0" height="1.2" fill="#0f1111"/><rect x="35.3" y="1156.0" width="1.0" height="1.2" fill="#0f1111"/><rect x="6.5" y="1143.8" width="1.0" height="1.2" fill="#0f1111"/><rect x="7.8" y="1145.7" width="2.0" height="1.2" fill="#0f1111"/><rect x="23.9" y="1126.9" width="1.0" height="1.2" fill="#0f1111"/><rect x="22.2" y="1140.3" width="2.0" height="1.2" fill="#0f1111"/><rect x="75.4" y="1167.9" width="1.0" height="1.2" fill="#0f1111"/><rect x="61.5" y="1154.5" width="2.0" height="1.2" fill="#0f1111"/><rect x="60.7" y="1144.1" width="1.0" height="1.2" fill="#0f1111"/><rect x="32.1" y="1165.8" width="1.0" height="1.2" fill="#0f1111"/><rect x="76.7" y="1126.0" width="1.0" height="1.2" fill="#0f1111"/><rect x="64.9" y="1137.0" width="2.0" height="1.2" fill="#0f1111"/><rect x="79.1" y="1147.8" width="2.0" height="1.2" fill="#0f1111"/><rect x="75.0" y="1139.5" width="1.0" height="1.2" fill="#0f1111"/><rect x="68.6" y="1135.4" width="2.0" height="1.2" fill="#0f1111"/><rect x="0.0" y="1168.0" width="80.0" height="6.0" fill="#0f1111"/><rect x="0.0" y="1171.0" width="1.5" height="1.0" fill="#d09060"/><rect x="3.0" y="1171.0" width="1.5" height="1.0" fill="#d09060"/><rect x="6.0" y="1171.0" width="1.5" height="1.0" fill="#d09060"/><rect x="9.0" y="1171.0" width="1.5" height="1.0" fill="#d09060"/><rect x="12.0" y="1171.0" width="1.5" height="1.0" fill="#d09060"/><rect x="15.0" y="1171.0" width="1.5" height="1.0" fill="#d09060"/><rect x="18.0" y="1171.0" width="1.5" height="1.0" fill="#d09060"/><rect x="21.0" y="1171.0" width="1.5" height="1.0" fill="#d09060"/><rect x="24.0" y="1171.0" width="1.5" height="1.0" fill="#d09060"/><rect x="27.0" y="1171.0" width="1.5" height="1.0" fill="#d09060"/><rect x="30.0" y="1171.0" width="1.5" height="1.0" fill="#d09060"/><rect x="33.0" y="1171.0" width="1.5" height="1.0" fill="#d09060"/><rect x="36.0" y="1171.0" width="1.5" height="1.0" fill="#d09060"/><rect x="39.0" y="1171.0" width="1.5" height="1.0" fill="#d09060"/><rect x="42.0" y="1171.0" width="1.5" height="1.0" fill="#d09060"/><rect x="45.0" y="1171.0" width="1.5" height="1.0" fill="#d09060"/><rect x="48.0" y="1171.0" width="1.5" height="1.0" fill="#d09060"/><rect x="51.0" y="1171.0" width="1.5" height="1.0" fill="#d09060"/><rect x="54.0" y="1171.0" width="1.5" height="1.0" fill="#d09060"/><rect x="57.0" y="1171.0" width="1.5" height="1.0" fill="#d09060"/><rect x="60.0" y="1171.0" width="1.5" height="1.0" fill="#d09060"/><rect x="63.0" y="1171.0" width="1.5" height="1.0" fill="#d09060"/><rect x="66.0" y="1171.0" width="1.5" height="1.0" fill="#d09060"/><rect x="69.0" y="1171.0" width="1.5" height="1.0" fill="#d09060"/><rect x="72.0" y="1171.0" width="1.5" height="1.0" fill="#d09060"/><rect x="75.0" y="1171.0" width="1.5" height="1.0" fill="#d09060"/><rect x="0.0" y="1174.0" width="80.0" height="27.0" fill="#8a857f"/><rect x="2.7" y="1181.2" width="1.0" height="1.2" fill="#0f1111"/><rect x="6.5" y="1185.9" width="1.0" height="1.2" fill="#0f1111"/><rect x="17.2" y="1183.0" width="1.0" height="1.2" fill="#0f1111"/><rect x="58.3" y="1179.1" width="1.0" height="1.2" fill="#0f1111"/><rect x="76.5" y="1183.7" width="1.0" height="1.2" fill="#0f1111"/><rect x="51.6" y="1186.6" width="2.0" height="1.2" fill="#0f1111"/><rect x="26.9" y="1176.5" width="1.0" height="1.2" fill="#0f1111"/><rect x="37.9" y="1185.8" width="2.0" height="1.2" fill="#0f1111"/><rect x="20.8" y="1174.9" width="1.0" height="1.2" fill="#0f1111"/><rect x="72.5" y="1183.2" width="1.0" height="1.2" fill="#0f1111"/><rect x="50.5" y="1182.0" width="2.0" height="1.2" fill="#0f1111"/><rect x="17.0" y="1180.2" width="2.0" height="1.2" fill="#0f1111"/><rect x="64.4" y="1184.2" width="2.0" height="1.2" fill="#0f1111"/><rect x="18.6" y="1180.9" width="1.0" height="1.2" fill="#0f1111"/><rect x="73.9" y="1176.4" width="1.0" height="1.2" fill="#0f1111"/><rect x="44.3" y="1180.1" width="1.0" height="1.2" fill="#0f1111"/><rect x="73.2" y="1187.5" width="2.0" height="1.2" fill="#0f1111"/><rect x="39.5" y="1178.0" width="2.0" height="1.2" fill="#0f1111"/><rect x="7.9" y="1181.5" width="2.0" height="1.2" fill="#0f1111"/><rect x="13.0" y="1187.3" width="2.0" height="1.2" fill="#0f1111"/><rect x="30.4" y="1175.7" width="1.0" height="1.2" fill="#0f1111"/><rect x="39.9" y="1178.2" width="2.0" height="1.2" fill="#0f1111"/><rect x="30.8" y="1182.2" width="2.0" height="1.2" fill="#0f1111"/><rect x="61.6" y="1178.8" width="2.0" height="1.2" fill="#0f1111"/><rect x="9.9" y="1178.3" width="2.0" height="1.2" fill="#0f1111"/><rect x="45.0" y="1188.2" width="2.0" height="1.2" fill="#0f1111"/><rect x="38.5" y="1187.9" width="1.0" height="1.2" fill="#0f1111"/><rect x="43.5" y="1186.9" width="1.0" height="1.2" fill="#0f1111"/><rect x="28.8" y="1183.1" width="2.0" height="1.2" fill="#0f1111"/><rect x="23.4" y="1184.6" width="1.0" height="1.2" fill="#0f1111"/><rect x="33.6" y="1177.1" width="1.0" height="1.2" fill="#0f1111"/><rect x="16.5" y="1181.6" width="1.0" height="1.2" fill="#0f1111"/><rect x="60.3" y="1177.6" width="1.0" height="1.2" fill="#0f1111"/><rect x="54.7" y="1187.9" width="1.0" height="1.2" fill="#0f1111"/><rect x="54.3" y="1184.7" width="1.0" height="1.2" fill="#0f1111"/><rect x="21.3" y="1188.6" width="1.0" height="1.2" fill="#0f1111"/><rect x="77.5" y="1178.7" width="1.0" height="1.2" fill="#0f1111"/><rect x="41.2" y="1179.3" width="1.0" height="1.2" fill="#0f1111"/><rect x="1.0" y="1177.0" width="1.0" height="1.2" fill="#0f1111"/><rect x="72.5" y="1177.4" width="1.0" height="1.2" fill="#0f1111"/><rect x="74.6" y="1178.0" width="2.0" height="1.2" fill="#0f1111"/><rect x="54.0" y="1179.8" width="1.0" height="1.2" fill="#0f1111"/><rect x="5.4" y="1186.5" width="2.0" height="1.2" fill="#0f1111"/><rect x="8.8" y="1185.2" width="2.0" height="1.2" fill="#0f1111"/><rect x="41.2" y="1180.4" width="1.0" height="1.2" fill="#0f1111"/><rect x="76.3" y="1188.9" width="2.0" height="1.2" fill="#0f1111"/><rect x="49.9" y="1183.8" width="1.0" height="1.2" fill="#0f1111"/><rect x="29.7" y="1179.5" width="1.0" height="1.2" fill="#0f1111"/><rect x="28.7" y="1187.5" width="2.0" height="1.2" fill="#0f1111"/><rect x="43.5" y="1176.4" width="1.0" height="1.2" fill="#0f1111"/><rect x="11.9" y="1182.8" width="1.0" height="1.2" fill="#0f1111"/><rect x="12.8" y="1181.5" width="1.0" height="1.2" fill="#0f1111"/><rect x="44.8" y="1180.2" width="1.0" height="1.2" fill="#0f1111"/><rect x="58.2" y="1177.5" width="1.0" height="1.2" fill="#0f1111"/><rect x="18.9" y="1185.4" width="1.0" height="1.2" fill="#0f1111"/><rect x="71.6" y="1179.4" width="1.0" height="1.2" fill="#0f1111"/><rect x="66.8" y="1182.8" width="2.0" height="1.2" fill="#0f1111"/><rect x="26.8" y="1185.5" width="1.0" height="1.2" fill="#0f1111"/><rect x="78.0" y="1188.9" width="1.0" height="1.2" fill="#0f1111"/><rect x="36.2" y="1181.5" width="1.0" height="1.2" fill="#0f1111"/><rect x="48.3" y="1191.2" width="1.0" height="1.2" fill="#0f1111"/><rect x="20.8" y="1198.3" width="1.0" height="1.2" fill="#0f1111"/><rect x="27.1" y="1189.9" width="2.0" height="1.2" fill="#0f1111"/><rect x="5.9" y="1198.3" width="2.0" height="1.2" fill="#0f1111"/><rect x="19.6" y="1190.9" width="2.0" height="1.2" fill="#0f1111"/><rect x="34.6" y="1200.2" width="1.0" height="1.2" fill="#0f1111"/><rect x="56.5" y="1194.1" width="1.0" height="1.2" fill="#0f1111"/><rect x="47.0" y="1195.0" width="3.0" height="1.2" fill="#0f1111"/><rect x="51.8" y="1190.9" width="3.0" height="1.2" fill="#0f1111"/><rect x="63.2" y="1192.4" width="1.0" height="1.2" fill="#0f1111"/><rect x="26.8" y="1190.2" width="3.0" height="1.2" fill="#0f1111"/><rect x="59.8" y="1191.3" width="2.0" height="1.2" fill="#0f1111"/><rect x="13.4" y="1197.0" width="2.0" height="1.2" fill="#0f1111"/><rect x="20.7" y="1194.4" width="1.0" height="1.2" fill="#0f1111"/><rect x="72.2" y="1189.0" width="1.0" height="1.2" fill="#0f1111"/><rect x="52.9" y="1190.2" width="2.0" height="1.2" fill="#0f1111"/><rect x="7.0" y="1197.2" width="2.0" height="1.2" fill="#0f1111"/><rect x="26.8" y="1192.2" width="3.0" height="1.2" fill="#0f1111"/><rect x="26.4" y="1189.5" width="2.0" height="1.2" fill="#0f1111"/><rect x="55.1" y="1194.2" width="1.0" height="1.2" fill="#0f1111"/><rect x="6.8" y="1189.7" width="1.0" height="1.2" fill="#0f1111"/><rect x="79.2" y="1200.0" width="1.0" height="1.2" fill="#0f1111"/><rect x="30.6" y="1197.2" width="2.0" height="1.2" fill="#0f1111"/><rect x="15.5" y="1197.0" width="2.0" height="1.2" fill="#0f1111"/><rect x="45.0" y="1194.4" width="1.0" height="1.2" fill="#0f1111"/><rect x="74.7" y="1198.8" width="2.0" height="1.2" fill="#0f1111"/><rect x="10.2" y="1189.8" width="2.0" height="1.2" fill="#0f1111"/><rect x="10.2" y="1197.2" width="3.0" height="1.2" fill="#0f1111"/><rect x="14.8" y="1200.8" width="3.0" height="1.2" fill="#0f1111"/><rect x="3.6" y="1197.6" width="1.0" height="1.2" fill="#0f1111"/><rect x="9.0" y="1192.9" width="1.0" height="1.2" fill="#0f1111"/><rect x="17.7" y="1200.4" width="2.0" height="1.2" fill="#0f1111"/><rect x="27.8" y="1197.3" width="2.0" height="1.2" fill="#0f1111"/><rect x="32.5" y="1198.9" width="1.0" height="1.2" fill="#0f1111"/><rect x="78.3" y="1194.3" width="1.0" height="1.2" fill="#0f1111"/><rect x="10.6" y="1195.5" width="2.0" height="1.2" fill="#0f1111"/><rect x="69.2" y="1196.6" width="1.0" height="1.2" fill="#0f1111"/><rect x="52.7" y="1192.1" width="1.0" height="1.2" fill="#0f1111"/><rect x="9.2" y="1193.6" width="3.0" height="1.2" fill="#0f1111"/><rect x="17.7" y="1190.8" width="2.0" height="1.2" fill="#0f1111"/><rect x="6.7" y="1192.7" width="3.0" height="1.2" fill="#0f1111"/><rect x="25.5" y="1199.9" width="3.0" height="1.2" fill="#0f1111"/><rect x="69.2" y="1196.1" width="3.0" height="1.2" fill="#0f1111"/><rect x="62.8" y="1199.1" width="3.0" height="1.2" fill="#0f1111"/><rect x="15.7" y="1195.2" width="2.0" height="1.2" fill="#0f1111"/><rect x="58.2" y="1190.5" width="2.0" height="1.2" fill="#0f1111"/><rect x="40.8" y="1196.1" width="1.0" height="1.2" fill="#0f1111"/><rect x="49.6" y="1196.9" width="1.0" height="1.2" fill="#0f1111"/><rect x="40.3" y="1194.0" width="3.0" height="1.2" fill="#0f1111"/><rect x="47.8" y="1189.5" width="2.0" height="1.2" fill="#0f1111"/><rect x="22.1" y="1198.2" width="3.0" height="1.2" fill="#0f1111"/><rect x="35.7" y="1193.5" width="2.0" height="1.2" fill="#0f1111"/><rect x="19.9" y="1200.1" width="3.0" height="1.2" fill="#0f1111"/><rect x="43.4" y="1195.5" width="2.0" height="1.2" fill="#0f1111"/><rect x="32.2" y="1197.5" width="2.0" height="1.2" fill="#0f1111"/><rect x="38.6" y="1197.8" width="1.0" height="1.2" fill="#0f1111"/><rect x="58.3" y="1199.3" width="3.0" height="1.2" fill="#0f1111"/><rect x="24.5" y="1193.3" width="2.0" height="1.2" fill="#0f1111"/><rect x="58.7" y="1191.5" width="1.0" height="1.2" fill="#0f1111"/><rect x="78.7" y="1194.2" width="3.0" height="1.2" fill="#0f1111"/><rect x="54.1" y="1196.6" width="3.0" height="1.2" fill="#0f1111"/><rect x="1.3" y="1195.6" width="2.0" height="1.2" fill="#0f1111"/><rect x="28.8" y="1189.4" width="3.0" height="1.2" fill="#0f1111"/><rect x="42.0" y="1197.0" width="2.0" height="1.2" fill="#0f1111"/><rect x="64.4" y="1191.8" width="2.0" height="1.2" fill="#0f1111"/><rect x="37.8" y="1197.6" width="3.0" height="1.2" fill="#0f1111"/><rect x="59.0" y="1194.9" width="2.0" height="1.2" fill="#0f1111"/><rect x="15.8" y="1199.8" width="1.0" height="1.2" fill="#0f1111"/><rect x="57.0" y="1199.7" width="2.0" height="1.2" fill="#0f1111"/><rect x="69.4" y="1194.3" width="2.0" height="1.2" fill="#0f1111"/><rect x="12.4" y="1190.8" width="3.0" height="1.2" fill="#0f1111"/><rect x="14.7" y="1190.9" width="2.0" height="1.2" fill="#0f1111"/><rect x="4.9" y="1197.1" width="1.0" height="1.2" fill="#0f1111"/><rect x="26.5" y="1199.2" width="1.0" height="1.2" fill="#0f1111"/><rect x="34.2" y="1191.3" width="2.0" height="1.2" fill="#0f1111"/><rect x="40.7" y="1190.3" width="2.0" height="1.2" fill="#0f1111"/><rect x="35.2" y="1193.8" width="3.0" height="1.2" fill="#0f1111"/><rect x="79.1" y="1200.8" width="2.0" height="1.2" fill="#0f1111"/><rect x="31.2" y="1193.6" width="1.0" height="1.2" fill="#0f1111"/><rect x="58.9" y="1190.4" width="2.0" height="1.2" fill="#0f1111"/><rect x="26.6" y="1197.2" width="3.0" height="1.2" fill="#0f1111"/><rect x="57.3" y="1191.5" width="3.0" height="1.2" fill="#0f1111"/><rect x="53.9" y="1196.3" width="2.0" height="1.2" fill="#0f1111"/><rect x="7.9" y="1197.5" width="1.0" height="1.2" fill="#0f1111"/><rect x="18.7" y="1196.0" width="3.0" height="1.2" fill="#0f1111"/><rect x="70.6" y="1190.5" width="3.0" height="1.2" fill="#0f1111"/><rect x="26.0" y="1196.7" width="3.0" height="1.2" fill="#0f1111"/><rect x="7.2" y="1194.5" width="1.0" height="1.2" fill="#0f1111"/><rect x="17.0" y="1192.7" width="2.0" height="1.2" fill="#0f1111"/><rect x="73.2" y="1189.2" width="1.0" height="1.2" fill="#0f1111"/><rect x="9.3" y="1200.8" width="1.0" height="1.2" fill="#0f1111"/><rect x="52.3" y="1194.1" width="2.0" height="1.2" fill="#0f1111"/><rect x="47.0" y="1193.5" width="1.0" height="1.2" fill="#0f1111"/><rect x="41.6" y="1195.6" width="2.0" height="1.2" fill="#0f1111"/><rect x="21.5" y="1198.3" width="2.0" height="1.2" fill="#0f1111"/><rect x="37.4" y="1189.2" width="3.0" height="1.2" fill="#0f1111"/><rect x="30.4" y="1191.7" width="3.0" height="1.2" fill="#0f1111"/><rect x="14.0" y="1196.2" width="2.0" height="1.2" fill="#0f1111"/><rect x="43.9" y="1193.6" width="1.0" height="1.2" fill="#0f1111"/><rect x="78.3" y="1198.1" width="3.0" height="1.2" fill="#0f1111"/><rect x="35.2" y="1200.9" width="1.0" height="1.2" fill="#0f1111"/><rect x="24.9" y="1199.5" width="3.0" height="1.2" fill="#0f1111"/><rect x="0.2" y="1190.1" width="1.0" height="1.2" fill="#0f1111"/><rect x="14.7" y="1189.1" width="2.0" height="1.2" fill="#0f1111"/><rect x="40.6" y="1192.5" width="3.0" height="1.2" fill="#0f1111"/><rect x="27.8" y="1193.4" width="3.0" height="1.2" fill="#0f1111"/><rect x="13.5" y="1195.1" width="2.0" height="1.2" fill="#0f1111"/><rect x="9.1" y="1192.5" width="3.0" height="1.2" fill="#0f1111"/><rect x="16.8" y="1199.5" width="2.0" height="1.2" fill="#0f1111"/><rect x="67.8" y="1196.2" width="3.0" height="1.2" fill="#0f1111"/><rect x="45.1" y="1192.4" width="1.0" height="1.2" fill="#0f1111"/><rect x="49.5" y="1197.6" width="1.0" height="1.2" fill="#0f1111"/><rect x="29.3" y="1200.8" width="3.0" height="1.2" fill="#0f1111"/><rect x="26.2" y="1192.9" width="1.0" height="1.2" fill="#0f1111"/><rect x="27.1" y="1194.0" width="2.0" height="1.2" fill="#0f1111"/><rect x="17.8" y="1189.0" width="3.0" height="1.2" fill="#0f1111"/><rect x="15.8" y="1195.4" width="2.0" height="1.2" fill="#0f1111"/><rect x="32.5" y="1191.8" width="3.0" height="1.2" fill="#0f1111"/><rect x="36.6" y="1199.0" width="2.0" height="1.2" fill="#0f1111"/><rect x="65.2" y="1189.7" width="2.0" height="1.2" fill="#0f1111"/><rect x="17.6" y="1200.5" width="3.0" height="1.2" fill="#0f1111"/><rect x="32.1" y="1189.5" width="3.0" height="1.2" fill="#0f1111"/><rect x="37.8" y="1191.4" width="1.0" height="1.2" fill="#0f1111"/><rect x="5.4" y="1191.1" width="1.0" height="1.2" fill="#0f1111"/><rect x="20.7" y="1196.7" width="1.0" height="1.2" fill="#0f1111"/><rect x="56.2" y="1198.2" width="3.0" height="1.2" fill="#0f1111"/><rect x="40.8" y="1192.8" width="3.0" height="1.2" fill="#0f1111"/><rect x="42.7" y="1197.6" width="3.0" height="1.2" fill="#0f1111"/><rect x="49.3" y="1190.6" width="2.0" height="1.2" fill="#0f1111"/><rect x="24.1" y="1191.4" width="3.0" height="1.2" fill="#0f1111"/><rect x="63.0" y="1200.3" width="1.0" height="1.2" fill="#0f1111"/><rect x="53.7" y="1197.9" width="2.0" height="1.2" fill="#0f1111"/><rect x="45.3" y="1198.0" width="2.0" height="1.2" fill="#0f1111"/><rect x="39.5" y="1195.6" width="1.0" height="1.2" fill="#0f1111"/><rect x="65.8" y="1196.8" width="1.0" height="1.2" fill="#0f1111"/><rect x="6.5" y="1196.5" width="3.0" height="1.2" fill="#0f1111"/><rect x="74.7" y="1200.7" width="3.0" height="1.2" fill="#0f1111"/><rect x="11.8" y="1198.7" width="1.0" height="1.2" fill="#0f1111"/><rect x="14.2" y="1198.9" width="3.0" height="1.2" fill="#0f1111"/><rect x="1.9" y="1196.4" width="1.0" height="1.2" fill="#0f1111"/><rect x="35.2" y="1199.0" width="3.0" height="1.2" fill="#0f1111"/><rect x="36.3" y="1191.9" width="1.0" height="1.2" fill="#0f1111"/><rect x="16.2" y="1199.8" width="2.0" height="1.2" fill="#0f1111"/><rect x="48.3" y="1190.6" width="2.0" height="1.2" fill="#0f1111"/><rect x="5.3" y="1189.9" width="3.0" height="1.2" fill="#0f1111"/><rect x="57.6" y="1189.6" width="3.0" height="1.2" fill="#0f1111"/><rect x="23.4" y="1192.3" width="3.0" height="1.2" fill="#0f1111"/><rect x="72.4" y="1199.4" width="2.0" height="1.2" fill="#0f1111"/><rect x="48.2" y="1200.6" width="3.0" height="1.2" fill="#0f1111"/><rect x="74.1" y="1198.7" width="3.0" height="1.2" fill="#0f1111"/><rect x="22.9" y="1192.7" width="3.0" height="1.2" fill="#0f1111"/><rect x="44.2" y="1196.3" width="1.0" height="1.2" fill="#0f1111"/><rect x="30.5" y="1195.5" width="2.0" height="1.2" fill="#0f1111"/><rect x="62.9" y="1194.5" width="1.0" height="1.2" fill="#0f1111"/><rect x="75.2" y="1191.6" width="2.0" height="1.2" fill="#0f1111"/><rect x="59.6" y="1199.0" width="1.0" height="1.2" fill="#0f1111"/><rect x="10.7" y="1192.7" width="1.0" height="1.2" fill="#0f1111"/><rect x="17.9" y="1191.6" width="2.0" height="1.2" fill="#0f1111"/><rect x="36.9" y="1193.2" width="2.0" height="1.2" fill="#0f1111"/><rect x="2.1" y="1198.0" width="3.0" height="1.2" fill="#0f1111"/><rect x="0.0" y="1201.0" width="80.0" height="2.0" fill="#0f1111"/><rect x="0.0" y="1203.0" width="80.0" height="12.0" fill="#8a857f"/><rect x="63.8" y="1211.5" width="2.0" height="1.2" fill="#0f1111"/><rect x="16.8" y="1207.2" width="3.0" height="1.2" fill="#0f1111"/><rect x="73.0" y="1214.2" width="1.0" height="1.2" fill="#0f1111"/><rect x="42.0" y="1204.8" width="1.0" height="1.2" fill="#0f1111"/><rect x="37.7" y="1209.1" width="1.0" height="1.2" fill="#0f1111"/><rect x="52.3" y="1206.0" width="3.0" height="1.2" fill="#0f1111"/><rect x="65.0" y="1204.1" width="2.0" height="1.2" fill="#0f1111"/><rect x="27.9" y="1204.5" width="2.0" height="1.2" fill="#0f1111"/><rect x="30.2" y="1209.9" width="1.0" height="1.2" fill="#0f1111"/><rect x="25.3" y="1212.7" width="2.0" height="1.2" fill="#0f1111"/><rect x="20.3" y="1213.0" width="3.0" height="1.2" fill="#0f1111"/><rect x="44.2" y="1209.8" width="1.0" height="1.2" fill="#0f1111"/><rect x="56.1" y="1205.0" width="3.0" height="1.2" fill="#0f1111"/><rect x="69.0" y="1212.4" width="3.0" height="1.2" fill="#0f1111"/><rect x="34.8" y="1208.6" width="3.0" height="1.2" fill="#0f1111"/><rect x="57.1" y="1208.2" width="1.0" height="1.2" fill="#0f1111"/><rect x="12.5" y="1205.1" width="1.0" height="1.2" fill="#0f1111"/><rect x="25.4" y="1210.7" width="2.0" height="1.2" fill="#0f1111"/><rect x="31.0" y="1204.8" width="1.0" height="1.2" fill="#0f1111"/><rect x="57.8" y="1213.1" width="1.0" height="1.2" fill="#0f1111"/><rect x="38.0" y="1209.5" width="2.0" height="1.2" fill="#0f1111"/><rect x="51.7" y="1208.8" width="1.0" height="1.2" fill="#0f1111"/><rect x="1.3" y="1214.2" width="1.0" height="1.2" fill="#0f1111"/><rect x="35.5" y="1213.7" width="3.0" height="1.2" fill="#0f1111"/><rect x="45.6" y="1209.5" width="1.0" height="1.2" fill="#0f1111"/><rect x="68.0" y="1214.8" width="3.0" height="1.2" fill="#0f1111"/><rect x="58.2" y="1205.7" width="3.0" height="1.2" fill="#0f1111"/><rect x="13.8" y="1207.2" width="1.0" height="1.2" fill="#0f1111"/><rect x="38.4" y="1203.8" width="3.0" height="1.2" fill="#0f1111"/><rect x="12.6" y="1206.7" width="2.0" height="1.2" fill="#0f1111"/><rect x="44.1" y="1211.8" width="1.0" height="1.2" fill="#0f1111"/><rect x="4.8" y="1209.9" width="1.0" height="1.2" fill="#0f1111"/><rect x="15.8" y="1205.5" width="2.0" height="1.2" fill="#0f1111"/><rect x="20.2" y="1204.0" width="2.0" height="1.2" fill="#0f1111"/><rect x="14.6" y="1203.0" width="2.0" height="1.2" fill="#0f1111"/><rect x="17.9" y="1205.9" width="3.0" height="1.2" fill="#0f1111"/><rect x="33.1" y="1212.1" width="1.0" height="1.2" fill="#0f1111"/><rect x="9.2" y="1212.0" width="2.0" height="1.2" fill="#0f1111"/><rect x="55.8" y="1212.4" width="1.0" height="1.2" fill="#0f1111"/><rect x="16.7" y="1203.4" width="2.0" height="1.2" fill="#0f1111"/><rect x="32.9" y="1214.2" width="2.0" height="1.2" fill="#0f1111"/><rect x="17.9" y="1208.0" width="3.0" height="1.2" fill="#0f1111"/><rect x="75.8" y="1209.1" width="2.0" height="1.2" fill="#0f1111"/><rect x="54.1" y="1210.0" width="3.0" height="1.2" fill="#0f1111"/><rect x="66.5" y="1208.7" width="1.0" height="1.2" fill="#0f1111"/><rect x="66.2" y="1213.9" width="2.0" height="1.2" fill="#0f1111"/><rect x="16.9" y="1203.6" width="1.0" height="1.2" fill="#0f1111"/><rect x="36.9" y="1209.9" width="1.0" height="1.2" fill="#0f1111"/><rect x="79.6" y="1209.1" width="1.0" height="1.2" fill="#0f1111"/><rect x="6.4" y="1207.4" width="2.0" height="1.2" fill="#0f1111"/><rect x="78.3" y="1203.2" width="3.0" height="1.2" fill="#0f1111"/><rect x="39.1" y="1204.9" width="1.0" height="1.2" fill="#0f1111"/><rect x="37.6" y="1204.6" width="2.0" height="1.2" fill="#0f1111"/><rect x="34.7" y="1210.6" width="1.0" height="1.2" fill="#0f1111"/><rect x="11.4" y="1207.7" width="1.0" height="1.2" fill="#0f1111"/><rect x="52.6" y="1203.3" width="2.0" height="1.2" fill="#0f1111"/><rect x="57.6" y="1209.2" width="1.0" height="1.2" fill="#0f1111"/><rect x="26.9" y="1204.5" width="3.0" height="1.2" fill="#0f1111"/><rect x="6.3" y="1203.5" width="2.0" height="1.2" fill="#0f1111"/><rect x="24.5" y="1209.6" width="1.0" height="1.2" fill="#0f1111"/><rect x="9.2" y="1211.8" width="1.0" height="1.2" fill="#0f1111"/><rect x="79.6" y="1206.6" width="3.0" height="1.2" fill="#0f1111"/><rect x="73.3" y="1211.5" width="3.0" height="1.2" fill="#0f1111"/><rect x="31.6" y="1209.0" width="2.0" height="1.2" fill="#0f1111"/><rect x="71.6" y="1204.4" width="2.0" height="1.2" fill="#0f1111"/><rect x="24.0" y="1214.6" width="2.0" height="1.2" fill="#0f1111"/><rect x="8.5" y="1214.1" width="2.0" height="1.2" fill="#0f1111"/><rect x="77.5" y="1206.9" width="3.0" height="1.2" fill="#0f1111"/><rect x="57.0" y="1207.5" width="3.0" height="1.2" fill="#0f1111"/><rect x="60.4" y="1206.3" width="1.0" height="1.2" fill="#0f1111"/><rect x="46.9" y="1210.8" width="2.0" height="1.2" fill="#0f1111"/><rect x="69.9" y="1205.4" width="2.0" height="1.2" fill="#0f1111"/><rect x="31.2" y="1210.3" width="2.0" height="1.2" fill="#0f1111"/><rect x="12.2" y="1209.2" width="2.0" height="1.2" fill="#0f1111"/><rect x="11.9" y="1206.3" width="1.0" height="1.2" fill="#0f1111"/><rect x="9.8" y="1203.2" width="1.0" height="1.2" fill="#0f1111"/><rect x="2.7" y="1208.3" width="2.0" height="1.2" fill="#0f1111"/><rect x="72.9" y="1208.3" width="1.0" height="1.2" fill="#0f1111"/><rect x="8.2" y="1212.6" width="2.0" height="1.2" fill="#0f1111"/><rect x="24.1" y="1211.6" width="1.0" height="1.2" fill="#0f1111"/><rect x="64.8" y="1207.4" width="2.0" height="1.2" fill="#0f1111"/><rect x="7.1" y="1203.3" width="3.0" height="1.2" fill="#0f1111"/><rect x="17.8" y="1204.0" width="1.0" height="1.2" fill="#0f1111"/><rect x="44.2" y="1210.3" width="1.0" height="1.2" fill="#0f1111"/><rect x="11.0" y="1212.9" width="2.0" height="1.2" fill="#0f1111"/><rect x="35.3" y="1210.0" width="2.0" height="1.2" fill="#0f1111"/><rect x="67.2" y="1203.6" width="3.0" height="1.2" fill="#0f1111"/><rect x="78.1" y="1209.5" width="3.0" height="1.2" fill="#0f1111"/><rect x="32.7" y="1210.2" width="1.0" height="1.2" fill="#0f1111"/><rect x="8.0" y="1203.8" width="3.0" height="1.2" fill="#0f1111"/><rect x="17.2" y="1213.1" width="2.0" height="1.2" fill="#0f1111"/><rect x="54.2" y="1206.5" width="3.0" height="1.2" fill="#0f1111"/><rect x="35.0" y="1206.4" width="3.0" height="1.2" fill="#0f1111"/><rect x="26.0" y="1209.6" width="3.0" height="1.2" fill="#0f1111"/><rect x="51.4" y="1204.0" width="3.0" height="1.2" fill="#0f1111"/><rect x="39.7" y="1205.7" width="1.0" height="1.2" fill="#0f1111"/><rect x="25.3" y="1213.0" width="2.0" height="1.2" fill="#0f1111"/><rect x="57.6" y="1207.5" width="2.0" height="1.2" fill="#0f1111"/><rect x="73.1" y="1209.2" width="3.0" height="1.2" fill="#0f1111"/><rect x="78.5" y="1213.7" width="2.0" height="1.2" fill="#0f1111"/><rect x="75.5" y="1206.1" width="3.0" height="1.2" fill="#0f1111"/><rect x="64.1" y="1204.6" width="3.0" height="1.2" fill="#0f1111"/><rect x="51.8" y="1212.7" width="3.0" height="1.2" fill="#0f1111"/><rect x="1.2" y="1206.1" width="3.0" height="1.2" fill="#0f1111"/><rect x="14.0" y="1206.1" width="3.0" height="1.2" fill="#0f1111"/><rect x="74.4" y="1207.8" width="1.0" height="1.2" fill="#0f1111"/><rect x="57.1" y="1204.2" width="3.0" height="1.2" fill="#0f1111"/><rect x="64.1" y="1205.2" width="3.0" height="1.2" fill="#0f1111"/><rect x="52.0" y="1211.2" width="1.0" height="1.2" fill="#0f1111"/><rect x="71.7" y="1214.5" width="2.0" height="1.2" fill="#0f1111"/><rect x="31.3" y="1208.1" width="2.0" height="1.2" fill="#0f1111"/><rect x="53.3" y="1209.7" width="3.0" height="1.2" fill="#0f1111"/><rect x="22.9" y="1210.9" width="2.0" height="1.2" fill="#0f1111"/><rect x="41.2" y="1205.3" width="1.0" height="1.2" fill="#0f1111"/><rect x="77.2" y="1212.3" width="3.0" height="1.2" fill="#0f1111"/><rect x="37.2" y="1213.1" width="1.0" height="1.2" fill="#0f1111"/><rect x="54.6" y="1203.9" width="3.0" height="1.2" fill="#0f1111"/><rect x="75.1" y="1213.0" width="2.0" height="1.2" fill="#0f1111"/><rect x="71.4" y="1208.5" width="2.0" height="1.2" fill="#0f1111"/><rect x="25.0" y="1207.4" width="1.0" height="1.2" fill="#0f1111"/><rect x="67.6" y="1211.0" width="1.0" height="1.2" fill="#0f1111"/><rect x="7.1" y="1213.7" width="3.0" height="1.2" fill="#0f1111"/><rect x="17.0" y="1207.0" width="1.0" height="1.2" fill="#0f1111"/><rect x="42.0" y="1204.7" width="3.0" height="1.2" fill="#0f1111"/><rect x="17.9" y="1213.2" width="2.0" height="1.2" fill="#0f1111"/><rect x="77.6" y="1206.5" width="1.0" height="1.2" fill="#0f1111"/><rect x="21.4" y="1207.7" width="1.0" height="1.2" fill="#0f1111"/><rect x="75.9" y="1205.6" width="2.0" height="1.2" fill="#0f1111"/><rect x="1.0" y="1213.3" width="2.0" height="1.2" fill="#0f1111"/><rect x="62.9" y="1204.1" width="1.0" height="1.2" fill="#0f1111"/><rect x="32.3" y="1205.9" width="3.0" height="1.2" fill="#0f1111"/><rect x="8.0" y="1211.5" width="3.0" height="1.2" fill="#0f1111"/><rect x="53.3" y="1204.1" width="2.0" height="1.2" fill="#0f1111"/><rect x="22.9" y="1214.6" width="2.0" height="1.2" fill="#0f1111"/><rect x="45.9" y="1203.4" width="1.0" height="1.2" fill="#0f1111"/><rect x="61.2" y="1210.1" width="3.0" height="1.2" fill="#0f1111"/><rect x="56.9" y="1212.7" width="3.0" height="1.2" fill="#0f1111"/><rect x="38.8" y="1204.8" width="2.0" height="1.2" fill="#0f1111"/><rect x="12.4" y="1209.5" width="2.0" height="1.2" fill="#0f1111"/><rect x="27.7" y="1204.9" width="1.0" height="1.2" fill="#0f1111"/><rect x="56.7" y="1209.9" width="3.0" height="1.2" fill="#0f1111"/><rect x="50.3" y="1210.2" width="1.0" height="1.2" fill="#0f1111"/><rect x="65.0" y="1209.8" width="2.0" height="1.2" fill="#0f1111"/><rect x="3.8" y="1209.0" width="3.0" height="1.2" fill="#0f1111"/><rect x="8.2" y="1207.0" width="3.0" height="1.2" fill="#0f1111"/><rect x="59.5" y="1214.3" width="2.0" height="1.2" fill="#0f1111"/><rect x="53.0" y="1214.2" width="3.0" height="1.2" fill="#0f1111"/><rect x="35.6" y="1208.5" width="3.0" height="1.2" fill="#0f1111"/><rect x="25.4" y="1204.3" width="3.0" height="1.2" fill="#0f1111"/><rect x="14.0" y="1204.4" width="3.0" height="1.2" fill="#0f1111"/><rect x="0.0" y="1215.0" width="80.0" height="3.5" fill="#6dd08a"/><rect x="0.0" y="1218.5" width="80.0" height="15.5" fill="#0f1111"/><rect x="54.7" y="1232.4" width="1.0" height="1.2" fill="#6ccf86"/><rect x="16.8" y="1222.1" width="3.0" height="1.2" fill="#6ccf86"/><rect x="26.7" y="1233.2" width="3.0" height="1.2" fill="#6ccf86"/><rect x="35.6" y="1230.9" width="3.0" height="1.2" fill="#6ccf86"/><rect x="67.0" y="1231.2" width="1.0" height="1.2" fill="#6ccf86"/><rect x="14.0" y="1220.1" width="2.0" height="1.2" fill="#6ccf86"/><rect x="2.5" y="1232.3" width="3.0" height="1.2" fill="#6ccf86"/><rect x="33.0" y="1233.3" width="2.0" height="1.2" fill="#6ccf86"/><rect x="18.6" y="1221.1" width="1.0" height="1.2" fill="#6ccf86"/><rect x="46.9" y="1222.6" width="2.0" height="1.2" fill="#6ccf86"/><rect x="50.4" y="1225.2" width="1.0" height="1.2" fill="#6ccf86"/><rect x="51.6" y="1226.6" width="2.0" height="1.2" fill="#6ccf86"/><rect x="3.0" y="1230.8" width="2.0" height="1.2" fill="#6ccf86"/><rect x="16.2" y="1224.0" width="1.0" height="1.2" fill="#6ccf86"/><rect x="2.1" y="1231.6" width="2.0" height="1.2" fill="#6ccf86"/><rect x="68.7" y="1226.3" width="2.0" height="1.2" fill="#6ccf86"/><rect x="77.3" y="1231.6" width="3.0" height="1.2" fill="#6ccf86"/><rect x="30.3" y="1223.7" width="2.0" height="1.2" fill="#6ccf86"/><rect x="50.2" y="1225.1" width="1.0" height="1.2" fill="#6ccf86"/><rect x="40.0" y="1226.9" width="1.0" height="1.2" fill="#6ccf86"/><rect x="39.4" y="1225.1" width="1.0" height="1.2" fill="#6ccf86"/><rect x="39.8" y="1225.5" width="3.0" height="1.2" fill="#6ccf86"/><rect x="47.9" y="1220.7" width="3.0" height="1.2" fill="#6ccf86"/><rect x="37.6" y="1230.5" width="2.0" height="1.2" fill="#6ccf86"/><rect x="3.7" y="1232.2" width="3.0" height="1.2" fill="#6ccf86"/><rect x="47.7" y="1229.0" width="1.0" height="1.2" fill="#6ccf86"/><rect x="66.1" y="1232.4" width="1.0" height="1.2" fill="#6ccf86"/><rect x="28.1" y="1226.0" width="1.0" height="1.2" fill="#6ccf86"/><rect x="23.7" y="1230.4" width="3.0" height="1.2" fill="#6ccf86"/><rect x="4.2" y="1223.6" width="1.0" height="1.2" fill="#6ccf86"/><rect x="74.3" y="1227.5" width="3.0" height="1.2" fill="#6ccf86"/><rect x="63.9" y="1228.9" width="2.0" height="1.2" fill="#6ccf86"/><rect x="36.8" y="1227.3" width="3.0" height="1.2" fill="#6ccf86"/><rect x="46.4" y="1221.2" width="3.0" height="1.2" fill="#6ccf86"/><rect x="38.2" y="1228.5" width="3.0" height="1.2" fill="#6ccf86"/><rect x="3.6" y="1223.3" width="3.0" height="1.2" fill="#6ccf86"/><rect x="1.1" y="1223.8" width="3.0" height="1.2" fill="#6ccf86"/><rect x="4.8" y="1230.9" width="1.0" height="1.2" fill="#6ccf86"/><rect x="72.8" y="1221.5" width="2.0" height="1.2" fill="#6ccf86"/><rect x="19.0" y="1224.7" width="1.0" height="1.2" fill="#6ccf86"/><rect x="59.7" y="1229.8" width="3.0" height="1.2" fill="#6ccf86"/><rect x="61.6" y="1228.2" width="1.0" height="1.2" fill="#6ccf86"/><rect x="76.4" y="1230.7" width="1.0" height="1.2" fill="#6ccf86"/><rect x="19.8" y="1226.7" width="2.0" height="1.2" fill="#6ccf86"/><rect x="76.1" y="1221.3" width="2.0" height="1.2" fill="#6ccf86"/><rect x="14.0" y="1227.4" width="2.0" height="1.2" fill="#6ccf86"/><rect x="74.8" y="1219.3" width="2.0" height="1.2" fill="#6ccf86"/><rect x="63.7" y="1219.8" width="1.0" height="1.2" fill="#6ccf86"/><rect x="13.1" y="1231.6" width="2.0" height="1.2" fill="#6ccf86"/><rect x="66.8" y="1229.2" width="3.0" height="1.2" fill="#6ccf86"/><rect x="5.1" y="1223.9" width="1.0" height="1.2" fill="#6ccf86"/><rect x="30.4" y="1233.0" width="3.0" height="1.2" fill="#6ccf86"/><rect x="56.1" y="1227.7" width="1.0" height="1.2" fill="#6ccf86"/><rect x="68.3" y="1225.9" width="1.0" height="1.2" fill="#6ccf86"/><rect x="39.0" y="1231.6" width="1.0" height="1.2" fill="#6ccf86"/><rect x="17.3" y="1233.1" width="2.0" height="1.2" fill="#6ccf86"/><rect x="18.3" y="1219.0" width="2.0" height="1.2" fill="#6ccf86"/><rect x="7.8" y="1230.5" width="2.0" height="1.2" fill="#6ccf86"/><rect x="50.7" y="1231.5" width="2.0" height="1.2" fill="#6ccf86"/><rect x="78.2" y="1220.9" width="1.0" height="1.2" fill="#6ccf86"/><rect x="63" y="0" width="3.2" height="1234" fill="#f5e8a0" opacity="0.5"/><rect x="66.2" y="0" width="1.8" height="1234" fill="#2a2c2a"/><rect x="68" y="0" width="3.2" height="1234" fill="#f5e8a0" opacity="0.5"/></svg>
<svg class="ic" style="left:1878px;top:14px;stroke-width:2.3" width="32" height="32" viewBox="0 0 32 32"><path d="M8 3.5 Q1.8 15.5 8 27.5 M24 3.5 Q30.2 15.5 24 27.5 M10.3 11 Q14 9.5 16 15.5 Q18 21.5 21.8 21 M21.8 10.5 Q17.8 10.5 16 15.5 Q14.2 21 10.3 21.3"/></svg>
<svg class="ic" style="left:1878px;top:64px" width="30" height="30" viewBox="0 0 30 30"><path d="M15 3 L28 10 L15 17 L2 10 Z M5 13.5 L2 15.5 L15 22.5 L28 15.5 L25 13.5 M5 19 L2 21 L15 28 L28 21 L25 19"/></svg>
<svg class="ic" style="left:1879px;top:1103px;stroke-width:2.3" width="30" height="22" viewBox="0 0 30 22"><path d="M7.5 11.5 A4.6 4.6 0 1 1 11.8 7 C11.8 13 8.5 17.5 3.5 19.5 C6.5 16.5 7.5 14 7.5 11.5 Z M20.5 11.5 A4.6 4.6 0 1 1 24.8 7 C24.8 13 21.5 17.5 16.5 19.5 C19.5 16.5 20.5 14 20.5 11.5 Z"/></svg>
<svg class="ic" style="left:1880px;top:1151px;stroke-width:2.2" width="28" height="28" viewBox="0 0 28 28"><circle cx="12" cy="12" r="9.3"/><path d="M18.8 18.8 L25 25"/></svg>
<svg class="ic" style="left:1880px;top:1202px;stroke-width:2.2" width="28" height="26" viewBox="0 0 28 26"><path d="M2.5 2.4 L24.5 2.4 M2.5 7.4 L24.5 7.4 M2.5 12.4 L18 12.4 M2.5 17.4 L21.5 17.4 M2.5 22.4 L13.5 22.4"/></svg>
<div class="a" style="left:1919px;top:3px;width:1px;height:1235px;background:#7f90bb"></div>
<svg class="a" style="left:0;top:1262px" width="8" height="7"><path d="M0 0 L0 7 L7 7 A7 7 0 0 1 0 0 Z" fill="#0c0e0e"/></svg>
<svg class="a" style="left:1912px;top:1262px" width="8" height="7"><path d="M8 0 L8 7 L1 7 A7 7 0 0 0 8 0 Z" fill="#0c0e0e"/></svg>
<div class="a" style="left:52px;top:1238px;width:1732px;height:1px;background:#2e3132"></div>
<svg class="a" style="left:1279px;top:1246px" width="17" height="17" viewBox="0 0 17 17"><circle cx="8" cy="8" r="7.3" fill="#e5141c"/><path d="M5 5 L11 11 M11 5 L5 11" stroke="#fff" stroke-width="2"/></svg>
<div class="a s" style="left:1297px;top:1244px;font-size:16.5px;line-height:22px;color:#ebe8e3">1</div>
<svg class="a" style="left:1328px;top:1246px" width="17" height="16" viewBox="0 0 17 16"><path d="M7 1 L14 14.5 L0.5 14.5 Z" fill="#f0ee10"/><path d="M7 5 L7 10 M7 11.5 L7 13" stroke="#111" stroke-width="1.8"/></svg>
<div class="a s" style="left:1346px;top:1244px;font-size:16.5px;line-height:22px;color:#ebe8e3">95</div>
<div class="a s" style="left:1403px;top:1244px;font-size:16.6px;line-height:22px;letter-spacing:0.5px;color:#ebe8e3">mac-aarch64</div>
<div class="a s" style="left:1530px;top:1244px;font-size:16.6px;line-height:22px;letter-spacing:0.54px;color:#ebe8e3">0x103c234c0–0x103c234c4 (0x4 bytes)</div>
<svg class="ic" style="left:1869px;top:1243px;stroke:#e4e0db;stroke-width:1.8" width="20" height="22" viewBox="0 0 20 22"><rect x="3" y="11" width="13" height="9.5" rx="1.5"/><path d="M5.5 11 L5.5 7 A4 4.3 0 0 1 13.5 7 L13.5 11"/></svg>
<svg class="a" style="left:1903px;top:1253px" width="17" height="16"><g fill="#7a7c7d"><rect x="13" y="1" width="2.2" height="2.2"/><rect x="9" y="5" width="2.2" height="2.2"/><rect x="13" y="5" width="2.2" height="2.2"/><rect x="5" y="9" width="2.2" height="2.2"/><rect x="9" y="9" width="2.2" height="2.2"/><rect x="13" y="9" width="2.2" height="2.2"/><rect x="1" y="13" width="2.2" height="2.2"/><rect x="5" y="13" width="2.2" height="2.2"/><rect x="9" y="13" width="2.2" height="2.2"/><rect x="13" y="13" width="2.2" height="2.2"/></g></svg>
</body></html>
